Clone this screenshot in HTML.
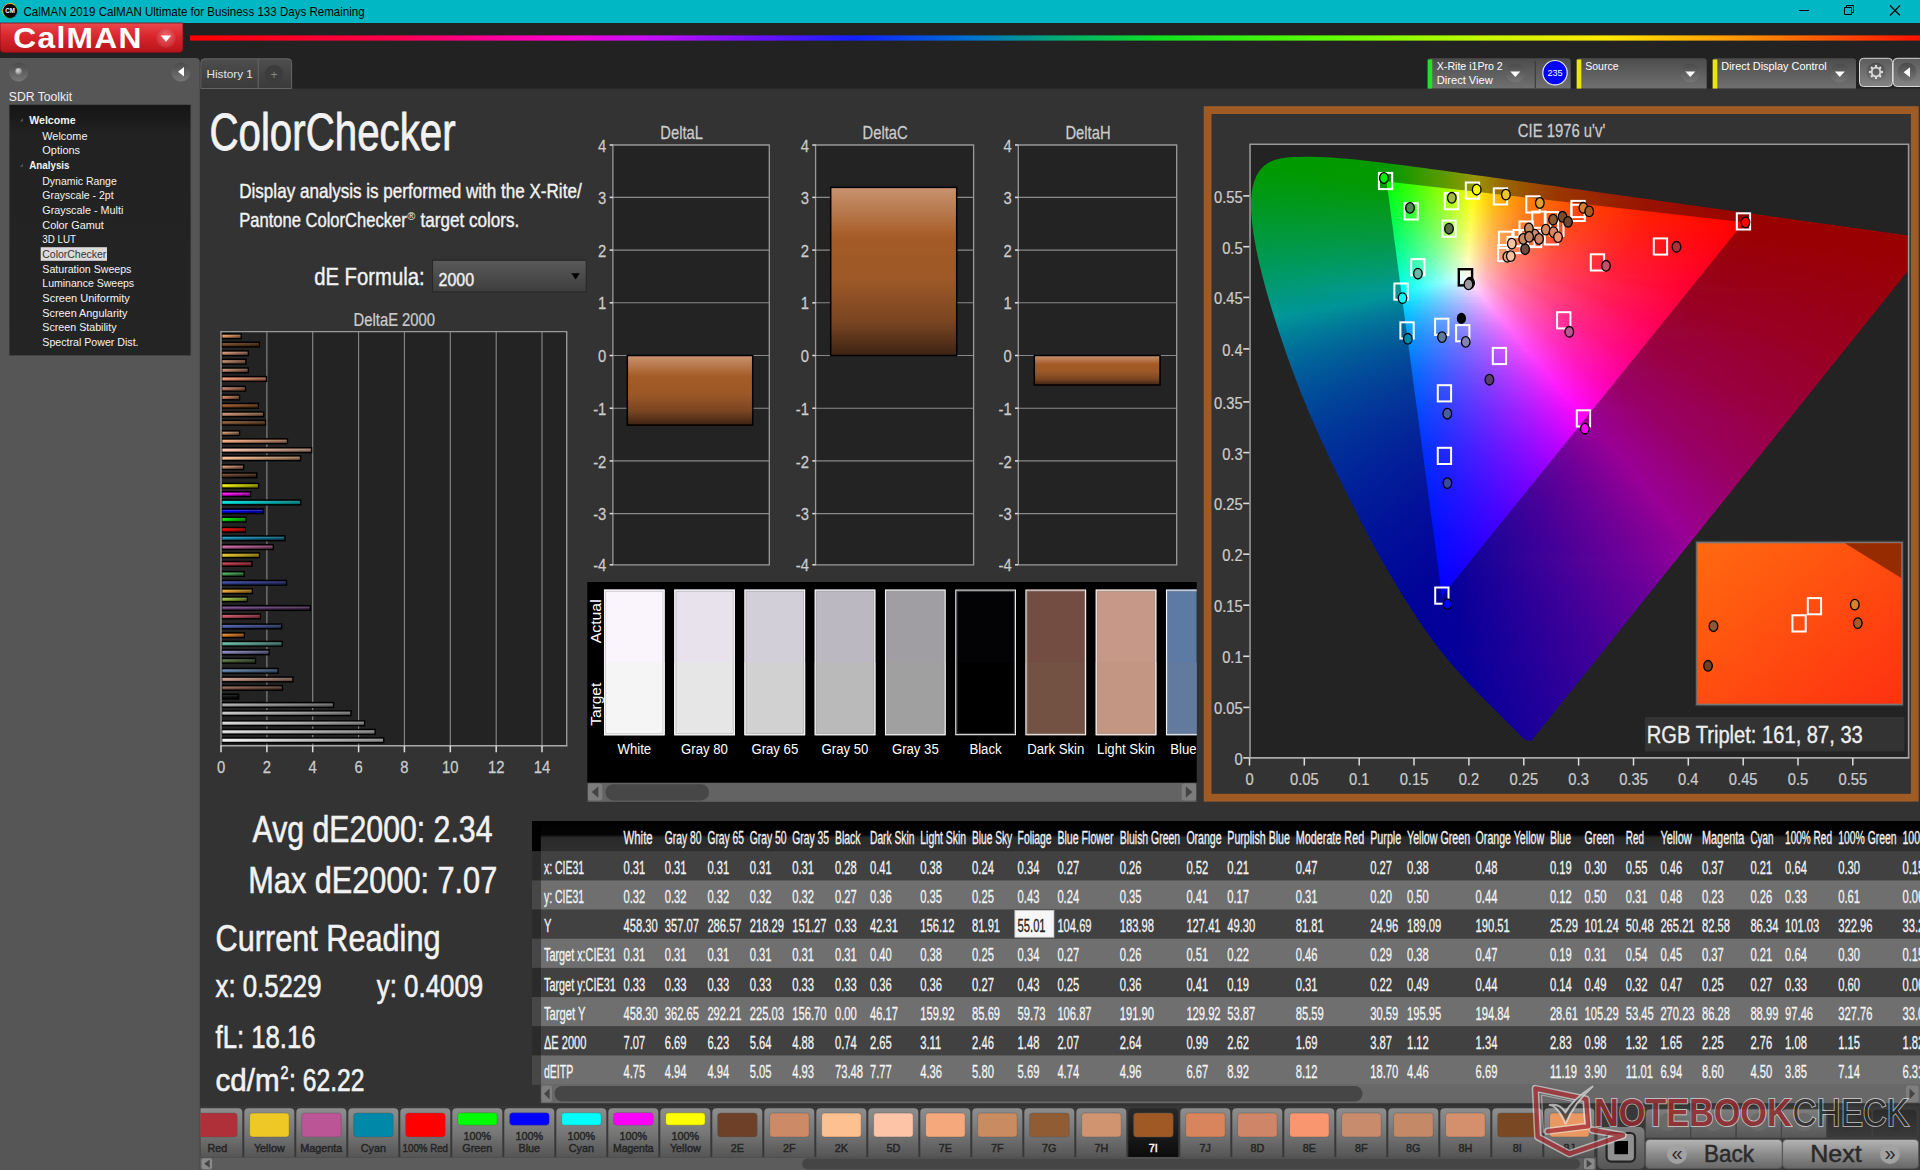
<!DOCTYPE html>
<html lang="en"><head><meta charset="utf-8"><title>CalMAN 2019 - ColorChecker</title>
<style>
html,body{margin:0;padding:0;background:#333;overflow:hidden}
body{width:1920px;height:1170px;position:relative;font-family:"Liberation Sans",sans-serif}
svg{position:absolute;left:0;top:0;display:block}
text{font-family:"Liberation Sans",sans-serif;white-space:pre}
</style></head><body>
<svg width="1920" height="1170" viewBox="0 0 1920 1170">
<defs>
<linearGradient id="icoring" x1="0" y1="0" x2="1" y2="1"><stop offset="0" stop-color="#ff3030"/><stop offset=".35" stop-color="#ffe000"/><stop offset=".65" stop-color="#20d040"/><stop offset="1" stop-color="#3050ff"/></linearGradient>
<linearGradient id="redbtn" x1="0" y1="0" x2="0" y2="1"><stop offset="0" stop-color="#e8494e"/><stop offset=".45" stop-color="#d9262c"/><stop offset="1" stop-color="#b5141a"/></linearGradient>
<radialGradient id="reddot" cx=".5" cy=".35" r=".7"><stop offset="0" stop-color="#f0656a"/><stop offset="1" stop-color="#c8242a"/></radialGradient>
<linearGradient id="rainbow" x1="0" x2="1" y1="0" y2="0"><stop offset="0" stop-color="#ff0000"/><stop offset=".12" stop-color="#ff0050"/><stop offset=".21" stop-color="#ff00c8"/><stop offset=".27" stop-color="#c010ff"/><stop offset=".33" stop-color="#6a10ff"/><stop offset=".385" stop-color="#1020ff"/><stop offset=".45" stop-color="#0070d0"/><stop offset=".50" stop-color="#00a878"/><stop offset=".56" stop-color="#10e020"/><stop offset=".66" stop-color="#60ff00"/><stop offset=".75" stop-color="#c8f800"/><stop offset=".82" stop-color="#ffe800"/><stop offset=".9" stop-color="#ff9000"/><stop offset="1" stop-color="#ff1000"/></linearGradient>
<linearGradient id="knob" x1="0" y1="0" x2="0" y2="1"><stop offset="0" stop-color="#4a4a4a"/><stop offset="1" stop-color="#767676"/></linearGradient>
<radialGradient id="ball" cx=".4" cy=".35" r=".7"><stop offset="0" stop-color="#ddd"/><stop offset="1" stop-color="#777"/></radialGradient>
<linearGradient id="treebg" x1="0" y1="0" x2="0" y2="1"><stop offset="0" stop-color="#151515"/><stop offset=".12" stop-color="#222"/><stop offset="1" stop-color="#242424"/></linearGradient>
<linearGradient id="tabg" x1="0" y1="0" x2="0" y2="1"><stop offset="0" stop-color="#4e4e4e"/><stop offset="1" stop-color="#3a3a3a"/></linearGradient>
<linearGradient id="devg" x1="0" y1="0" x2="0" y2="1"><stop offset="0" stop-color="#4c4c4c"/><stop offset="1" stop-color="#707070"/></linearGradient>
<linearGradient id="btng" x1="0" y1="0" x2="0" y2="1"><stop offset="0" stop-color="#5c5c5c"/><stop offset="1" stop-color="#848484"/></linearGradient>
<linearGradient id="barv" x1="0" y1="0" x2="0" y2="1"><stop offset="0" stop-color="#c99470"/><stop offset=".3" stop-color="#a55b26"/><stop offset=".55" stop-color="#9c5827"/><stop offset=".8" stop-color="#7a4522"/><stop offset="1" stop-color="#3c2213"/></linearGradient>
<linearGradient id="ddg" x1="0" y1="0" x2="0" y2="1"><stop offset="0" stop-color="#5a5a5a"/><stop offset="1" stop-color="#3d3d3d"/></linearGradient>
<linearGradient id="shade" x1="0" y1="0" x2="1" y2="0"><stop offset="0" stop-color="#000" stop-opacity="0"/><stop offset="1" stop-color="#000" stop-opacity=".45"/></linearGradient>
<linearGradient id="gloss" x1="0" y1="0" x2="0" y2="1"><stop offset="0" stop-color="#000" stop-opacity=".15"/><stop offset=".3" stop-color="#fff" stop-opacity=".2"/><stop offset=".6" stop-color="#000" stop-opacity="0"/><stop offset="1" stop-color="#000" stop-opacity=".4"/></linearGradient>
<clipPath id="swclip"><rect x="587.3" y="582" width="609.4" height="200"/></clipPath>
<clipPath id="tblclip"><rect x="532" y="821" width="1388" height="264"/></clipPath>
<linearGradient id="thg" x1="0" y1="0" x2="0" y2="1"><stop offset="0" stop-color="#000"/><stop offset=".45" stop-color="#050505"/><stop offset=".55" stop-color="#2a2a2a"/><stop offset="1" stop-color="#2e2e2e"/></linearGradient>
<linearGradient id="cb" gradientUnits="userSpaceOnUse" x1="1249" x2="1909" y1="0" y2="0"/><linearGradient id="d0" href="#cb"><stop offset=".0515" stop-color="#090"/><stop offset=".1364" stop-color="#090"/></linearGradient><linearGradient id="d1" href="#cb"><stop offset=".0364" stop-color="#090"/><stop offset=".1682" stop-color="#090"/></linearGradient><linearGradient id="d2" href="#cb"><stop offset=".0303" stop-color="#090"/><stop offset=".1955" stop-color="#090"/></linearGradient><linearGradient id="d3" href="#cb"><stop offset=".0242" stop-color="#090"/><stop offset=".2091" stop-color="#049900"/><stop offset=".2197" stop-color="#0d9900"/></linearGradient><linearGradient id="d4" href="#cb"><stop offset=".0197" stop-color="#090"/><stop offset=".2091" stop-color="#039900"/><stop offset=".2439" stop-color="#249900"/></linearGradient><linearGradient id="d5" href="#cb"><stop offset=".0182" stop-color="#090"/><stop offset=".2091" stop-color="#039900"/><stop offset=".2667" stop-color="#3b9900"/></linearGradient><linearGradient id="d6" href="#cb"><stop offset=".0152" stop-color="#009901"/><stop offset=".2106" stop-color="#049900"/><stop offset=".2894" stop-color="#549900"/></linearGradient><linearGradient id="d7" href="#cb"><stop offset=".0121" stop-color="#009903"/><stop offset=".2106" stop-color="#049900"/><stop offset=".3015" stop-color="#639900"/><stop offset=".3106" stop-color="#6e9900"/></linearGradient><linearGradient id="d8" href="#cb"><stop offset=".0106" stop-color="#009905"/><stop offset=".2106" stop-color="#039900"/><stop offset=".3015" stop-color="#639900"/><stop offset=".3333" stop-color="#8d9900"/></linearGradient><linearGradient id="d9" href="#cb"><stop offset=".0091" stop-color="#009906"/><stop offset=".2106" stop-color="#039900"/><stop offset=".3015" stop-color="#639900"/><stop offset=".3439" stop-color="#999600"/><stop offset=".3545" stop-color="#980"/></linearGradient><linearGradient id="d10" href="#cb"><stop offset=".0076" stop-color="#009908"/><stop offset=".2121" stop-color="#049900"/><stop offset=".3015" stop-color="#639900"/><stop offset=".3439" stop-color="#999500"/><stop offset=".3773" stop-color="#996f00"/></linearGradient><linearGradient id="d11" href="#cb"><stop offset=".0061" stop-color="#00990a"/><stop offset=".2121" stop-color="#049900"/><stop offset=".3015" stop-color="#639900"/><stop offset=".3439" stop-color="#999500"/><stop offset=".3924" stop-color="#996200"/><stop offset=".3985" stop-color="#995e00"/></linearGradient><linearGradient id="d12" href="#cb"><stop offset=".0061" stop-color="#00990b"/><stop offset=".2121" stop-color="#039900"/><stop offset=".3015" stop-color="#639900"/><stop offset=".3424" stop-color="#999700"/><stop offset=".3909" stop-color="#996300"/><stop offset=".4197" stop-color="#995000"/></linearGradient><linearGradient id="d13" href="#cb"><stop offset=".0045" stop-color="#00990d"/><stop offset=".2121" stop-color="#039901"/><stop offset=".3015" stop-color="#639900"/><stop offset=".3424" stop-color="#999600"/><stop offset=".3894" stop-color="#996400"/><stop offset=".4424" stop-color="#994300"/></linearGradient><linearGradient id="d14" href="#cb"><stop offset=".0030" stop-color="#00990f"/><stop offset=".2136" stop-color="#049903"/><stop offset=".3015" stop-color="#639900"/><stop offset=".3424" stop-color="#999600"/><stop offset=".3894" stop-color="#996300"/><stop offset=".4636" stop-color="#993a00"/></linearGradient><linearGradient id="d15" href="#cb"><stop offset=".0030" stop-color="#009910"/><stop offset=".2136" stop-color="#049905"/><stop offset=".3015" stop-color="#639900"/><stop offset=".3424" stop-color="#999600"/><stop offset=".3894" stop-color="#996300"/><stop offset=".4682" stop-color="#993700"/><stop offset=".4848" stop-color="#993100"/></linearGradient><linearGradient id="d16" href="#cb"><stop offset=".0030" stop-color="#009912"/><stop offset=".2136" stop-color="#039907"/><stop offset=".3015" stop-color="#639901"/><stop offset=".3424" stop-color="#999500"/><stop offset=".3894" stop-color="#996300"/><stop offset=".4682" stop-color="#993700"/><stop offset=".5076" stop-color="#992a00"/></linearGradient><linearGradient id="d17" href="#cb"><stop offset=".0015" stop-color="#009914"/><stop offset=".2136" stop-color="#03990a"/><stop offset=".3015" stop-color="#639903"/><stop offset=".3424" stop-color="#999500"/><stop offset=".3894" stop-color="#996200"/><stop offset=".4682" stop-color="#993700"/><stop offset=".5288" stop-color="#992400"/></linearGradient><linearGradient id="d18" href="#cb"><stop offset=".0015" stop-color="#009915"/><stop offset=".2152" stop-color="#04990c"/><stop offset=".3015" stop-color="#639906"/><stop offset=".3424" stop-color="#999502"/><stop offset=".3894" stop-color="#996200"/><stop offset=".4682" stop-color="#993600"/><stop offset=".5500" stop-color="#991f00"/></linearGradient><linearGradient id="d19" href="#cb"><stop offset=".0015" stop-color="#009917"/><stop offset=".2152" stop-color="#04990e"/><stop offset=".3015" stop-color="#639908"/><stop offset=".3409" stop-color="#999705"/><stop offset=".3879" stop-color="#996300"/><stop offset=".4652" stop-color="#993700"/><stop offset=".5727" stop-color="#991a00"/></linearGradient><linearGradient id="d20" href="#cb"><stop offset=".0015" stop-color="#009918"/><stop offset=".2152" stop-color="#039910"/><stop offset=".3015" stop-color="#63990b"/><stop offset=".3409" stop-color="#999608"/><stop offset=".3864" stop-color="#996402"/><stop offset=".4621" stop-color="#993800"/><stop offset=".5939" stop-color="#991600"/></linearGradient><linearGradient id="d21" href="#cb"><stop offset=".0015" stop-color="#00991a"/><stop offset=".2152" stop-color="#039912"/><stop offset=".3000" stop-color="#62990e"/><stop offset=".3409" stop-color="#99960a"/><stop offset=".3864" stop-color="#996304"/><stop offset=".4621" stop-color="#993800"/><stop offset=".6015" stop-color="#991400"/><stop offset=".6152" stop-color="#991200"/></linearGradient><linearGradient id="d22" href="#cb"><stop offset=".0015" stop-color="#00991c"/><stop offset=".2167" stop-color="#049915"/><stop offset=".3015" stop-color="#649910"/><stop offset=".3409" stop-color="#99950d"/><stop offset=".3864" stop-color="#996306"/><stop offset=".4621" stop-color="#993700"/><stop offset=".6015" stop-color="#991400"/><stop offset=".6379" stop-color="#990e00"/></linearGradient><linearGradient id="d23" href="#cb"><stop offset=".0015" stop-color="#00991d"/><stop offset=".2167" stop-color="#049917"/><stop offset=".3015" stop-color="#649913"/><stop offset=".3409" stop-color="#999510"/><stop offset=".3864" stop-color="#996208"/><stop offset=".4621" stop-color="#993702"/><stop offset=".6030" stop-color="#991300"/><stop offset=".6591" stop-color="#990b00"/></linearGradient><linearGradient id="d24" href="#cb"><stop offset=".0015" stop-color="#00991f"/><stop offset=".2167" stop-color="#039919"/><stop offset=".3000" stop-color="#629916"/><stop offset=".3409" stop-color="#999513"/><stop offset=".3864" stop-color="#99620a"/><stop offset=".4621" stop-color="#993703"/><stop offset=".6030" stop-color="#991300"/><stop offset=".6803" stop-color="#990900"/></linearGradient><linearGradient id="d25" href="#cb"><stop offset=".0015" stop-color="#009921"/><stop offset=".2167" stop-color="#03991c"/><stop offset=".3000" stop-color="#629918"/><stop offset=".3394" stop-color="#999716"/><stop offset=".3848" stop-color="#99630d"/><stop offset=".4591" stop-color="#993805"/><stop offset=".5970" stop-color="#991400"/><stop offset=".7030" stop-color="#990600"/></linearGradient><linearGradient id="d26" href="#cb"><stop offset=".0015" stop-color="#009923"/><stop offset=".2182" stop-color="#04991e"/><stop offset=".3015" stop-color="#64991b"/><stop offset=".3394" stop-color="#999619"/><stop offset=".3848" stop-color="#99630f"/><stop offset=".4591" stop-color="#993706"/><stop offset=".5970" stop-color="#991400"/><stop offset=".7242" stop-color="#990400"/></linearGradient><linearGradient id="d27" href="#cb"><stop offset=".0015" stop-color="#009924"/><stop offset=".2182" stop-color="#049920"/><stop offset=".3015" stop-color="#64991e"/><stop offset=".3394" stop-color="#99961c"/><stop offset=".3833" stop-color="#996311"/><stop offset=".4576" stop-color="#993808"/><stop offset=".5939" stop-color="#991400"/><stop offset=".7455" stop-color="#990200"/></linearGradient><linearGradient id="d28" href="#cb"><stop offset=".0015" stop-color="#009926"/><stop offset=".2182" stop-color="#039923"/><stop offset=".3000" stop-color="#629921"/><stop offset=".3394" stop-color="#99961f"/><stop offset=".3833" stop-color="#996313"/><stop offset=".4576" stop-color="#993709"/><stop offset=".5939" stop-color="#991301"/><stop offset=".7682" stop-color="#900"/></linearGradient><linearGradient id="d29" href="#cb"><stop offset=".0015" stop-color="#009928"/><stop offset=".2182" stop-color="#039925"/><stop offset=".3000" stop-color="#629924"/><stop offset=".3394" stop-color="#999522"/><stop offset=".3833" stop-color="#996315"/><stop offset=".4576" stop-color="#99370b"/><stop offset=".5939" stop-color="#991302"/><stop offset=".7894" stop-color="#900"/></linearGradient><linearGradient id="d30" href="#cb"><stop offset=".0015" stop-color="#00992a"/><stop offset=".2197" stop-color="#049928"/><stop offset=".3015" stop-color="#649926"/><stop offset=".3394" stop-color="#999525"/><stop offset=".3833" stop-color="#996218"/><stop offset=".4576" stop-color="#99370c"/><stop offset=".5939" stop-color="#991303"/><stop offset=".7970" stop-color="#900"/><stop offset=".8106" stop-color="#900"/></linearGradient><linearGradient id="d31" href="#cb"><stop offset=".0015" stop-color="#00992b"/><stop offset=".2197" stop-color="#04992a"/><stop offset=".3000" stop-color="#629929"/><stop offset=".3379" stop-color="#999728"/><stop offset=".3818" stop-color="#99631a"/><stop offset=".4545" stop-color="#99370e"/><stop offset=".5879" stop-color="#991404"/><stop offset=".7909" stop-color="#900"/><stop offset=".8333" stop-color="#900"/></linearGradient><linearGradient id="d32" href="#cb"><stop offset=".0015" stop-color="#00992d"/><stop offset=".2197" stop-color="#03992d"/><stop offset=".3000" stop-color="#62992c"/><stop offset=".3379" stop-color="#99962b"/><stop offset=".3818" stop-color="#99631c"/><stop offset=".4545" stop-color="#993710"/><stop offset=".5879" stop-color="#991305"/><stop offset=".7894" stop-color="#900"/><stop offset=".8545" stop-color="#900"/></linearGradient><linearGradient id="d33" href="#cb"><stop offset=".0015" stop-color="#00992f"/><stop offset=".2197" stop-color="#03992f"/><stop offset=".3000" stop-color="#62992f"/><stop offset=".3379" stop-color="#99962f"/><stop offset=".3818" stop-color="#99621f"/><stop offset=".4545" stop-color="#993711"/><stop offset=".5879" stop-color="#991306"/><stop offset=".7879" stop-color="#900"/><stop offset=".8758" stop-color="#900"/></linearGradient><linearGradient id="d34" href="#cb"><stop offset=".0030" stop-color="#009931"/><stop offset=".2212" stop-color="#049932"/><stop offset=".3015" stop-color="#649932"/><stop offset=".3379" stop-color="#999632"/><stop offset=".3803" stop-color="#996321"/><stop offset=".4515" stop-color="#993813"/><stop offset=".5833" stop-color="#991407"/><stop offset=".7833" stop-color="#900"/><stop offset=".8985" stop-color="#900"/></linearGradient><linearGradient id="d35" href="#cb"><stop offset=".0030" stop-color="#093"/><stop offset=".2212" stop-color="#049934"/><stop offset=".3000" stop-color="#629935"/><stop offset=".3379" stop-color="#999535"/><stop offset=".3803" stop-color="#996324"/><stop offset=".4515" stop-color="#993715"/><stop offset=".5833" stop-color="#991308"/><stop offset=".7818" stop-color="#990001"/><stop offset=".9197" stop-color="#900"/></linearGradient><linearGradient id="d36" href="#cb"><stop offset=".0030" stop-color="#009934"/><stop offset=".2212" stop-color="#039937"/><stop offset=".3000" stop-color="#629939"/><stop offset=".3379" stop-color="#999538"/><stop offset=".3803" stop-color="#996226"/><stop offset=".4515" stop-color="#993716"/><stop offset=".5833" stop-color="#991309"/><stop offset=".7803" stop-color="#990001"/><stop offset=".9409" stop-color="#900"/></linearGradient><linearGradient id="d37" href="#cb"><stop offset=".0030" stop-color="#009936"/><stop offset=".2212" stop-color="#03993a"/><stop offset=".3000" stop-color="#62993c"/><stop offset=".3364" stop-color="#99973c"/><stop offset=".3788" stop-color="#996329"/><stop offset=".4485" stop-color="#993818"/><stop offset=".5773" stop-color="#99140b"/><stop offset=".7742" stop-color="#990002"/><stop offset=".9636" stop-color="#900"/></linearGradient><linearGradient id="d38" href="#cb"><stop offset=".0045" stop-color="#009938"/><stop offset=".2227" stop-color="#04993c"/><stop offset=".3000" stop-color="#62993f"/><stop offset=".3364" stop-color="#99973f"/><stop offset=".3788" stop-color="#99632b"/><stop offset=".4485" stop-color="#99371a"/><stop offset=".5773" stop-color="#99140c"/><stop offset=".7727" stop-color="#990003"/><stop offset=".9848" stop-color="#900"/></linearGradient><linearGradient id="d39" href="#cb"><stop offset=".0045" stop-color="#00993a"/><stop offset=".2227" stop-color="#04993f"/><stop offset=".3000" stop-color="#639942"/><stop offset=".3364" stop-color="#999643"/><stop offset=".3788" stop-color="#99622d"/><stop offset=".4485" stop-color="#99371b"/><stop offset=".5773" stop-color="#99130d"/><stop offset=".7712" stop-color="#990004"/><stop offset=".9985" stop-color="#900"/></linearGradient><linearGradient id="d40" href="#cb"><stop offset=".0045" stop-color="#00993c"/><stop offset=".2227" stop-color="#039942"/><stop offset=".3000" stop-color="#639945"/><stop offset=".3364" stop-color="#999646"/><stop offset=".3773" stop-color="#996330"/><stop offset=".4455" stop-color="#99381e"/><stop offset=".5712" stop-color="#99140e"/><stop offset=".7667" stop-color="#990004"/><stop offset=".9985" stop-color="#900"/></linearGradient><linearGradient id="d41" href="#cb"><stop offset=".0061" stop-color="#00993e"/><stop offset=".2227" stop-color="#039944"/><stop offset=".3000" stop-color="#639948"/><stop offset=".3364" stop-color="#999549"/><stop offset=".3773" stop-color="#996333"/><stop offset=".4455" stop-color="#99381f"/><stop offset=".5712" stop-color="#99140f"/><stop offset=".7636" stop-color="#990005"/><stop offset=".9985" stop-color="#900"/></linearGradient><linearGradient id="d42" href="#cb"><stop offset=".0061" stop-color="#009940"/><stop offset=".2242" stop-color="#049947"/><stop offset=".3000" stop-color="#63994c"/><stop offset=".3364" stop-color="#99954c"/><stop offset=".3773" stop-color="#996235"/><stop offset=".4455" stop-color="#993721"/><stop offset=".5712" stop-color="#991410"/><stop offset=".7621" stop-color="#990006"/><stop offset=".9985" stop-color="#900"/></linearGradient><linearGradient id="d43" href="#cb"><stop offset=".0061" stop-color="#009942"/><stop offset=".2242" stop-color="#04994a"/><stop offset=".3000" stop-color="#63994f"/><stop offset=".3348" stop-color="#999751"/><stop offset=".3758" stop-color="#996338"/><stop offset=".4439" stop-color="#993823"/><stop offset=".5682" stop-color="#991412"/><stop offset=".7591" stop-color="#990007"/><stop offset=".9985" stop-color="#900"/></linearGradient><linearGradient id="d44" href="#cb"><stop offset=".0076" stop-color="#094"/><stop offset=".2242" stop-color="#03994d"/><stop offset=".3000" stop-color="#639953"/><stop offset=".3348" stop-color="#999754"/><stop offset=".3758" stop-color="#99633b"/><stop offset=".4439" stop-color="#993725"/><stop offset=".5697" stop-color="#991313"/><stop offset=".7576" stop-color="#990007"/><stop offset=".9985" stop-color="#990001"/></linearGradient><linearGradient id="d45" href="#cb"><stop offset=".0076" stop-color="#009946"/><stop offset=".2242" stop-color="#039950"/><stop offset=".3000" stop-color="#639956"/><stop offset=".3348" stop-color="#999658"/><stop offset=".3758" stop-color="#99633d"/><stop offset=".4439" stop-color="#993726"/><stop offset=".5697" stop-color="#991314"/><stop offset=".7561" stop-color="#990008"/><stop offset=".9985" stop-color="#990001"/></linearGradient><linearGradient id="d46" href="#cb"><stop offset=".0091" stop-color="#009948"/><stop offset=".2258" stop-color="#049953"/><stop offset=".3000" stop-color="#639959"/><stop offset=".3348" stop-color="#99965b"/><stop offset=".3758" stop-color="#99623f"/><stop offset=".4424" stop-color="#993728"/><stop offset=".5667" stop-color="#991315"/><stop offset=".7530" stop-color="#990009"/><stop offset=".9985" stop-color="#990002"/></linearGradient><linearGradient id="d47" href="#cb"><stop offset=".0091" stop-color="#00994a"/><stop offset=".2258" stop-color="#039956"/><stop offset=".3000" stop-color="#63995d"/><stop offset=".3348" stop-color="#99955f"/><stop offset=".3758" stop-color="#996242"/><stop offset=".4424" stop-color="#99372a"/><stop offset=".5667" stop-color="#991316"/><stop offset=".7515" stop-color="#99000a"/><stop offset=".9985" stop-color="#990002"/></linearGradient><linearGradient id="d48" href="#cb"><stop offset=".0091" stop-color="#00994c"/><stop offset=".2258" stop-color="#039959"/><stop offset=".3000" stop-color="#639960"/><stop offset=".3348" stop-color="#999562"/><stop offset=".3742" stop-color="#996345"/><stop offset=".4409" stop-color="#99372c"/><stop offset=".5636" stop-color="#991317"/><stop offset=".7470" stop-color="#99000b"/><stop offset=".9985" stop-color="#990003"/></linearGradient><linearGradient id="d49" href="#cb"><stop offset=".0106" stop-color="#00994e"/><stop offset=".2258" stop-color="#03995c"/><stop offset=".2985" stop-color="#619964"/><stop offset=".3333" stop-color="#999767"/><stop offset=".3727" stop-color="#996449"/><stop offset=".4379" stop-color="#99382f"/><stop offset=".5576" stop-color="#991419"/><stop offset=".7424" stop-color="#99000b"/><stop offset=".9985" stop-color="#990003"/></linearGradient><linearGradient id="d50" href="#cb"><stop offset=".0106" stop-color="#009950"/><stop offset=".2273" stop-color="#04995f"/><stop offset=".3000" stop-color="#639968"/><stop offset=".3333" stop-color="#99976b"/><stop offset=".3727" stop-color="#99634b"/><stop offset=".4379" stop-color="#993830"/><stop offset=".5576" stop-color="#99141a"/><stop offset=".7409" stop-color="#99000c"/><stop offset=".9985" stop-color="#990004"/></linearGradient><linearGradient id="d51" href="#cb"><stop offset=".0121" stop-color="#009952"/><stop offset=".2273" stop-color="#039962"/><stop offset=".3000" stop-color="#63996b"/><stop offset=".3333" stop-color="#99966f"/><stop offset=".3727" stop-color="#99634e"/><stop offset=".4379" stop-color="#993732"/><stop offset=".5576" stop-color="#99141b"/><stop offset=".7394" stop-color="#99000d"/><stop offset=".9985" stop-color="#990004"/></linearGradient><linearGradient id="d52" href="#cb"><stop offset=".0121" stop-color="#009954"/><stop offset=".2273" stop-color="#039965"/><stop offset=".3000" stop-color="#63996f"/><stop offset=".3333" stop-color="#999672"/><stop offset=".3727" stop-color="#996250"/><stop offset=".4379" stop-color="#993734"/><stop offset=".5576" stop-color="#99131c"/><stop offset=".7364" stop-color="#99000e"/><stop offset=".9985" stop-color="#990005"/></linearGradient><linearGradient id="d53" href="#cb"><stop offset=".0136" stop-color="#009956"/><stop offset=".2273" stop-color="#039968"/><stop offset=".2985" stop-color="#619973"/><stop offset=".3333" stop-color="#999576"/><stop offset=".3727" stop-color="#996253"/><stop offset=".4379" stop-color="#993636"/><stop offset=".5576" stop-color="#99131e"/><stop offset=".7348" stop-color="#99000f"/><stop offset=".9985" stop-color="#990005"/></linearGradient><linearGradient id="d54" href="#cb"><stop offset=".0136" stop-color="#009958"/><stop offset=".2288" stop-color="#04996c"/><stop offset=".3000" stop-color="#649977"/><stop offset=".3333" stop-color="#99957a"/><stop offset=".3712" stop-color="#996357"/><stop offset=".4348" stop-color="#993738"/><stop offset=".5530" stop-color="#99131f"/><stop offset=".7303" stop-color="#990010"/><stop offset=".9985" stop-color="#990006"/></linearGradient><linearGradient id="d55" href="#cb"><stop offset=".0136" stop-color="#00995a"/><stop offset=".2288" stop-color="#03996f"/><stop offset=".3000" stop-color="#64997a"/><stop offset=".3318" stop-color="#999780"/><stop offset=".3697" stop-color="#99645b"/><stop offset=".4318" stop-color="#99383b"/><stop offset=".5470" stop-color="#991421"/><stop offset=".7258" stop-color="#901"/><stop offset=".9985" stop-color="#990006"/></linearGradient><linearGradient id="d56" href="#cb"><stop offset=".0152" stop-color="#00995d"/><stop offset=".2288" stop-color="#039972"/><stop offset=".2985" stop-color="#61997e"/><stop offset=".3318" stop-color="#999784"/><stop offset=".3697" stop-color="#99635d"/><stop offset=".4318" stop-color="#99383d"/><stop offset=".5470" stop-color="#991422"/><stop offset=".7242" stop-color="#901"/><stop offset=".9985" stop-color="#990006"/></linearGradient><linearGradient id="d57" href="#cb"><stop offset=".0152" stop-color="#00995f"/><stop offset=".2288" stop-color="#039975"/><stop offset=".2985" stop-color="#619982"/><stop offset=".3318" stop-color="#999687"/><stop offset=".3697" stop-color="#996360"/><stop offset=".4318" stop-color="#99383f"/><stop offset=".5470" stop-color="#991424"/><stop offset=".7227" stop-color="#990012"/><stop offset=".9985" stop-color="#990007"/></linearGradient><linearGradient id="d58" href="#cb"><stop offset=".0167" stop-color="#009961"/><stop offset=".2303" stop-color="#049979"/><stop offset=".3000" stop-color="#649986"/><stop offset=".3318" stop-color="#99968b"/><stop offset=".3697" stop-color="#996263"/><stop offset=".4318" stop-color="#993741"/><stop offset=".5470" stop-color="#991325"/><stop offset=".7212" stop-color="#990013"/><stop offset=".9985" stop-color="#990007"/></linearGradient><linearGradient id="d59" href="#cb"><stop offset=".0167" stop-color="#009963"/><stop offset=".2303" stop-color="#03997c"/><stop offset=".2985" stop-color="#61998a"/><stop offset=".3318" stop-color="#99958f"/><stop offset=".3697" stop-color="#996266"/><stop offset=".4318" stop-color="#993743"/><stop offset=".5470" stop-color="#991326"/><stop offset=".7182" stop-color="#990014"/><stop offset=".9970" stop-color="#990008"/></linearGradient><linearGradient id="d60" href="#cb"><stop offset=".0182" stop-color="#096"/><stop offset=".2303" stop-color="#039980"/><stop offset=".2985" stop-color="#61998e"/><stop offset=".3318" stop-color="#999593"/><stop offset=".3697" stop-color="#996168"/><stop offset=".4318" stop-color="#993645"/><stop offset=".5470" stop-color="#991327"/><stop offset=".7167" stop-color="#990015"/><stop offset=".9939" stop-color="#990008"/></linearGradient><linearGradient id="d61" href="#cb"><stop offset=".0182" stop-color="#009968"/><stop offset=".2303" stop-color="#029983"/><stop offset=".2985" stop-color="#629992"/><stop offset=".3318" stop-color="#999597"/><stop offset=".3682" stop-color="#99636c"/><stop offset=".4288" stop-color="#993748"/><stop offset=".5409" stop-color="#991429"/><stop offset=".7121" stop-color="#990016"/><stop offset=".9924" stop-color="#990009"/></linearGradient><linearGradient id="d62" href="#cb"><stop offset=".0197" stop-color="#00996a"/><stop offset=".2318" stop-color="#049987"/><stop offset=".3000" stop-color="#649997"/><stop offset=".3348" stop-color="#998f96"/><stop offset=".3742" stop-color="#995c6a"/><stop offset=".4394" stop-color="#993245"/><stop offset=".5621" stop-color="#990f27"/><stop offset=".7182" stop-color="#990016"/><stop offset=".9894" stop-color="#99000a"/></linearGradient><linearGradient id="d63" href="#cb"><stop offset=".0197" stop-color="#00996d"/><stop offset=".2318" stop-color="#03998a"/><stop offset=".3106" stop-color="#739499"/><stop offset=".3379" stop-color="#998996"/><stop offset=".3788" stop-color="#995769"/><stop offset=".4485" stop-color="#992e44"/><stop offset=".5803" stop-color="#990c25"/><stop offset=".7227" stop-color="#990017"/><stop offset=".9864" stop-color="#99000a"/></linearGradient><linearGradient id="d64" href="#cb"><stop offset=".0212" stop-color="#00996f"/><stop offset=".2318" stop-color="#03998e"/><stop offset=".2985" stop-color="#5e9399"/><stop offset=".3409" stop-color="#998495"/><stop offset=".3833" stop-color="#995368"/><stop offset=".4561" stop-color="#992a43"/><stop offset=".5970" stop-color="#990924"/><stop offset=".7318" stop-color="#990017"/><stop offset=".9848" stop-color="#99000b"/></linearGradient><linearGradient id="d65" href="#cb"><stop offset=".0227" stop-color="#009971"/><stop offset=".2318" stop-color="#029991"/><stop offset=".2924" stop-color="#539199"/><stop offset=".3424" stop-color="#998197"/><stop offset=".3864" stop-color="#995069"/><stop offset=".4621" stop-color="#992842"/><stop offset=".6091" stop-color="#990723"/><stop offset=".7485" stop-color="#990016"/><stop offset=".9818" stop-color="#99000b"/></linearGradient><linearGradient id="d66" href="#cb"><stop offset=".0227" stop-color="#009974"/><stop offset=".2333" stop-color="#049995"/><stop offset=".3455" stop-color="#997c96"/><stop offset=".3909" stop-color="#994c68"/><stop offset=".4697" stop-color="#992541"/><stop offset=".6258" stop-color="#990522"/><stop offset=".8985" stop-color="#99000f"/><stop offset=".9803" stop-color="#99000c"/></linearGradient><linearGradient id="d67" href="#cb"><stop offset=".0242" stop-color="#009976"/><stop offset=".2333" stop-color="#039999"/><stop offset=".3485" stop-color="#997795"/><stop offset=".3955" stop-color="#994867"/><stop offset=".4788" stop-color="#992140"/><stop offset=".6455" stop-color="#990221"/><stop offset=".9773" stop-color="#99000c"/></linearGradient><linearGradient id="d68" href="#cb"><stop offset=".0242" stop-color="#009979"/><stop offset=".2333" stop-color="#039599"/><stop offset=".3500" stop-color="#997497"/><stop offset=".3970" stop-color="#994768"/><stop offset=".4803" stop-color="#992041"/><stop offset=".6470" stop-color="#990222"/><stop offset=".9742" stop-color="#99000d"/></linearGradient><linearGradient id="d69" href="#cb"><stop offset=".0258" stop-color="#00997b"/><stop offset=".2212" stop-color="#009599"/><stop offset=".2364" stop-color="#069199"/><stop offset=".3530" stop-color="#997096"/><stop offset=".4015" stop-color="#994367"/><stop offset=".4864" stop-color="#991e41"/><stop offset=".6576" stop-color="#990021"/><stop offset=".9727" stop-color="#99000d"/></linearGradient><linearGradient id="d70" href="#cb"><stop offset=".0258" stop-color="#00997e"/><stop offset=".2061" stop-color="#009599"/><stop offset=".2348" stop-color="#038e99"/><stop offset=".3561" stop-color="#996b95"/><stop offset=".4061" stop-color="#994067"/><stop offset=".4939" stop-color="#991c40"/><stop offset=".6667" stop-color="#990021"/><stop offset=".9697" stop-color="#99000e"/></linearGradient><linearGradient id="d71" href="#cb"><stop offset=".0273" stop-color="#009980"/><stop offset=".1924" stop-color="#009599"/><stop offset=".2348" stop-color="#038b99"/><stop offset=".3576" stop-color="#996997"/><stop offset=".4076" stop-color="#993f68"/><stop offset=".4955" stop-color="#991b41"/><stop offset=".6667" stop-color="#902"/><stop offset=".9682" stop-color="#99000f"/></linearGradient><linearGradient id="d72" href="#cb"><stop offset=".0288" stop-color="#009983"/><stop offset=".1788" stop-color="#009499"/><stop offset=".2364" stop-color="#048799"/><stop offset=".3606" stop-color="#996596"/><stop offset=".4121" stop-color="#993b67"/><stop offset=".5030" stop-color="#991940"/><stop offset=".6697" stop-color="#902"/><stop offset=".9652" stop-color="#99000f"/></linearGradient><linearGradient id="d73" href="#cb"><stop offset=".0288" stop-color="#009986"/><stop offset=".1636" stop-color="#009499"/><stop offset=".2364" stop-color="#048499"/><stop offset=".3636" stop-color="#996195"/><stop offset=".4167" stop-color="#993866"/><stop offset=".5091" stop-color="#991740"/><stop offset=".6727" stop-color="#990023"/><stop offset=".9621" stop-color="#990010"/></linearGradient><linearGradient id="d74" href="#cb"><stop offset=".0303" stop-color="#098"/><stop offset=".1500" stop-color="#009499"/><stop offset=".2364" stop-color="#038199"/><stop offset=".3652" stop-color="#995f97"/><stop offset=".4182" stop-color="#993768"/><stop offset=".5106" stop-color="#991641"/><stop offset=".6712" stop-color="#990024"/><stop offset=".9606" stop-color="#990010"/></linearGradient><linearGradient id="d75" href="#cb"><stop offset=".0303" stop-color="#00998b"/><stop offset=".1379" stop-color="#009499"/><stop offset=".2364" stop-color="#037e99"/><stop offset=".3682" stop-color="#995b96"/><stop offset=".4212" stop-color="#993568"/><stop offset=".5152" stop-color="#991541"/><stop offset=".6727" stop-color="#990025"/><stop offset=".9576" stop-color="#901"/></linearGradient><linearGradient id="d76" href="#cb"><stop offset=".0318" stop-color="#00998e"/><stop offset=".1258" stop-color="#009399"/><stop offset=".2379" stop-color="#047b99"/><stop offset=".3712" stop-color="#995896"/><stop offset=".4258" stop-color="#993267"/><stop offset=".5227" stop-color="#991340"/><stop offset=".6742" stop-color="#990025"/><stop offset=".9561" stop-color="#990012"/></linearGradient><linearGradient id="d77" href="#cb"><stop offset=".0333" stop-color="#009990"/><stop offset=".1167" stop-color="#009299"/><stop offset=".2379" stop-color="#037999"/><stop offset=".3742" stop-color="#995495"/><stop offset=".4303" stop-color="#993066"/><stop offset=".5288" stop-color="#991140"/><stop offset=".6758" stop-color="#990026"/><stop offset=".9530" stop-color="#990012"/></linearGradient><linearGradient id="d78" href="#cb"><stop offset=".0333" stop-color="#009993"/><stop offset=".1227" stop-color="#008e99"/><stop offset=".2379" stop-color="#037699"/><stop offset=".3758" stop-color="#995396"/><stop offset=".4318" stop-color="#992e68"/><stop offset=".5303" stop-color="#991041"/><stop offset=".6742" stop-color="#990027"/><stop offset=".9500" stop-color="#990013"/></linearGradient><linearGradient id="d79" href="#cb"><stop offset=".0348" stop-color="#009996"/><stop offset=".2394" stop-color="#047399"/><stop offset=".3788" stop-color="#994f96"/><stop offset=".4364" stop-color="#992c67"/><stop offset=".5379" stop-color="#990e40"/><stop offset=".6742" stop-color="#990028"/><stop offset=".9485" stop-color="#990013"/></linearGradient><linearGradient id="d80" href="#cb"><stop offset=".0348" stop-color="#099"/><stop offset=".2394" stop-color="#037199"/><stop offset=".3818" stop-color="#994c95"/><stop offset=".4409" stop-color="#992a66"/><stop offset=".5439" stop-color="#990d40"/><stop offset=".6742" stop-color="#990029"/><stop offset=".9455" stop-color="#990014"/></linearGradient><linearGradient id="d81" href="#cb"><stop offset=".0364" stop-color="#009699"/><stop offset=".2394" stop-color="#036e99"/><stop offset=".3833" stop-color="#994b96"/><stop offset=".4424" stop-color="#992967"/><stop offset=".5455" stop-color="#990c40"/><stop offset=".6727" stop-color="#99002a"/><stop offset=".9439" stop-color="#990015"/></linearGradient><linearGradient id="d82" href="#cb"><stop offset=".0379" stop-color="#009499"/><stop offset=".2409" stop-color="#046c99"/><stop offset=".3864" stop-color="#994896"/><stop offset=".4470" stop-color="#992667"/><stop offset=".5530" stop-color="#990b40"/><stop offset=".6742" stop-color="#99002a"/><stop offset=".9409" stop-color="#990015"/></linearGradient><linearGradient id="d83" href="#cb"><stop offset=".0379" stop-color="#009199"/><stop offset=".2409" stop-color="#046999"/><stop offset=".3894" stop-color="#994595"/><stop offset=".4500" stop-color="#992567"/><stop offset=".5576" stop-color="#990a40"/><stop offset=".6773" stop-color="#99002b"/><stop offset=".9379" stop-color="#990016"/></linearGradient><linearGradient id="d84" href="#cb"><stop offset=".0394" stop-color="#008e99"/><stop offset=".2409" stop-color="#036799"/><stop offset=".3909" stop-color="#994396"/><stop offset=".4515" stop-color="#992468"/><stop offset=".5591" stop-color="#990941"/><stop offset=".6758" stop-color="#99002c"/><stop offset=".9364" stop-color="#990017"/></linearGradient><linearGradient id="d85" href="#cb"><stop offset=".0409" stop-color="#008c99"/><stop offset=".2409" stop-color="#036599"/><stop offset=".3939" stop-color="#994096"/><stop offset=".4561" stop-color="#992267"/><stop offset=".5652" stop-color="#990840"/><stop offset=".6848" stop-color="#99002c"/><stop offset=".9333" stop-color="#990017"/></linearGradient><linearGradient id="d86" href="#cb"><stop offset=".0409" stop-color="#008999"/><stop offset=".2424" stop-color="#046399"/><stop offset=".3970" stop-color="#993e95"/><stop offset=".4606" stop-color="#992067"/><stop offset=".5727" stop-color="#990640"/><stop offset=".7061" stop-color="#99002a"/><stop offset=".9318" stop-color="#990018"/></linearGradient><linearGradient id="d87" href="#cb"><stop offset=".0424" stop-color="#008799"/><stop offset=".2424" stop-color="#036199"/><stop offset=".3985" stop-color="#993c96"/><stop offset=".4621" stop-color="#991f68"/><stop offset=".5742" stop-color="#990641"/><stop offset=".7242" stop-color="#990029"/><stop offset=".9288" stop-color="#990019"/></linearGradient><linearGradient id="d88" href="#cb"><stop offset=".0439" stop-color="#008499"/><stop offset=".2424" stop-color="#035f99"/><stop offset=".4015" stop-color="#993a96"/><stop offset=".4667" stop-color="#991d67"/><stop offset=".5818" stop-color="#990440"/><stop offset=".8121" stop-color="#990021"/><stop offset=".9258" stop-color="#990019"/></linearGradient><linearGradient id="d89" href="#cb"><stop offset=".0439" stop-color="#008299"/><stop offset=".2439" stop-color="#045d99"/><stop offset=".4045" stop-color="#993795"/><stop offset=".4712" stop-color="#991b67"/><stop offset=".5879" stop-color="#990340"/><stop offset=".8227" stop-color="#990021"/><stop offset=".9242" stop-color="#99001a"/></linearGradient><linearGradient id="d90" href="#cb"><stop offset=".0455" stop-color="#008099"/><stop offset=".2439" stop-color="#035b99"/><stop offset=".4076" stop-color="#993595"/><stop offset=".4758" stop-color="#991966"/><stop offset=".5955" stop-color="#99023f"/><stop offset=".8364" stop-color="#990020"/><stop offset=".9212" stop-color="#99001b"/></linearGradient><linearGradient id="d91" href="#cb"><stop offset=".0470" stop-color="#007e99"/><stop offset=".2439" stop-color="#035999"/><stop offset=".4091" stop-color="#993496"/><stop offset=".4773" stop-color="#991867"/><stop offset=".5970" stop-color="#990140"/><stop offset=".8379" stop-color="#990021"/><stop offset=".9197" stop-color="#99001b"/></linearGradient><linearGradient id="d92" href="#cb"><stop offset=".0470" stop-color="#007c99"/><stop offset=".2455" stop-color="#045799"/><stop offset=".4121" stop-color="#993296"/><stop offset=".4803" stop-color="#991767"/><stop offset=".6015" stop-color="#990040"/><stop offset=".8439" stop-color="#990021"/><stop offset=".9167" stop-color="#99001c"/></linearGradient><linearGradient id="d93" href="#cb"><stop offset=".0485" stop-color="#007999"/><stop offset=".2455" stop-color="#045599"/><stop offset=".4152" stop-color="#992f95"/><stop offset=".4848" stop-color="#991567"/><stop offset=".6076" stop-color="#990040"/><stop offset=".8545" stop-color="#990021"/><stop offset=".9136" stop-color="#99001d"/></linearGradient><linearGradient id="d94" href="#cb"><stop offset=".0500" stop-color="#079"/><stop offset=".2455" stop-color="#035499"/><stop offset=".4167" stop-color="#992e96"/><stop offset=".4864" stop-color="#991468"/><stop offset=".6091" stop-color="#990040"/><stop offset=".8561" stop-color="#990021"/><stop offset=".9121" stop-color="#99001d"/></linearGradient><linearGradient id="d95" href="#cb"><stop offset=".0500" stop-color="#007599"/><stop offset=".2470" stop-color="#045299"/><stop offset=".4197" stop-color="#992c96"/><stop offset=".4909" stop-color="#991367"/><stop offset=".6167" stop-color="#990040"/><stop offset=".8697" stop-color="#990021"/><stop offset=".9091" stop-color="#99001e"/></linearGradient><linearGradient id="d96" href="#cb"><stop offset=".0515" stop-color="#007399"/><stop offset=".2470" stop-color="#045099"/><stop offset=".4227" stop-color="#992a95"/><stop offset=".4955" stop-color="#916"/><stop offset=".6227" stop-color="#990040"/><stop offset=".8803" stop-color="#990021"/><stop offset=".9076" stop-color="#99001f"/></linearGradient><linearGradient id="d97" href="#cb"><stop offset=".0530" stop-color="#007199"/><stop offset=".2470" stop-color="#034f99"/><stop offset=".4242" stop-color="#992996"/><stop offset=".4970" stop-color="#991167"/><stop offset=".6212" stop-color="#990041"/><stop offset=".8742" stop-color="#902"/><stop offset=".9045" stop-color="#99001f"/></linearGradient><linearGradient id="d98" href="#cb"><stop offset=".0530" stop-color="#006f99"/><stop offset=".2470" stop-color="#034d99"/><stop offset=".4273" stop-color="#992796"/><stop offset=".5015" stop-color="#990f67"/><stop offset=".6212" stop-color="#990042"/><stop offset=".8712" stop-color="#902"/><stop offset=".9015" stop-color="#990020"/></linearGradient><linearGradient id="d99" href="#cb"><stop offset=".0545" stop-color="#006d99"/><stop offset=".2485" stop-color="#044c99"/><stop offset=".4303" stop-color="#992595"/><stop offset=".5061" stop-color="#990e66"/><stop offset=".6212" stop-color="#990043"/><stop offset=".8682" stop-color="#990023"/><stop offset=".9000" stop-color="#990021"/></linearGradient><linearGradient id="d100" href="#cb"><stop offset=".0561" stop-color="#006c99"/><stop offset=".2485" stop-color="#034a99"/><stop offset=".4318" stop-color="#992496"/><stop offset=".5076" stop-color="#990d67"/><stop offset=".6182" stop-color="#990045"/><stop offset=".8591" stop-color="#990025"/><stop offset=".8970" stop-color="#902"/></linearGradient><linearGradient id="d101" href="#cb"><stop offset=".0561" stop-color="#006a99"/><stop offset=".2485" stop-color="#034999"/><stop offset=".4348" stop-color="#992296"/><stop offset=".5121" stop-color="#990c67"/><stop offset=".6197" stop-color="#990045"/><stop offset=".8606" stop-color="#990025"/><stop offset=".8955" stop-color="#902"/></linearGradient><linearGradient id="d102" href="#cb"><stop offset=".0576" stop-color="#006899"/><stop offset=".2500" stop-color="#044799"/><stop offset=".4379" stop-color="#992195"/><stop offset=".5152" stop-color="#990b67"/><stop offset=".6182" stop-color="#990047"/><stop offset=".8545" stop-color="#990026"/><stop offset=".8924" stop-color="#990023"/></linearGradient><linearGradient id="d103" href="#cb"><stop offset=".0591" stop-color="#069"/><stop offset=".2500" stop-color="#044699"/><stop offset=".4409" stop-color="#991f95"/><stop offset=".5197" stop-color="#990966"/><stop offset=".6212" stop-color="#990047"/><stop offset=".8591" stop-color="#990026"/><stop offset=".8894" stop-color="#990024"/></linearGradient><linearGradient id="d104" href="#cb"><stop offset=".0606" stop-color="#006599"/><stop offset=".2500" stop-color="#034599"/><stop offset=".4424" stop-color="#991e96"/><stop offset=".5212" stop-color="#990967"/><stop offset=".6212" stop-color="#990048"/><stop offset=".8561" stop-color="#990027"/><stop offset=".8879" stop-color="#990025"/></linearGradient><linearGradient id="d105" href="#cb"><stop offset=".0606" stop-color="#006399"/><stop offset=".2515" stop-color="#044399"/><stop offset=".4455" stop-color="#991c95"/><stop offset=".5258" stop-color="#990767"/><stop offset=".6273" stop-color="#990048"/><stop offset=".8667" stop-color="#990027"/><stop offset=".8848" stop-color="#990025"/></linearGradient><linearGradient id="d106" href="#cb"><stop offset=".0621" stop-color="#006199"/><stop offset=".2515" stop-color="#044299"/><stop offset=".4485" stop-color="#991b95"/><stop offset=".5303" stop-color="#990666"/><stop offset=".6439" stop-color="#990045"/><stop offset=".8818" stop-color="#990026"/></linearGradient><linearGradient id="d107" href="#cb"><stop offset=".0636" stop-color="#006099"/><stop offset=".2515" stop-color="#034199"/><stop offset=".4500" stop-color="#991a96"/><stop offset=".5318" stop-color="#990667"/><stop offset=".6591" stop-color="#990043"/><stop offset=".8803" stop-color="#990027"/></linearGradient><linearGradient id="d108" href="#cb"><stop offset=".0652" stop-color="#005e99"/><stop offset=".2530" stop-color="#043f99"/><stop offset=".4530" stop-color="#991895"/><stop offset=".5364" stop-color="#990467"/><stop offset=".6833" stop-color="#990040"/><stop offset=".8773" stop-color="#990028"/></linearGradient><linearGradient id="d109" href="#cb"><stop offset=".0652" stop-color="#005d99"/><stop offset=".2530" stop-color="#043e99"/><stop offset=".4561" stop-color="#991795"/><stop offset=".5394" stop-color="#990467"/><stop offset=".6864" stop-color="#990040"/><stop offset=".8758" stop-color="#990029"/></linearGradient><linearGradient id="d110" href="#cb"><stop offset=".0667" stop-color="#005b99"/><stop offset=".2530" stop-color="#033d99"/><stop offset=".4576" stop-color="#991696"/><stop offset=".5424" stop-color="#990367"/><stop offset=".6909" stop-color="#990040"/><stop offset=".8727" stop-color="#990029"/></linearGradient><linearGradient id="d111" href="#cb"><stop offset=".0682" stop-color="#005a99"/><stop offset=".2545" stop-color="#043b99"/><stop offset=".4606" stop-color="#991496"/><stop offset=".5455" stop-color="#990267"/><stop offset=".6955" stop-color="#990040"/><stop offset=".8697" stop-color="#99002a"/></linearGradient><linearGradient id="d112" href="#cb"><stop offset=".0697" stop-color="#005899"/><stop offset=".2545" stop-color="#043a99"/><stop offset=".4636" stop-color="#991395"/><stop offset=".5500" stop-color="#990167"/><stop offset=".7030" stop-color="#990040"/><stop offset=".8682" stop-color="#99002b"/></linearGradient><linearGradient id="d113" href="#cb"><stop offset=".0697" stop-color="#005799"/><stop offset=".2545" stop-color="#043999"/><stop offset=".4652" stop-color="#991296"/><stop offset=".5515" stop-color="#990067"/><stop offset=".7030" stop-color="#990040"/><stop offset=".8652" stop-color="#99002c"/></linearGradient><linearGradient id="d114" href="#cb"><stop offset=".0712" stop-color="#059"/><stop offset=".2545" stop-color="#033899"/><stop offset=".4682" stop-color="#991196"/><stop offset=".5561" stop-color="#990067"/><stop offset=".7106" stop-color="#990040"/><stop offset=".8636" stop-color="#99002d"/></linearGradient><linearGradient id="d115" href="#cb"><stop offset=".0727" stop-color="#005499"/><stop offset=".2561" stop-color="#043799"/><stop offset=".4712" stop-color="#990f95"/><stop offset=".5606" stop-color="#906"/><stop offset=".7182" stop-color="#99003f"/><stop offset=".8606" stop-color="#99002e"/></linearGradient><linearGradient id="d116" href="#cb"><stop offset=".0742" stop-color="#005299"/><stop offset=".2561" stop-color="#043699"/><stop offset=".4742" stop-color="#990e95"/><stop offset=".5652" stop-color="#906"/><stop offset=".7242" stop-color="#99003f"/><stop offset=".8576" stop-color="#99002e"/></linearGradient><linearGradient id="d117" href="#cb"><stop offset=".0742" stop-color="#005199"/><stop offset=".2561" stop-color="#033599"/><stop offset=".4758" stop-color="#990d96"/><stop offset=".5667" stop-color="#990067"/><stop offset=".7258" stop-color="#990040"/><stop offset=".8561" stop-color="#99002f"/></linearGradient><linearGradient id="d118" href="#cb"><stop offset=".0758" stop-color="#005099"/><stop offset=".2576" stop-color="#043499"/><stop offset=".4788" stop-color="#990c95"/><stop offset=".5712" stop-color="#906"/><stop offset=".7333" stop-color="#99003f"/><stop offset=".8530" stop-color="#990030"/></linearGradient><linearGradient id="d119" href="#cb"><stop offset=".0773" stop-color="#004f99"/><stop offset=".2576" stop-color="#043399"/><stop offset=".4818" stop-color="#990b95"/><stop offset=".5712" stop-color="#990068"/><stop offset=".7318" stop-color="#990040"/><stop offset=".8515" stop-color="#990031"/></linearGradient><linearGradient id="d120" href="#cb"><stop offset=".0788" stop-color="#004d99"/><stop offset=".2576" stop-color="#033299"/><stop offset=".4833" stop-color="#990a96"/><stop offset=".5712" stop-color="#990069"/><stop offset=".7303" stop-color="#990042"/><stop offset=".8485" stop-color="#990032"/></linearGradient><linearGradient id="d121" href="#cb"><stop offset=".0803" stop-color="#004c99"/><stop offset=".2591" stop-color="#043199"/><stop offset=".4864" stop-color="#990995"/><stop offset=".5712" stop-color="#99006a"/><stop offset=".7288" stop-color="#990043"/><stop offset=".8455" stop-color="#903"/></linearGradient><linearGradient id="d122" href="#cb"><stop offset=".0803" stop-color="#004b99"/><stop offset=".2591" stop-color="#043099"/><stop offset=".4894" stop-color="#990895"/><stop offset=".5758" stop-color="#99006a"/><stop offset=".7364" stop-color="#990042"/><stop offset=".8439" stop-color="#990034"/></linearGradient><linearGradient id="d123" href="#cb"><stop offset=".0818" stop-color="#004a99"/><stop offset=".2591" stop-color="#042f99"/><stop offset=".4909" stop-color="#990796"/><stop offset=".5773" stop-color="#99006a"/><stop offset=".7379" stop-color="#990043"/><stop offset=".8409" stop-color="#990035"/></linearGradient><linearGradient id="d124" href="#cb"><stop offset=".0833" stop-color="#004899"/><stop offset=".2606" stop-color="#042e99"/><stop offset=".4939" stop-color="#990695"/><stop offset=".5909" stop-color="#990067"/><stop offset=".7621" stop-color="#990040"/><stop offset=".8394" stop-color="#990035"/></linearGradient><linearGradient id="d125" href="#cb"><stop offset=".0848" stop-color="#004799"/><stop offset=".2606" stop-color="#042d99"/><stop offset=".4970" stop-color="#990595"/><stop offset=".5955" stop-color="#906"/><stop offset=".7682" stop-color="#99003f"/><stop offset=".8364" stop-color="#990036"/></linearGradient><linearGradient id="d126" href="#cb"><stop offset=".0864" stop-color="#004699"/><stop offset=".2606" stop-color="#042c99"/><stop offset=".4985" stop-color="#990496"/><stop offset=".5970" stop-color="#990067"/><stop offset=".7697" stop-color="#990040"/><stop offset=".8333" stop-color="#990037"/></linearGradient><linearGradient id="d127" href="#cb"><stop offset=".0879" stop-color="#004599"/><stop offset=".2606" stop-color="#032c99"/><stop offset=".5015" stop-color="#990396"/><stop offset=".6015" stop-color="#990067"/><stop offset=".7773" stop-color="#990040"/><stop offset=".8318" stop-color="#990038"/></linearGradient><linearGradient id="d128" href="#cb"><stop offset=".0879" stop-color="#049"/><stop offset=".2621" stop-color="#042b99"/><stop offset=".5045" stop-color="#990295"/><stop offset=".6045" stop-color="#990067"/><stop offset=".7818" stop-color="#990040"/><stop offset=".8288" stop-color="#990039"/></linearGradient><linearGradient id="d129" href="#cb"><stop offset=".0894" stop-color="#004399"/><stop offset=".2621" stop-color="#042a99"/><stop offset=".5076" stop-color="#990195"/><stop offset=".6091" stop-color="#906"/><stop offset=".7879" stop-color="#99003f"/><stop offset=".8273" stop-color="#99003a"/></linearGradient><linearGradient id="d130" href="#cb"><stop offset=".0909" stop-color="#004199"/><stop offset=".2621" stop-color="#032999"/><stop offset=".5091" stop-color="#990096"/><stop offset=".6106" stop-color="#990067"/><stop offset=".7894" stop-color="#990040"/><stop offset=".8242" stop-color="#99003b"/></linearGradient><linearGradient id="d131" href="#cb"><stop offset=".0924" stop-color="#004099"/><stop offset=".2636" stop-color="#042899"/><stop offset=".5121" stop-color="#990095"/><stop offset=".6152" stop-color="#990067"/><stop offset=".7970" stop-color="#990040"/><stop offset=".8212" stop-color="#99003c"/></linearGradient><linearGradient id="d132" href="#cb"><stop offset=".0939" stop-color="#003f99"/><stop offset=".2636" stop-color="#042799"/><stop offset=".5152" stop-color="#990095"/><stop offset=".6197" stop-color="#906"/><stop offset=".8030" stop-color="#99003f"/><stop offset=".8197" stop-color="#99003d"/></linearGradient><linearGradient id="d133" href="#cb"><stop offset=".0955" stop-color="#003e99"/><stop offset=".2636" stop-color="#032799"/><stop offset=".5167" stop-color="#990096"/><stop offset=".6212" stop-color="#990067"/><stop offset=".8045" stop-color="#990040"/><stop offset=".8167" stop-color="#99003e"/></linearGradient><linearGradient id="d134" href="#cb"><stop offset=".0970" stop-color="#003d99"/><stop offset=".2652" stop-color="#042699"/><stop offset=".5197" stop-color="#990095"/><stop offset=".6258" stop-color="#906"/><stop offset=".8121" stop-color="#990040"/><stop offset=".8152" stop-color="#99003f"/></linearGradient><linearGradient id="d135" href="#cb"><stop offset=".0970" stop-color="#003c99"/><stop offset=".2652" stop-color="#042599"/><stop offset=".5227" stop-color="#990095"/><stop offset=".6303" stop-color="#906"/><stop offset=".8121" stop-color="#990040"/></linearGradient><linearGradient id="d136" href="#cb"><stop offset=".0985" stop-color="#003b99"/><stop offset=".2652" stop-color="#042499"/><stop offset=".5242" stop-color="#990096"/><stop offset=".6318" stop-color="#990067"/><stop offset=".8091" stop-color="#990041"/></linearGradient><linearGradient id="d137" href="#cb"><stop offset=".1000" stop-color="#003a99"/><stop offset=".2667" stop-color="#042399"/><stop offset=".5227" stop-color="#990098"/><stop offset=".6273" stop-color="#990069"/><stop offset=".8076" stop-color="#990042"/></linearGradient><linearGradient id="d138" href="#cb"><stop offset=".1015" stop-color="#003999"/><stop offset=".2667" stop-color="#042399"/><stop offset=".5212" stop-color="#970099"/><stop offset=".6394" stop-color="#906"/><stop offset=".8045" stop-color="#990043"/></linearGradient><linearGradient id="d139" href="#cb"><stop offset=".1030" stop-color="#003899"/><stop offset=".2667" stop-color="#042299"/><stop offset=".5182" stop-color="#940099"/><stop offset=".5576" stop-color="#908"/><stop offset=".6848" stop-color="#99005b"/><stop offset=".8030" stop-color="#904"/></linearGradient><linearGradient id="d140" href="#cb"><stop offset=".1045" stop-color="#003799"/><stop offset=".2682" stop-color="#042199"/><stop offset=".5167" stop-color="#910099"/><stop offset=".5424" stop-color="#990091"/><stop offset=".6591" stop-color="#990063"/><stop offset=".8000" stop-color="#990045"/></linearGradient><linearGradient id="d141" href="#cb"><stop offset=".1061" stop-color="#003699"/><stop offset=".2682" stop-color="#042199"/><stop offset=".5152" stop-color="#8f0099"/><stop offset=".5424" stop-color="#990093"/><stop offset=".6576" stop-color="#990064"/><stop offset=".7970" stop-color="#990047"/></linearGradient><linearGradient id="d142" href="#cb"><stop offset=".1076" stop-color="#003599"/><stop offset=".2682" stop-color="#042099"/><stop offset=".5121" stop-color="#8c0099"/><stop offset=".5424" stop-color="#990094"/><stop offset=".6561" stop-color="#906"/><stop offset=".7955" stop-color="#990048"/></linearGradient><linearGradient id="d143" href="#cb"><stop offset=".1091" stop-color="#003499"/><stop offset=".2682" stop-color="#031f99"/><stop offset=".5106" stop-color="#890099"/><stop offset=".5455" stop-color="#990094"/><stop offset=".6606" stop-color="#990065"/><stop offset=".7924" stop-color="#990049"/></linearGradient><linearGradient id="d144" href="#cb"><stop offset=".1106" stop-color="#039"/><stop offset=".2697" stop-color="#041e99"/><stop offset=".5076" stop-color="#860099"/><stop offset=".5470" stop-color="#990094"/><stop offset=".6621" stop-color="#906"/><stop offset=".7909" stop-color="#99004a"/></linearGradient><linearGradient id="d145" href="#cb"><stop offset=".1106" stop-color="#039"/><stop offset=".2697" stop-color="#041e99"/><stop offset=".5061" stop-color="#840099"/><stop offset=".5500" stop-color="#990094"/><stop offset=".6667" stop-color="#906"/><stop offset=".7879" stop-color="#99004b"/></linearGradient><linearGradient id="d146" href="#cb"><stop offset=".1121" stop-color="#003299"/><stop offset=".2697" stop-color="#041d99"/><stop offset=".5045" stop-color="#820099"/><stop offset=".5515" stop-color="#990095"/><stop offset=".6682" stop-color="#906"/><stop offset=".7848" stop-color="#99004c"/></linearGradient><linearGradient id="d147" href="#cb"><stop offset=".1136" stop-color="#003199"/><stop offset=".2712" stop-color="#041d99"/><stop offset=".5015" stop-color="#7f0099"/><stop offset=".5545" stop-color="#990094"/><stop offset=".6727" stop-color="#906"/><stop offset=".7833" stop-color="#99004d"/></linearGradient><linearGradient id="d148" href="#cb"><stop offset=".1152" stop-color="#003099"/><stop offset=".2712" stop-color="#041c99"/><stop offset=".5000" stop-color="#7d0099"/><stop offset=".5561" stop-color="#990095"/><stop offset=".6742" stop-color="#906"/><stop offset=".7803" stop-color="#99004f"/></linearGradient><linearGradient id="d149" href="#cb"><stop offset=".1167" stop-color="#002f99"/><stop offset=".2712" stop-color="#041b99"/><stop offset=".4970" stop-color="#7a0099"/><stop offset=".5591" stop-color="#990095"/><stop offset=".6788" stop-color="#906"/><stop offset=".7788" stop-color="#990050"/></linearGradient><linearGradient id="d150" href="#cb"><stop offset=".1182" stop-color="#002e99"/><stop offset=".2727" stop-color="#041b99"/><stop offset=".4955" stop-color="#780099"/><stop offset=".5621" stop-color="#990095"/><stop offset=".6833" stop-color="#906"/><stop offset=".7758" stop-color="#990051"/></linearGradient><linearGradient id="d151" href="#cb"><stop offset=".1197" stop-color="#002e99"/><stop offset=".2727" stop-color="#041a99"/><stop offset=".4939" stop-color="#760099"/><stop offset=".5636" stop-color="#990095"/><stop offset=".6848" stop-color="#906"/><stop offset=".7727" stop-color="#990052"/></linearGradient><linearGradient id="d152" href="#cb"><stop offset=".1212" stop-color="#002d99"/><stop offset=".2727" stop-color="#041a99"/><stop offset=".4909" stop-color="#730099"/><stop offset=".5667" stop-color="#990095"/><stop offset=".6894" stop-color="#906"/><stop offset=".7712" stop-color="#990053"/></linearGradient><linearGradient id="d153" href="#cb"><stop offset=".1227" stop-color="#002c99"/><stop offset=".2742" stop-color="#041999"/><stop offset=".4894" stop-color="#710099"/><stop offset=".5697" stop-color="#990095"/><stop offset=".6924" stop-color="#906"/><stop offset=".7682" stop-color="#905"/></linearGradient><linearGradient id="d154" href="#cb"><stop offset=".1242" stop-color="#002b99"/><stop offset=".2742" stop-color="#041899"/><stop offset=".4879" stop-color="#6f0099"/><stop offset=".5712" stop-color="#990095"/><stop offset=".6955" stop-color="#906"/><stop offset=".7667" stop-color="#990056"/></linearGradient><linearGradient id="d155" href="#cb"><stop offset=".1258" stop-color="#002a99"/><stop offset=".2742" stop-color="#041899"/><stop offset=".4848" stop-color="#6d0099"/><stop offset=".5742" stop-color="#990095"/><stop offset=".6985" stop-color="#906"/><stop offset=".7636" stop-color="#990057"/></linearGradient><linearGradient id="d156" href="#cb"><stop offset=".1273" stop-color="#002a99"/><stop offset=".2758" stop-color="#041799"/><stop offset=".4833" stop-color="#6b0099"/><stop offset=".5773" stop-color="#990095"/><stop offset=".7030" stop-color="#906"/><stop offset=".7606" stop-color="#990059"/></linearGradient><linearGradient id="d157" href="#cb"><stop offset=".1288" stop-color="#002999"/><stop offset=".2758" stop-color="#041799"/><stop offset=".4818" stop-color="#690099"/><stop offset=".5788" stop-color="#990095"/><stop offset=".7045" stop-color="#906"/><stop offset=".7591" stop-color="#99005a"/></linearGradient><linearGradient id="d158" href="#cb"><stop offset=".1303" stop-color="#002899"/><stop offset=".2758" stop-color="#041699"/><stop offset=".4788" stop-color="#670099"/><stop offset=".5818" stop-color="#990095"/><stop offset=".7091" stop-color="#906"/><stop offset=".7561" stop-color="#99005b"/></linearGradient><linearGradient id="d159" href="#cb"><stop offset=".1318" stop-color="#002799"/><stop offset=".2773" stop-color="#041699"/><stop offset=".4773" stop-color="#650099"/><stop offset=".5848" stop-color="#990095"/><stop offset=".7136" stop-color="#906"/><stop offset=".7545" stop-color="#99005c"/></linearGradient><linearGradient id="d160" href="#cb"><stop offset=".1333" stop-color="#002699"/><stop offset=".2773" stop-color="#041599"/><stop offset=".4758" stop-color="#630099"/><stop offset=".5864" stop-color="#990095"/><stop offset=".7152" stop-color="#906"/><stop offset=".7515" stop-color="#99005e"/></linearGradient><linearGradient id="d161" href="#cb"><stop offset=".1348" stop-color="#002699"/><stop offset=".2773" stop-color="#041599"/><stop offset=".4742" stop-color="#620099"/><stop offset=".5894" stop-color="#990095"/><stop offset=".7197" stop-color="#906"/><stop offset=".7485" stop-color="#99005f"/></linearGradient><linearGradient id="d162" href="#cb"><stop offset=".1364" stop-color="#002599"/><stop offset=".2773" stop-color="#041499"/><stop offset=".4712" stop-color="#5f0099"/><stop offset=".5924" stop-color="#990095"/><stop offset=".7227" stop-color="#906"/><stop offset=".7470" stop-color="#990060"/></linearGradient><linearGradient id="d163" href="#cb"><stop offset=".1379" stop-color="#002499"/><stop offset=".2788" stop-color="#041499"/><stop offset=".4697" stop-color="#5e0099"/><stop offset=".5939" stop-color="#990095"/><stop offset=".7258" stop-color="#906"/><stop offset=".7439" stop-color="#990062"/></linearGradient><linearGradient id="d164" href="#cb"><stop offset=".1394" stop-color="#002499"/><stop offset=".2788" stop-color="#041399"/><stop offset=".4682" stop-color="#5c0099"/><stop offset=".5970" stop-color="#990095"/><stop offset=".7288" stop-color="#906"/><stop offset=".7424" stop-color="#990063"/></linearGradient><linearGradient id="d165" href="#cb"><stop offset=".1409" stop-color="#002399"/><stop offset=".2788" stop-color="#041399"/><stop offset=".4652" stop-color="#5a0099"/><stop offset=".6000" stop-color="#990095"/><stop offset=".7333" stop-color="#906"/><stop offset=".7394" stop-color="#990065"/></linearGradient><linearGradient id="d166" href="#cb"><stop offset=".1424" stop-color="#029"/><stop offset=".2803" stop-color="#041299"/><stop offset=".4636" stop-color="#580099"/><stop offset=".6015" stop-color="#990095"/><stop offset=".7348" stop-color="#990067"/><stop offset=".7364" stop-color="#906"/></linearGradient><linearGradient id="d167" href="#cb"><stop offset=".1439" stop-color="#029"/><stop offset=".2803" stop-color="#041299"/><stop offset=".4621" stop-color="#570099"/><stop offset=".6045" stop-color="#990095"/><stop offset=".7348" stop-color="#990067"/></linearGradient><linearGradient id="d168" href="#cb"><stop offset=".1455" stop-color="#002199"/><stop offset=".2803" stop-color="#041199"/><stop offset=".4606" stop-color="#509"/><stop offset=".6076" stop-color="#990095"/><stop offset=".7318" stop-color="#990069"/></linearGradient><linearGradient id="d169" href="#cb"><stop offset=".1470" stop-color="#002099"/><stop offset=".2818" stop-color="#041199"/><stop offset=".4591" stop-color="#540099"/><stop offset=".6091" stop-color="#990095"/><stop offset=".7303" stop-color="#99006a"/></linearGradient><linearGradient id="d170" href="#cb"><stop offset=".1485" stop-color="#001f99"/><stop offset=".2818" stop-color="#041099"/><stop offset=".4561" stop-color="#520099"/><stop offset=".6121" stop-color="#990095"/><stop offset=".7273" stop-color="#99006c"/></linearGradient><linearGradient id="d171" href="#cb"><stop offset=".1500" stop-color="#001f99"/><stop offset=".2818" stop-color="#041099"/><stop offset=".4545" stop-color="#500099"/><stop offset=".6152" stop-color="#990095"/><stop offset=".7242" stop-color="#99006e"/></linearGradient><linearGradient id="d172" href="#cb"><stop offset=".1515" stop-color="#001e99"/><stop offset=".2833" stop-color="#040f99"/><stop offset=".4530" stop-color="#4f0099"/><stop offset=".6167" stop-color="#990095"/><stop offset=".7227" stop-color="#99006f"/></linearGradient><linearGradient id="d173" href="#cb"><stop offset=".1530" stop-color="#001e99"/><stop offset=".2833" stop-color="#040f99"/><stop offset=".4515" stop-color="#4d0099"/><stop offset=".6197" stop-color="#990095"/><stop offset=".7197" stop-color="#990071"/></linearGradient><linearGradient id="d174" href="#cb"><stop offset=".1545" stop-color="#001d99"/><stop offset=".2833" stop-color="#040e99"/><stop offset=".4500" stop-color="#4c0099"/><stop offset=".6227" stop-color="#990095"/><stop offset=".7182" stop-color="#990072"/></linearGradient><linearGradient id="d175" href="#cb"><stop offset=".1561" stop-color="#001c99"/><stop offset=".2848" stop-color="#040e99"/><stop offset=".4485" stop-color="#4b0099"/><stop offset=".6242" stop-color="#990095"/><stop offset=".7152" stop-color="#990074"/></linearGradient><linearGradient id="d176" href="#cb"><stop offset=".1576" stop-color="#001c99"/><stop offset=".2848" stop-color="#040d99"/><stop offset=".4470" stop-color="#490099"/><stop offset=".6273" stop-color="#990095"/><stop offset=".7121" stop-color="#990076"/></linearGradient><linearGradient id="d177" href="#cb"><stop offset=".1591" stop-color="#001b99"/><stop offset=".2848" stop-color="#040d99"/><stop offset=".4455" stop-color="#480099"/><stop offset=".6303" stop-color="#990095"/><stop offset=".7106" stop-color="#907"/></linearGradient><linearGradient id="d178" href="#cb"><stop offset=".1606" stop-color="#001a99"/><stop offset=".2864" stop-color="#040d99"/><stop offset=".4439" stop-color="#470099"/><stop offset=".6333" stop-color="#990095"/><stop offset=".7076" stop-color="#990079"/></linearGradient><linearGradient id="d179" href="#cb"><stop offset=".1621" stop-color="#001a99"/><stop offset=".2864" stop-color="#040c99"/><stop offset=".4424" stop-color="#450099"/><stop offset=".6348" stop-color="#990095"/><stop offset=".7061" stop-color="#99007a"/></linearGradient><linearGradient id="d180" href="#cb"><stop offset=".1636" stop-color="#001999"/><stop offset=".2864" stop-color="#040c99"/><stop offset=".4409" stop-color="#409"/><stop offset=".6379" stop-color="#990095"/><stop offset=".7030" stop-color="#99007c"/></linearGradient><linearGradient id="d181" href="#cb"><stop offset=".1652" stop-color="#001999"/><stop offset=".2879" stop-color="#040b99"/><stop offset=".4409" stop-color="#409"/><stop offset=".6409" stop-color="#990095"/><stop offset=".7000" stop-color="#99007e"/></linearGradient><linearGradient id="d182" href="#cb"><stop offset=".1667" stop-color="#001899"/><stop offset=".2879" stop-color="#040b99"/><stop offset=".4394" stop-color="#420099"/><stop offset=".6424" stop-color="#990095"/><stop offset=".6985" stop-color="#990080"/></linearGradient><linearGradient id="d183" href="#cb"><stop offset=".1682" stop-color="#001899"/><stop offset=".2879" stop-color="#040b99"/><stop offset=".4379" stop-color="#410099"/><stop offset=".6455" stop-color="#990095"/><stop offset=".6955" stop-color="#990082"/></linearGradient><linearGradient id="d184" href="#cb"><stop offset=".1697" stop-color="#001799"/><stop offset=".2879" stop-color="#040a99"/><stop offset=".4379" stop-color="#410099"/><stop offset=".6485" stop-color="#990095"/><stop offset=".6924" stop-color="#990084"/></linearGradient><linearGradient id="d185" href="#cb"><stop offset=".1712" stop-color="#001699"/><stop offset=".2894" stop-color="#040a99"/><stop offset=".4364" stop-color="#3f0099"/><stop offset=".6500" stop-color="#990095"/><stop offset=".6909" stop-color="#990085"/></linearGradient><linearGradient id="d186" href="#cb"><stop offset=".1727" stop-color="#001699"/><stop offset=".2894" stop-color="#040999"/><stop offset=".4364" stop-color="#3f0099"/><stop offset=".6530" stop-color="#990095"/><stop offset=".6879" stop-color="#990087"/></linearGradient><linearGradient id="d187" href="#cb"><stop offset=".1742" stop-color="#001599"/><stop offset=".2894" stop-color="#040999"/><stop offset=".4364" stop-color="#3e0099"/><stop offset=".6561" stop-color="#990095"/><stop offset=".6864" stop-color="#990089"/></linearGradient><linearGradient id="d188" href="#cb"><stop offset=".1758" stop-color="#001599"/><stop offset=".2909" stop-color="#040999"/><stop offset=".4364" stop-color="#3e0099"/><stop offset=".6576" stop-color="#990095"/><stop offset=".6833" stop-color="#99008b"/></linearGradient><linearGradient id="d189" href="#cb"><stop offset=".1773" stop-color="#001499"/><stop offset=".2909" stop-color="#040899"/><stop offset=".4379" stop-color="#3e0099"/><stop offset=".6606" stop-color="#990095"/><stop offset=".6803" stop-color="#99008d"/></linearGradient><linearGradient id="d190" href="#cb"><stop offset=".1788" stop-color="#001499"/><stop offset=".2909" stop-color="#040899"/><stop offset=".4379" stop-color="#3d0099"/><stop offset=".6636" stop-color="#990095"/><stop offset=".6788" stop-color="#99008f"/></linearGradient><linearGradient id="d191" href="#cb"><stop offset=".1803" stop-color="#001399"/><stop offset=".2924" stop-color="#040899"/><stop offset=".4409" stop-color="#3e0099"/><stop offset=".6667" stop-color="#990095"/><stop offset=".6758" stop-color="#990091"/></linearGradient><linearGradient id="d192" href="#cb"><stop offset=".1818" stop-color="#001399"/><stop offset=".2924" stop-color="#040799"/><stop offset=".4439" stop-color="#3f0099"/><stop offset=".6682" stop-color="#990095"/><stop offset=".6742" stop-color="#990093"/></linearGradient><linearGradient id="d193" href="#cb"><stop offset=".1833" stop-color="#001299"/><stop offset=".2924" stop-color="#040799"/><stop offset=".4455" stop-color="#3f0099"/><stop offset=".6712" stop-color="#990095"/></linearGradient><linearGradient id="d194" href="#cb"><stop offset=".1848" stop-color="#001299"/><stop offset=".2939" stop-color="#040699"/><stop offset=".4545" stop-color="#420099"/><stop offset=".6682" stop-color="#990097"/></linearGradient><linearGradient id="d195" href="#cb"><stop offset=".1864" stop-color="#019"/><stop offset=".2939" stop-color="#040699"/><stop offset=".4591" stop-color="#430099"/><stop offset=".6667" stop-color="#909"/></linearGradient><linearGradient id="d196" href="#cb"><stop offset=".1894" stop-color="#019"/><stop offset=".2939" stop-color="#040699"/><stop offset=".4682" stop-color="#460099"/><stop offset=".6636" stop-color="#960099"/></linearGradient><linearGradient id="d197" href="#cb"><stop offset=".1909" stop-color="#001099"/><stop offset=".2955" stop-color="#040599"/><stop offset=".4924" stop-color="#4f0099"/><stop offset=".6621" stop-color="#950099"/></linearGradient><linearGradient id="d198" href="#cb"><stop offset=".1924" stop-color="#001099"/><stop offset=".2955" stop-color="#040599"/><stop offset=".5152" stop-color="#580099"/><stop offset=".6591" stop-color="#920099"/></linearGradient><linearGradient id="d199" href="#cb"><stop offset=".1939" stop-color="#000f99"/><stop offset=".2955" stop-color="#040599"/><stop offset=".5606" stop-color="#690099"/><stop offset=".6561" stop-color="#900099"/></linearGradient><linearGradient id="d200" href="#cb"><stop offset=".1955" stop-color="#000f99"/><stop offset=".2970" stop-color="#040499"/><stop offset=".6545" stop-color="#8f0099"/></linearGradient><linearGradient id="d201" href="#cb"><stop offset=".1970" stop-color="#000e99"/><stop offset=".2970" stop-color="#040499"/><stop offset=".6515" stop-color="#8c0099"/></linearGradient><linearGradient id="d202" href="#cb"><stop offset=".1985" stop-color="#000e99"/><stop offset=".2970" stop-color="#040499"/><stop offset=".6500" stop-color="#8b0099"/></linearGradient><linearGradient id="d203" href="#cb"><stop offset=".2000" stop-color="#000d99"/><stop offset=".2985" stop-color="#050399"/><stop offset=".6470" stop-color="#890099"/></linearGradient><linearGradient id="d204" href="#cb"><stop offset=".2015" stop-color="#000d99"/><stop offset=".2985" stop-color="#040399"/><stop offset=".6439" stop-color="#860099"/></linearGradient><linearGradient id="d205" href="#cb"><stop offset=".2045" stop-color="#000c99"/><stop offset=".2985" stop-color="#040399"/><stop offset=".6424" stop-color="#850099"/></linearGradient><linearGradient id="d206" href="#cb"><stop offset=".2061" stop-color="#000c99"/><stop offset=".3000" stop-color="#050399"/><stop offset=".6394" stop-color="#830099"/></linearGradient><linearGradient id="d207" href="#cb"><stop offset=".2076" stop-color="#000b99"/><stop offset=".3000" stop-color="#040299"/><stop offset=".6379" stop-color="#810099"/></linearGradient><linearGradient id="d208" href="#cb"><stop offset=".2091" stop-color="#000b99"/><stop offset=".3015" stop-color="#050299"/><stop offset=".6348" stop-color="#7f0099"/></linearGradient><linearGradient id="d209" href="#cb"><stop offset=".2106" stop-color="#000a99"/><stop offset=".3015" stop-color="#050299"/><stop offset=".6318" stop-color="#7d0099"/></linearGradient><linearGradient id="d210" href="#cb"><stop offset=".2121" stop-color="#000a99"/><stop offset=".3015" stop-color="#040199"/><stop offset=".6303" stop-color="#7c0099"/></linearGradient><linearGradient id="d211" href="#cb"><stop offset=".2152" stop-color="#000999"/><stop offset=".3030" stop-color="#050199"/><stop offset=".6273" stop-color="#7a0099"/></linearGradient><linearGradient id="d212" href="#cb"><stop offset=".2167" stop-color="#000999"/><stop offset=".3030" stop-color="#050199"/><stop offset=".6258" stop-color="#780099"/></linearGradient><linearGradient id="d213" href="#cb"><stop offset=".2182" stop-color="#000999"/><stop offset=".3030" stop-color="#040199"/><stop offset=".6227" stop-color="#760099"/></linearGradient><linearGradient id="d214" href="#cb"><stop offset=".2197" stop-color="#000899"/><stop offset=".3045" stop-color="#050099"/><stop offset=".6197" stop-color="#740099"/></linearGradient><linearGradient id="d215" href="#cb"><stop offset=".2212" stop-color="#000899"/><stop offset=".3045" stop-color="#050099"/><stop offset=".6182" stop-color="#730099"/></linearGradient><linearGradient id="d216" href="#cb"><stop offset=".2242" stop-color="#000799"/><stop offset=".3045" stop-color="#040099"/><stop offset=".6152" stop-color="#710099"/></linearGradient><linearGradient id="d217" href="#cb"><stop offset=".2258" stop-color="#000799"/><stop offset=".3061" stop-color="#050099"/><stop offset=".6136" stop-color="#700099"/></linearGradient><linearGradient id="d218" href="#cb"><stop offset=".2273" stop-color="#000699"/><stop offset=".3061" stop-color="#050099"/><stop offset=".6106" stop-color="#6e0099"/></linearGradient><linearGradient id="d219" href="#cb"><stop offset=".2288" stop-color="#000699"/><stop offset=".3076" stop-color="#050099"/><stop offset=".6076" stop-color="#6c0099"/></linearGradient><linearGradient id="d220" href="#cb"><stop offset=".2318" stop-color="#000599"/><stop offset=".3076" stop-color="#050099"/><stop offset=".6061" stop-color="#6b0099"/></linearGradient><linearGradient id="d221" href="#cb"><stop offset=".2333" stop-color="#000599"/><stop offset=".3076" stop-color="#050099"/><stop offset=".6030" stop-color="#690099"/></linearGradient><linearGradient id="d222" href="#cb"><stop offset=".2348" stop-color="#000599"/><stop offset=".3091" stop-color="#050099"/><stop offset=".6015" stop-color="#680099"/></linearGradient><linearGradient id="d223" href="#cb"><stop offset=".2364" stop-color="#000499"/><stop offset=".3091" stop-color="#050099"/><stop offset=".5985" stop-color="#609"/></linearGradient><linearGradient id="d224" href="#cb"><stop offset=".2394" stop-color="#000499"/><stop offset=".3106" stop-color="#050099"/><stop offset=".5955" stop-color="#650099"/></linearGradient><linearGradient id="d225" href="#cb"><stop offset=".2409" stop-color="#000399"/><stop offset=".3106" stop-color="#050099"/><stop offset=".5939" stop-color="#630099"/></linearGradient><linearGradient id="d226" href="#cb"><stop offset=".2424" stop-color="#000399"/><stop offset=".3121" stop-color="#050099"/><stop offset=".5909" stop-color="#620099"/></linearGradient><linearGradient id="d227" href="#cb"><stop offset=".2439" stop-color="#000399"/><stop offset=".3121" stop-color="#050099"/><stop offset=".5894" stop-color="#610099"/></linearGradient><linearGradient id="d228" href="#cb"><stop offset=".2470" stop-color="#000299"/><stop offset=".3121" stop-color="#050099"/><stop offset=".5864" stop-color="#5f0099"/></linearGradient><linearGradient id="d229" href="#cb"><stop offset=".2485" stop-color="#000299"/><stop offset=".3136" stop-color="#050099"/><stop offset=".5833" stop-color="#5d0099"/></linearGradient><linearGradient id="d230" href="#cb"><stop offset=".2500" stop-color="#000199"/><stop offset=".3136" stop-color="#050099"/><stop offset=".5818" stop-color="#5c0099"/></linearGradient><linearGradient id="d231" href="#cb"><stop offset=".2530" stop-color="#000199"/><stop offset=".3152" stop-color="#060099"/><stop offset=".5788" stop-color="#5b0099"/></linearGradient><linearGradient id="d232" href="#cb"><stop offset=".2545" stop-color="#000199"/><stop offset=".3152" stop-color="#050099"/><stop offset=".5773" stop-color="#5a0099"/></linearGradient><linearGradient id="d233" href="#cb"><stop offset=".2561" stop-color="#009"/><stop offset=".3167" stop-color="#060099"/><stop offset=".5742" stop-color="#580099"/></linearGradient><linearGradient id="d234" href="#cb"><stop offset=".2591" stop-color="#009"/><stop offset=".3182" stop-color="#060099"/><stop offset=".5712" stop-color="#560099"/></linearGradient><linearGradient id="d235" href="#cb"><stop offset=".2606" stop-color="#009"/><stop offset=".3182" stop-color="#060099"/><stop offset=".5697" stop-color="#509"/></linearGradient><linearGradient id="d236" href="#cb"><stop offset=".2621" stop-color="#009"/><stop offset=".3197" stop-color="#060099"/><stop offset=".5667" stop-color="#540099"/></linearGradient><linearGradient id="d237" href="#cb"><stop offset=".2652" stop-color="#009"/><stop offset=".3212" stop-color="#070099"/><stop offset=".5652" stop-color="#530099"/></linearGradient><linearGradient id="d238" href="#cb"><stop offset=".2667" stop-color="#009"/><stop offset=".3227" stop-color="#070099"/><stop offset=".5621" stop-color="#510099"/></linearGradient><linearGradient id="d239" href="#cb"><stop offset=".2697" stop-color="#009"/><stop offset=".3242" stop-color="#070099"/><stop offset=".5591" stop-color="#500099"/></linearGradient><linearGradient id="d240" href="#cb"><stop offset=".2712" stop-color="#009"/><stop offset=".3258" stop-color="#070099"/><stop offset=".5576" stop-color="#4f0099"/></linearGradient><linearGradient id="d241" href="#cb"><stop offset=".2742" stop-color="#009"/><stop offset=".3288" stop-color="#080099"/><stop offset=".5545" stop-color="#4d0099"/></linearGradient><linearGradient id="d242" href="#cb"><stop offset=".2758" stop-color="#009"/><stop offset=".3303" stop-color="#080099"/><stop offset=".5530" stop-color="#4c0099"/></linearGradient><linearGradient id="d243" href="#cb"><stop offset=".2773" stop-color="#009"/><stop offset=".3333" stop-color="#090099"/><stop offset=".5500" stop-color="#4b0099"/></linearGradient><linearGradient id="d244" href="#cb"><stop offset=".2803" stop-color="#009"/><stop offset=".3409" stop-color="#0b0099"/><stop offset=".5470" stop-color="#4a0099"/></linearGradient><linearGradient id="d245" href="#cb"><stop offset=".2818" stop-color="#009"/><stop offset=".3439" stop-color="#0c0099"/><stop offset=".5455" stop-color="#490099"/></linearGradient><linearGradient id="d246" href="#cb"><stop offset=".2848" stop-color="#009"/><stop offset=".3606" stop-color="#109"/><stop offset=".5424" stop-color="#470099"/></linearGradient><linearGradient id="d247" href="#cb"><stop offset=".2879" stop-color="#009"/><stop offset=".4273" stop-color="#240099"/><stop offset=".5409" stop-color="#460099"/></linearGradient><linearGradient id="d248" href="#cb"><stop offset=".2894" stop-color="#009"/><stop offset=".5273" stop-color="#420099"/><stop offset=".5379" stop-color="#450099"/></linearGradient><linearGradient id="d249" href="#cb"><stop offset=".2924" stop-color="#009"/><stop offset=".5348" stop-color="#409"/></linearGradient><linearGradient id="d250" href="#cb"><stop offset=".2939" stop-color="#009"/><stop offset=".5333" stop-color="#430099"/></linearGradient><linearGradient id="d251" href="#cb"><stop offset=".2970" stop-color="#009"/><stop offset=".5303" stop-color="#410099"/></linearGradient><linearGradient id="d252" href="#cb"><stop offset=".3000" stop-color="#009"/><stop offset=".5288" stop-color="#410099"/></linearGradient><linearGradient id="d253" href="#cb"><stop offset=".3015" stop-color="#009"/><stop offset=".5258" stop-color="#3f0099"/></linearGradient><linearGradient id="d254" href="#cb"><stop offset=".3045" stop-color="#009"/><stop offset=".5227" stop-color="#3e0099"/></linearGradient><linearGradient id="d255" href="#cb"><stop offset=".3076" stop-color="#009"/><stop offset=".5212" stop-color="#3d0099"/></linearGradient><linearGradient id="d256" href="#cb"><stop offset=".3091" stop-color="#010099"/><stop offset=".5182" stop-color="#3c0099"/></linearGradient><linearGradient id="d257" href="#cb"><stop offset=".3121" stop-color="#010099"/><stop offset=".5167" stop-color="#3b0099"/></linearGradient><linearGradient id="d258" href="#cb"><stop offset=".3152" stop-color="#020099"/><stop offset=".5136" stop-color="#3a0099"/></linearGradient><linearGradient id="d259" href="#cb"><stop offset=".3182" stop-color="#030099"/><stop offset=".5106" stop-color="#390099"/></linearGradient><linearGradient id="d260" href="#cb"><stop offset=".3197" stop-color="#030099"/><stop offset=".5091" stop-color="#380099"/></linearGradient><linearGradient id="d261" href="#cb"><stop offset=".3227" stop-color="#040099"/><stop offset=".5061" stop-color="#370099"/></linearGradient><linearGradient id="d262" href="#cb"><stop offset=".3258" stop-color="#040099"/><stop offset=".5045" stop-color="#360099"/></linearGradient><linearGradient id="d263" href="#cb"><stop offset=".3288" stop-color="#050099"/><stop offset=".5015" stop-color="#350099"/></linearGradient><linearGradient id="d264" href="#cb"><stop offset=".3318" stop-color="#060099"/><stop offset=".4985" stop-color="#309"/></linearGradient><linearGradient id="d265" href="#cb"><stop offset=".3348" stop-color="#060099"/><stop offset=".4970" stop-color="#309"/></linearGradient><linearGradient id="d266" href="#cb"><stop offset=".3379" stop-color="#070099"/><stop offset=".4939" stop-color="#320099"/></linearGradient><linearGradient id="d267" href="#cb"><stop offset=".3409" stop-color="#080099"/><stop offset=".4909" stop-color="#300099"/></linearGradient><linearGradient id="d268" href="#cb"><stop offset=".3439" stop-color="#080099"/><stop offset=".4894" stop-color="#300099"/></linearGradient><linearGradient id="d269" href="#cb"><stop offset=".3455" stop-color="#090099"/><stop offset=".4864" stop-color="#2f0099"/></linearGradient><linearGradient id="d270" href="#cb"><stop offset=".3485" stop-color="#090099"/><stop offset=".4848" stop-color="#2e0099"/></linearGradient><linearGradient id="d271" href="#cb"><stop offset=".3515" stop-color="#0a0099"/><stop offset=".4818" stop-color="#2d0099"/></linearGradient><linearGradient id="d272" href="#cb"><stop offset=".3545" stop-color="#0b0099"/><stop offset=".4788" stop-color="#2c0099"/></linearGradient><linearGradient id="d273" href="#cb"><stop offset=".3576" stop-color="#0b0099"/><stop offset=".4773" stop-color="#2b0099"/></linearGradient><linearGradient id="d274" href="#cb"><stop offset=".3606" stop-color="#0c0099"/><stop offset=".4742" stop-color="#2a0099"/></linearGradient><linearGradient id="d275" href="#cb"><stop offset=".3636" stop-color="#0d0099"/><stop offset=".4727" stop-color="#290099"/></linearGradient><linearGradient id="d276" href="#cb"><stop offset=".3667" stop-color="#0d0099"/><stop offset=".4697" stop-color="#280099"/></linearGradient><linearGradient id="d277" href="#cb"><stop offset=".3697" stop-color="#0e0099"/><stop offset=".4667" stop-color="#270099"/></linearGradient><linearGradient id="d278" href="#cb"><stop offset=".3727" stop-color="#0e0099"/><stop offset=".4652" stop-color="#260099"/></linearGradient><linearGradient id="d279" href="#cb"><stop offset=".3758" stop-color="#0f0099"/><stop offset=".4621" stop-color="#250099"/></linearGradient><linearGradient id="d280" href="#cb"><stop offset=".3788" stop-color="#100099"/><stop offset=".4606" stop-color="#250099"/></linearGradient><linearGradient id="d281" href="#cb"><stop offset=".3818" stop-color="#100099"/><stop offset=".4576" stop-color="#240099"/></linearGradient><linearGradient id="d282" href="#cb"><stop offset=".3848" stop-color="#109"/><stop offset=".4545" stop-color="#230099"/></linearGradient><linearGradient id="d283" href="#cb"><stop offset=".3879" stop-color="#109"/><stop offset=".4530" stop-color="#209"/></linearGradient><linearGradient id="d284" href="#cb"><stop offset=".3909" stop-color="#120099"/><stop offset=".4500" stop-color="#210099"/></linearGradient><linearGradient id="d285" href="#cb"><stop offset=".3939" stop-color="#130099"/><stop offset=".4485" stop-color="#200099"/></linearGradient><linearGradient id="d286" href="#cb"><stop offset=".3970" stop-color="#130099"/><stop offset=".4455" stop-color="#1f0099"/></linearGradient><linearGradient id="d287" href="#cb"><stop offset=".4000" stop-color="#140099"/><stop offset=".4424" stop-color="#1e0099"/></linearGradient><linearGradient id="d288" href="#cb"><stop offset=".4030" stop-color="#140099"/><stop offset=".4409" stop-color="#1e0099"/></linearGradient><linearGradient id="d289" href="#cb"><stop offset=".4061" stop-color="#150099"/><stop offset=".4379" stop-color="#1d0099"/></linearGradient><linearGradient id="d290" href="#cb"><stop offset=".4091" stop-color="#160099"/><stop offset=".4364" stop-color="#1c0099"/></linearGradient><linearGradient id="d291" href="#cb"><stop offset=".4121" stop-color="#160099"/><stop offset=".4333" stop-color="#1b0099"/></linearGradient><linearGradient id="d292" href="#cb"><stop offset=".4167" stop-color="#170099"/><stop offset=".4303" stop-color="#1a0099"/></linearGradient><linearGradient id="t0" href="#cb"><stop offset=".2061" stop-color="#00ff01"/><stop offset=".2288" stop-color="#1fff00"/></linearGradient><linearGradient id="t1" href="#cb"><stop offset=".2061" stop-color="#00ff04"/><stop offset=".2288" stop-color="#1fff02"/><stop offset=".2561" stop-color="#4dff00"/></linearGradient><linearGradient id="t2" href="#cb"><stop offset=".2076" stop-color="#00ff08"/><stop offset=".2636" stop-color="#5aff00"/><stop offset=".2818" stop-color="#7dff00"/></linearGradient><linearGradient id="t3" href="#cb"><stop offset=".2076" stop-color="#00ff0b"/><stop offset=".2591" stop-color="#52ff05"/><stop offset=".3091" stop-color="#b6ff00"/></linearGradient><linearGradient id="t4" href="#cb"><stop offset=".2076" stop-color="#00ff0f"/><stop offset=".2455" stop-color="#39ff0b"/><stop offset=".3091" stop-color="#b6ff02"/><stop offset=".3364" stop-color="#f6ff00"/></linearGradient><linearGradient id="t5" href="#cb"><stop offset=".2076" stop-color="#00ff13"/><stop offset=".2258" stop-color="#18ff11"/><stop offset=".2924" stop-color="#92ff09"/><stop offset=".3409" stop-color="#fffc01"/><stop offset=".3621" stop-color="#ffce00"/></linearGradient><linearGradient id="t6" href="#cb"><stop offset=".2091" stop-color="#00ff16"/><stop offset=".2636" stop-color="#59ff10"/><stop offset=".3242" stop-color="#d9ff08"/><stop offset=".3409" stop-color="#fffb06"/><stop offset=".3742" stop-color="#ffb900"/><stop offset=".3894" stop-color="#ffa300"/></linearGradient><linearGradient id="t7" href="#cb"><stop offset=".2091" stop-color="#00ff1a"/><stop offset=".2561" stop-color="#4bff15"/><stop offset=".3167" stop-color="#c8ff0e"/><stop offset=".3409" stop-color="#fffb0a"/><stop offset=".3742" stop-color="#ffb804"/><stop offset=".4152" stop-color="#ff8500"/></linearGradient><linearGradient id="t8" href="#cb"><stop offset=".2091" stop-color="#00ff1d"/><stop offset=".2364" stop-color="#28ff1b"/><stop offset=".3000" stop-color="#a2ff14"/><stop offset=".3394" stop-color="#fffe0f"/><stop offset=".3727" stop-color="#ffba08"/><stop offset=".4212" stop-color="#ff7e01"/><stop offset=".4424" stop-color="#ff6c00"/></linearGradient><linearGradient id="t9" href="#cb"><stop offset=".2091" stop-color="#00ff21"/><stop offset=".2258" stop-color="#16ff20"/><stop offset=".2909" stop-color="#8fff1a"/><stop offset=".3394" stop-color="#fffd14"/><stop offset=".3727" stop-color="#ffb90b"/><stop offset=".4212" stop-color="#ff7d03"/><stop offset=".4697" stop-color="#ff5800"/></linearGradient><linearGradient id="t10" href="#cb"><stop offset=".2106" stop-color="#00ff25"/><stop offset=".2621" stop-color="#55ff21"/><stop offset=".3212" stop-color="#d4ff1b"/><stop offset=".3394" stop-color="#fffd19"/><stop offset=".3727" stop-color="#ffb90f"/><stop offset=".4212" stop-color="#ff7d06"/><stop offset=".4955" stop-color="#ff4900"/></linearGradient><linearGradient id="t11" href="#cb"><stop offset=".2106" stop-color="#00ff29"/><stop offset=".2530" stop-color="#44ff26"/><stop offset=".3136" stop-color="#c2ff20"/><stop offset=".3394" stop-color="#fffc1d"/><stop offset=".3727" stop-color="#ffb813"/><stop offset=".4212" stop-color="#ff7c09"/><stop offset=".4955" stop-color="#ff4801"/><stop offset=".5227" stop-color="#ff3b00"/></linearGradient><linearGradient id="t12" href="#cb"><stop offset=".2106" stop-color="#00ff2c"/><stop offset=".2303" stop-color="#1cff2b"/><stop offset=".2939" stop-color="#95ff27"/><stop offset=".3394" stop-color="#fffb22"/><stop offset=".3727" stop-color="#ffb716"/><stop offset=".4212" stop-color="#ff7b0c"/><stop offset=".4955" stop-color="#ff4803"/><stop offset=".5500" stop-color="#ff3000"/></linearGradient><linearGradient id="t13" href="#cb"><stop offset=".2121" stop-color="#00ff30"/><stop offset=".2652" stop-color="#5aff2d"/><stop offset=".3227" stop-color="#d8ff29"/><stop offset=".3394" stop-color="#fffb27"/><stop offset=".3727" stop-color="#ffb71a"/><stop offset=".4212" stop-color="#ff7b0f"/><stop offset=".4955" stop-color="#ff4705"/><stop offset=".5758" stop-color="#ff2700"/></linearGradient><linearGradient id="t14" href="#cb"><stop offset=".2121" stop-color="#00ff34"/><stop offset=".2591" stop-color="#4eff32"/><stop offset=".3182" stop-color="#ceff2e"/><stop offset=".3379" stop-color="#fffe2d"/><stop offset=".3697" stop-color="#ffbb1f"/><stop offset=".4167" stop-color="#ff7f13"/><stop offset=".4879" stop-color="#ff4b08"/><stop offset=".6030" stop-color="#ff1f00"/></linearGradient><linearGradient id="t15" href="#cb"><stop offset=".2121" stop-color="#00ff38"/><stop offset=".2439" stop-color="#32ff37"/><stop offset=".3045" stop-color="#adff34"/><stop offset=".3379" stop-color="#fffe32"/><stop offset=".3697" stop-color="#ffba23"/><stop offset=".4167" stop-color="#ff7e16"/><stop offset=".4879" stop-color="#ff4a0a"/><stop offset=".6061" stop-color="#ff1d00"/><stop offset=".6288" stop-color="#ff1800"/></linearGradient><linearGradient id="t16" href="#cb"><stop offset=".2121" stop-color="#00ff3c"/><stop offset=".2273" stop-color="#14ff3c"/><stop offset=".2909" stop-color="#8fff39"/><stop offset=".3379" stop-color="#fffd37"/><stop offset=".3697" stop-color="#ffba27"/><stop offset=".4167" stop-color="#ff7d19"/><stop offset=".4879" stop-color="#ff490c"/><stop offset=".6061" stop-color="#ff1d02"/><stop offset=".6561" stop-color="#f10"/></linearGradient><linearGradient id="t17" href="#cb"><stop offset=".2136" stop-color="#00ff40"/><stop offset=".2652" stop-color="#59ff3f"/><stop offset=".3212" stop-color="#d6ff3d"/><stop offset=".3379" stop-color="#fffc3c"/><stop offset=".3697" stop-color="#ffb92b"/><stop offset=".4152" stop-color="#ff7e1c"/><stop offset=".4864" stop-color="#ff4a0f"/><stop offset=".6030" stop-color="#ff1d04"/><stop offset=".6833" stop-color="#ff0c00"/></linearGradient><linearGradient id="t18" href="#cb"><stop offset=".2136" stop-color="#0f4"/><stop offset=".2576" stop-color="#4aff43"/><stop offset=".3152" stop-color="#c7ff42"/><stop offset=".3379" stop-color="#fffc41"/><stop offset=".3697" stop-color="#ffb82f"/><stop offset=".4152" stop-color="#ff7e1f"/><stop offset=".4864" stop-color="#ff4911"/><stop offset=".6030" stop-color="#ff1d05"/><stop offset=".7091" stop-color="#ff0700"/></linearGradient><linearGradient id="t19" href="#cb"><stop offset=".2136" stop-color="#00ff48"/><stop offset=".2364" stop-color="#22ff48"/><stop offset=".2970" stop-color="#9cff48"/><stop offset=".3379" stop-color="#fffb46"/><stop offset=".3697" stop-color="#ffb833"/><stop offset=".4152" stop-color="#ff7d22"/><stop offset=".4864" stop-color="#ff4913"/><stop offset=".6030" stop-color="#ff1c07"/><stop offset=".7364" stop-color="#ff0200"/></linearGradient><linearGradient id="t20" href="#cb"><stop offset=".2136" stop-color="#00ff4d"/><stop offset=".2273" stop-color="#12ff4d"/><stop offset=".2894" stop-color="#8bff4c"/><stop offset=".3364" stop-color="#fffe4c"/><stop offset=".3667" stop-color="#ffbc38"/><stop offset=".4106" stop-color="#ff8127"/><stop offset=".4788" stop-color="#ff4c17"/><stop offset=".5909" stop-color="#ff1f09"/><stop offset=".7515" stop-color="#f00"/></linearGradient><linearGradient id="t21" href="#cb"><stop offset=".2152" stop-color="#00ff51"/><stop offset=".2636" stop-color="#55ff51"/><stop offset=".3197" stop-color="#d4ff52"/><stop offset=".3364" stop-color="#fffe51"/><stop offset=".3667" stop-color="#ffbb3c"/><stop offset=".4106" stop-color="#ff802a"/><stop offset=".4788" stop-color="#ff4c19"/><stop offset=".5909" stop-color="#ff1f0b"/><stop offset=".7515" stop-color="#ff0001"/></linearGradient><linearGradient id="t22" href="#cb"><stop offset=".2152" stop-color="#0f5"/><stop offset=".2530" stop-color="#40ff56"/><stop offset=".3106" stop-color="#bdff57"/><stop offset=".3364" stop-color="#fffd57"/><stop offset=".3667" stop-color="#ffbb41"/><stop offset=".4106" stop-color="#ff802d"/><stop offset=".4788" stop-color="#ff4b1b"/><stop offset=".5909" stop-color="#ff1e0c"/><stop offset=".7485" stop-color="#ff0002"/></linearGradient><linearGradient id="t23" href="#cb"><stop offset=".2152" stop-color="#00ff59"/><stop offset=".2333" stop-color="#1bff5a"/><stop offset=".2939" stop-color="#96ff5b"/><stop offset=".3364" stop-color="#fffc5c"/><stop offset=".3667" stop-color="#ffba45"/><stop offset=".4106" stop-color="#ff7f30"/><stop offset=".4788" stop-color="#ff4a1e"/><stop offset=".5909" stop-color="#ff1e0e"/><stop offset=".7470" stop-color="#ff0003"/></linearGradient><linearGradient id="t24" href="#cb"><stop offset=".2152" stop-color="#00ff5e"/><stop offset=".2273" stop-color="#0fff5e"/><stop offset=".2894" stop-color="#8bff60"/><stop offset=".3364" stop-color="#fffc61"/><stop offset=".3667" stop-color="#ffb949"/><stop offset=".4106" stop-color="#ff7e33"/><stop offset=".4788" stop-color="#ff4a20"/><stop offset=".5909" stop-color="#ff1e10"/><stop offset=".7439" stop-color="#ff0005"/></linearGradient><linearGradient id="t25" href="#cb"><stop offset=".2167" stop-color="#00ff62"/><stop offset=".2606" stop-color="#4eff64"/><stop offset=".3167" stop-color="#cdff67"/><stop offset=".3364" stop-color="#fffb67"/><stop offset=".3667" stop-color="#ffb94d"/><stop offset=".4106" stop-color="#ff7e36"/><stop offset=".4788" stop-color="#ff4922"/><stop offset=".5909" stop-color="#ff1d11"/><stop offset=".7409" stop-color="#ff0006"/></linearGradient><linearGradient id="t26" href="#cb"><stop offset=".2167" stop-color="#0f6"/><stop offset=".2439" stop-color="#2dff68"/><stop offset=".3015" stop-color="#a8ff6b"/><stop offset=".3348" stop-color="#ffff6e"/><stop offset=".3652" stop-color="#ffbb52"/><stop offset=".4091" stop-color="#ff7e3a"/><stop offset=".4758" stop-color="#ff4a25"/><stop offset=".5864" stop-color="#ff1e13"/><stop offset=".7394" stop-color="#ff0007"/></linearGradient><linearGradient id="t27" href="#cb"><stop offset=".2167" stop-color="#00ff6b"/><stop offset=".2303" stop-color="#13ff6c"/><stop offset=".2909" stop-color="#8fff70"/><stop offset=".3348" stop-color="#fffe73"/><stop offset=".3652" stop-color="#ffba57"/><stop offset=".4091" stop-color="#ff7e3d"/><stop offset=".4758" stop-color="#ff4a28"/><stop offset=".5864" stop-color="#ff1d15"/><stop offset=".7364" stop-color="#ff0008"/></linearGradient><linearGradient id="t28" href="#cb"><stop offset=".2182" stop-color="#00ff70"/><stop offset=".2652" stop-color="#56ff73"/><stop offset=".3182" stop-color="#d3ff78"/><stop offset=".3348" stop-color="#fffd79"/><stop offset=".3652" stop-color="#ffb95b"/><stop offset=".4091" stop-color="#ff7d41"/><stop offset=".4758" stop-color="#ff492a"/><stop offset=".5864" stop-color="#ff1d17"/><stop offset=".7333" stop-color="#ff000a"/></linearGradient><linearGradient id="t29" href="#cb"><stop offset=".2182" stop-color="#00ff74"/><stop offset=".2591" stop-color="#49ff77"/><stop offset=".3136" stop-color="#c7ff7d"/><stop offset=".3348" stop-color="#fffd7f"/><stop offset=".3652" stop-color="#ffb85f"/><stop offset=".4091" stop-color="#ff7c44"/><stop offset=".4758" stop-color="#ff492c"/><stop offset=".5864" stop-color="#ff1d18"/><stop offset=".7318" stop-color="#ff000b"/></linearGradient><linearGradient id="t30" href="#cb"><stop offset=".2182" stop-color="#00ff79"/><stop offset=".2379" stop-color="#1fff7a"/><stop offset=".2955" stop-color="#99ff81"/><stop offset=".3348" stop-color="#fffc84"/><stop offset=".3636" stop-color="#ffba65"/><stop offset=".4061" stop-color="#ff7f49"/><stop offset=".4712" stop-color="#ff4b30"/><stop offset=".5788" stop-color="#ff1e1b"/><stop offset=".7288" stop-color="#ff000c"/></linearGradient><linearGradient id="t31" href="#cb"><stop offset=".2182" stop-color="#00ff7d"/><stop offset=".2303" stop-color="#10ff7f"/><stop offset=".2894" stop-color="#8bff85"/><stop offset=".3348" stop-color="#fffb8a"/><stop offset=".3636" stop-color="#ffba6a"/><stop offset=".4061" stop-color="#ff7e4c"/><stop offset=".4712" stop-color="#ff4a33"/><stop offset=".5788" stop-color="#ff1e1d"/><stop offset=".7273" stop-color="#ff000e"/></linearGradient><linearGradient id="t32" href="#cb"><stop offset=".2197" stop-color="#00ff82"/><stop offset=".2636" stop-color="#51ff87"/><stop offset=".3167" stop-color="#d0ff8f"/><stop offset=".3348" stop-color="#fffb90"/><stop offset=".3636" stop-color="#ffb96e"/><stop offset=".4061" stop-color="#ff7e50"/><stop offset=".4712" stop-color="#ff4a35"/><stop offset=".5788" stop-color="#ff1d1e"/><stop offset=".7242" stop-color="#ff000f"/></linearGradient><linearGradient id="t33" href="#cb"><stop offset=".2197" stop-color="#00ff87"/><stop offset=".2530" stop-color="#3bff8b"/><stop offset=".3076" stop-color="#b8ff93"/><stop offset=".3333" stop-color="#fffe98"/><stop offset=".3621" stop-color="#ffbb74"/><stop offset=".4045" stop-color="#ff7e54"/><stop offset=".4682" stop-color="#ff4b38"/><stop offset=".5742" stop-color="#ff1e21"/><stop offset=".7212" stop-color="#f01"/></linearGradient><linearGradient id="t34" href="#cb"><stop offset=".2197" stop-color="#00ff8c"/><stop offset=".2348" stop-color="#17ff8e"/><stop offset=".2924" stop-color="#92ff97"/><stop offset=".3333" stop-color="#fffe9e"/><stop offset=".3621" stop-color="#ffba79"/><stop offset=".4030" stop-color="#ff7f58"/><stop offset=".4667" stop-color="#ff4b3b"/><stop offset=".5712" stop-color="#ff1f23"/><stop offset=".7197" stop-color="#ff0012"/></linearGradient><linearGradient id="t35" href="#cb"><stop offset=".2197" stop-color="#00ff91"/><stop offset=".2303" stop-color="#0eff92"/><stop offset=".2879" stop-color="#87ff9b"/><stop offset=".3333" stop-color="#fffda4"/><stop offset=".3621" stop-color="#ffba7d"/><stop offset=".4030" stop-color="#ff7f5c"/><stop offset=".4667" stop-color="#ff4a3e"/><stop offset=".5712" stop-color="#ff1e25"/><stop offset=".7167" stop-color="#ff0013"/></linearGradient><linearGradient id="t36" href="#cb"><stop offset=".2212" stop-color="#00ff96"/><stop offset=".2621" stop-color="#4dff9c"/><stop offset=".3136" stop-color="#c9ffa7"/><stop offset=".3333" stop-color="#fffca9"/><stop offset=".3621" stop-color="#ffb982"/><stop offset=".4030" stop-color="#ff7e5f"/><stop offset=".4667" stop-color="#ff4a41"/><stop offset=".5712" stop-color="#ff1e26"/><stop offset=".7152" stop-color="#ff0015"/></linearGradient><linearGradient id="t37" href="#cb"><stop offset=".2212" stop-color="#00ff9b"/><stop offset=".2455" stop-color="#2aff9f"/><stop offset=".3000" stop-color="#a5ffaa"/><stop offset=".3333" stop-color="#fffcb0"/><stop offset=".3621" stop-color="#ffb886"/><stop offset=".4030" stop-color="#ff7d63"/><stop offset=".4667" stop-color="#ff4943"/><stop offset=".5712" stop-color="#ff1d28"/><stop offset=".7121" stop-color="#ff0016"/></linearGradient><linearGradient id="t38" href="#cb"><stop offset=".2212" stop-color="#00ffa0"/><stop offset=".2333" stop-color="#11ffa2"/><stop offset=".2894" stop-color="#8bffad"/><stop offset=".3318" stop-color="#ffffb8"/><stop offset=".3606" stop-color="#ffba8d"/><stop offset=".4015" stop-color="#ff7e67"/><stop offset=".4636" stop-color="#ff4a47"/><stop offset=".5667" stop-color="#ff1e2b"/><stop offset=".7091" stop-color="#ff0018"/></linearGradient><linearGradient id="t39" href="#cb"><stop offset=".2212" stop-color="#00ffa5"/><stop offset=".2318" stop-color="#0effa7"/><stop offset=".2879" stop-color="#87ffb3"/><stop offset=".3318" stop-color="#ffffbf"/><stop offset=".3591" stop-color="#ffbc94"/><stop offset=".3985" stop-color="#ff816d"/><stop offset=".4591" stop-color="#ff4d4b"/><stop offset=".5591" stop-color="#ff202e"/><stop offset=".7076" stop-color="#ff0019"/></linearGradient><linearGradient id="t40" href="#cb"><stop offset=".2227" stop-color="#0fa"/><stop offset=".2591" stop-color="#45ffb2"/><stop offset=".3106" stop-color="#c2ffbf"/><stop offset=".3318" stop-color="#fffec5"/><stop offset=".3591" stop-color="#ffbb98"/><stop offset=".3985" stop-color="#ff8071"/><stop offset=".4591" stop-color="#ff4c4e"/><stop offset=".5591" stop-color="#ff1f30"/><stop offset=".7045" stop-color="#ff001b"/></linearGradient><linearGradient id="t41" href="#cb"><stop offset=".2227" stop-color="#00ffaf"/><stop offset=".2409" stop-color="#1effb3"/><stop offset=".2955" stop-color="#9affc1"/><stop offset=".3318" stop-color="#fffdcb"/><stop offset=".3591" stop-color="#ffbb9d"/><stop offset=".3985" stop-color="#ff8074"/><stop offset=".4591" stop-color="#ff4b51"/><stop offset=".5591" stop-color="#ff1f32"/><stop offset=".7015" stop-color="#ff001c"/></linearGradient><linearGradient id="t42" href="#cb"><stop offset=".2227" stop-color="#00ffb5"/><stop offset=".2333" stop-color="#0fffb7"/><stop offset=".2894" stop-color="#8bffc6"/><stop offset=".3318" stop-color="#fffdd2"/><stop offset=".3591" stop-color="#ffbaa2"/><stop offset=".3985" stop-color="#ff7f78"/><stop offset=".4591" stop-color="#ff4b53"/><stop offset=".5591" stop-color="#ff1e34"/><stop offset=".7000" stop-color="#ff001e"/></linearGradient><linearGradient id="t43" href="#cb"><stop offset=".2242" stop-color="#00ffba"/><stop offset=".2652" stop-color="#51ffc5"/><stop offset=".3152" stop-color="#d0ffd4"/><stop offset=".3318" stop-color="#fffcd8"/><stop offset=".3591" stop-color="#ffb9a7"/><stop offset=".3985" stop-color="#ff7e7c"/><stop offset=".4591" stop-color="#ff4a56"/><stop offset=".5591" stop-color="#ff1e35"/><stop offset=".6970" stop-color="#ff001f"/></linearGradient><linearGradient id="t44" href="#cb"><stop offset=".2242" stop-color="#00ffc0"/><stop offset=".2530" stop-color="#36ffc7"/><stop offset=".3045" stop-color="#b2ffd7"/><stop offset=".3318" stop-color="#fffbde"/><stop offset=".3591" stop-color="#ffb8ac"/><stop offset=".3985" stop-color="#ff7d80"/><stop offset=".4591" stop-color="#ff4959"/><stop offset=".5591" stop-color="#ff1d37"/><stop offset=".6955" stop-color="#ff0021"/></linearGradient><linearGradient id="t45" href="#cb"><stop offset=".2242" stop-color="#00ffc5"/><stop offset=".2379" stop-color="#16ffc9"/><stop offset=".2909" stop-color="#8effd9"/><stop offset=".3303" stop-color="#ffffe9"/><stop offset=".3576" stop-color="#ffbab3"/><stop offset=".3970" stop-color="#ff7e85"/><stop offset=".4576" stop-color="#ff4a5c"/><stop offset=".5576" stop-color="#ff1d3a"/><stop offset=".6924" stop-color="#f02"/></linearGradient><linearGradient id="t46" href="#cb"><stop offset=".2242" stop-color="#00ffcb"/><stop offset=".2333" stop-color="#0cffcd"/><stop offset=".2879" stop-color="#86ffdf"/><stop offset=".3303" stop-color="#fffeef"/><stop offset=".3561" stop-color="#ffbdbb"/><stop offset=".3939" stop-color="#ff818b"/><stop offset=".4515" stop-color="#ff4d62"/><stop offset=".5470" stop-color="#ff203e"/><stop offset=".6894" stop-color="#ff0024"/></linearGradient><linearGradient id="t47" href="#cb"><stop offset=".2258" stop-color="#00ffd1"/><stop offset=".2636" stop-color="#4cffdc"/><stop offset=".3121" stop-color="#c9ffef"/><stop offset=".3303" stop-color="#fffef6"/><stop offset=".3561" stop-color="#ffbcc0"/><stop offset=".3939" stop-color="#ff808f"/><stop offset=".4515" stop-color="#ff4c65"/><stop offset=".5470" stop-color="#ff2040"/><stop offset=".6879" stop-color="#ff0026"/></linearGradient><linearGradient id="t48" href="#cb"><stop offset=".2258" stop-color="#00ffd6"/><stop offset=".2455" stop-color="#23ffdc"/><stop offset=".2970" stop-color="#9efff0"/><stop offset=".3303" stop-color="#fffdfd"/><stop offset=".3561" stop-color="#ffbbc5"/><stop offset=".3939" stop-color="#ff8093"/><stop offset=".4515" stop-color="#ff4c68"/><stop offset=".5470" stop-color="#ff1f42"/><stop offset=".6848" stop-color="#ff0027"/></linearGradient><linearGradient id="t49" href="#cb"><stop offset=".2258" stop-color="#00ffdc"/><stop offset=".2364" stop-color="#10ffdf"/><stop offset=".2894" stop-color="#8afff3"/><stop offset=".3258" stop-color="#eefaff"/><stop offset=".3333" stop-color="#fff3fb"/><stop offset=".3606" stop-color="#ffb1c3"/><stop offset=".4015" stop-color="#ff7690"/><stop offset=".4636" stop-color="#ff4364"/><stop offset=".5682" stop-color="#ff183e"/><stop offset=".6833" stop-color="#ff0029"/></linearGradient><linearGradient id="t50" href="#cb"><stop offset=".2258" stop-color="#00ffe2"/><stop offset=".2333" stop-color="#09ffe4"/><stop offset=".2864" stop-color="#82fff9"/><stop offset=".3212" stop-color="#ddf5ff"/><stop offset=".3364" stop-color="#ffe9fa"/><stop offset=".3652" stop-color="#ffa8c1"/><stop offset=".4076" stop-color="#ff6f8e"/><stop offset=".4742" stop-color="#ff3d61"/><stop offset=".5864" stop-color="#ff133c"/><stop offset=".6803" stop-color="#ff002b"/></linearGradient><linearGradient id="t51" href="#cb"><stop offset=".2273" stop-color="#00ffe8"/><stop offset=".2606" stop-color="#43fff4"/><stop offset=".2985" stop-color="#9ff9ff"/><stop offset=".3379" stop-color="#ffe4fd"/><stop offset=".3667" stop-color="#ffa5c3"/><stop offset=".4106" stop-color="#ff6b8e"/><stop offset=".4788" stop-color="#ff3a61"/><stop offset=".5955" stop-color="#ff103b"/><stop offset=".6773" stop-color="#ff002c"/></linearGradient><linearGradient id="t52" href="#cb"><stop offset=".2273" stop-color="#0fe"/><stop offset=".2424" stop-color="#1afff3"/><stop offset=".2833" stop-color="#77f9ff"/><stop offset=".3409" stop-color="#ffdbfb"/><stop offset=".3712" stop-color="#ff9cc1"/><stop offset=".4167" stop-color="#ff648d"/><stop offset=".4894" stop-color="#ff345f"/><stop offset=".6136" stop-color="#ff0b39"/><stop offset=".6758" stop-color="#ff002e"/></linearGradient><linearGradient id="t53" href="#cb"><stop offset=".2273" stop-color="#00fff4"/><stop offset=".2364" stop-color="#0dfff7"/><stop offset=".2742" stop-color="#60f7ff"/><stop offset=".3424" stop-color="#ffd6fe"/><stop offset=".3742" stop-color="#ff97c1"/><stop offset=".4212" stop-color="#ff608c"/><stop offset=".4970" stop-color="#ff305e"/><stop offset=".6273" stop-color="#ff0838"/><stop offset=".6727" stop-color="#ff0030"/></linearGradient><linearGradient id="t54" href="#cb"><stop offset=".2273" stop-color="#00fffa"/><stop offset=".2348" stop-color="#09fffd"/><stop offset=".3333" stop-color="#e4d5ff"/><stop offset=".3455" stop-color="#ffcefd"/><stop offset=".3788" stop-color="#ff8fbf"/><stop offset=".4288" stop-color="#ff5889"/><stop offset=".5091" stop-color="#ff2a5b"/><stop offset=".6500" stop-color="#ff0335"/><stop offset=".6697" stop-color="#ff0032"/></linearGradient><linearGradient id="t55" href="#cb"><stop offset=".2288" stop-color="#00fdff"/><stop offset=".2682" stop-color="#4dedff"/><stop offset=".3485" stop-color="#ffc6fc"/><stop offset=".3818" stop-color="#ff8abf"/><stop offset=".4333" stop-color="#ff5489"/><stop offset=".5167" stop-color="#ff265a"/><stop offset=".6636" stop-color="#ff0034"/><stop offset=".6682" stop-color="#f03"/></linearGradient><linearGradient id="t56" href="#cb"><stop offset=".2288" stop-color="#00f8ff"/><stop offset=".2439" stop-color="#19f1ff"/><stop offset=".3455" stop-color="#f5c4ff"/><stop offset=".3530" stop-color="#ffbbf7"/><stop offset=".3879" stop-color="#ff81bb"/><stop offset=".4409" stop-color="#ff4e86"/><stop offset=".5273" stop-color="#ff2259"/><stop offset=".6652" stop-color="#ff0035"/></linearGradient><linearGradient id="t57" href="#cb"><stop offset=".2288" stop-color="#00f2ff"/><stop offset=".2379" stop-color="#0ceeff"/><stop offset=".3424" stop-color="#e9c1ff"/><stop offset=".3530" stop-color="#ffbafd"/><stop offset=".3879" stop-color="#ff80bf"/><stop offset=".4409" stop-color="#ff4d89"/><stop offset=".5258" stop-color="#ff225b"/><stop offset=".6636" stop-color="#ff0037"/></linearGradient><linearGradient id="t58" href="#cb"><stop offset=".2303" stop-color="#00ecff"/><stop offset=".3061" stop-color="#95ccff"/><stop offset=".3561" stop-color="#ffb3fc"/><stop offset=".3924" stop-color="#ff79be"/><stop offset=".4470" stop-color="#ff4888"/><stop offset=".5348" stop-color="#ff1e5a"/><stop offset=".6606" stop-color="#ff0039"/></linearGradient><linearGradient id="t59" href="#cb"><stop offset=".2303" stop-color="#00e6ff"/><stop offset=".2788" stop-color="#5ad2ff"/><stop offset=".3576" stop-color="#ffaffe"/><stop offset=".3939" stop-color="#ff77c0"/><stop offset=".4485" stop-color="#ff468a"/><stop offset=".5364" stop-color="#ff1d5b"/><stop offset=".6576" stop-color="#ff003b"/></linearGradient><linearGradient id="t60" href="#cb"><stop offset=".2303" stop-color="#00e1ff"/><stop offset=".2470" stop-color="#1adaff"/><stop offset=".3561" stop-color="#f7acff"/><stop offset=".3636" stop-color="#ffa2f6"/><stop offset=".4015" stop-color="#ff6dba"/><stop offset=".4591" stop-color="#ff3f85"/><stop offset=".5530" stop-color="#ff1758"/><stop offset=".6561" stop-color="#ff003d"/></linearGradient><linearGradient id="t61" href="#cb"><stop offset=".2303" stop-color="#00dcff"/><stop offset=".2409" stop-color="#0ed8ff"/><stop offset=".3515" stop-color="#e8a9ff"/><stop offset=".3636" stop-color="#ffa2fc"/><stop offset=".4015" stop-color="#ff6dbe"/><stop offset=".4591" stop-color="#ff3e88"/><stop offset=".5515" stop-color="#ff175a"/><stop offset=".6530" stop-color="#ff003f"/></linearGradient><linearGradient id="t62" href="#cb"><stop offset=".2318" stop-color="#00d7ff"/><stop offset=".3136" stop-color="#97b5ff"/><stop offset=".3652" stop-color="#ff9efe"/><stop offset=".4030" stop-color="#ff6ac0"/><stop offset=".4606" stop-color="#ff3d8a"/><stop offset=".5530" stop-color="#ff165b"/><stop offset=".6515" stop-color="#ff0041"/></linearGradient><linearGradient id="t63" href="#cb"><stop offset=".2318" stop-color="#00d2ff"/><stop offset=".2924" stop-color="#6bbaff"/><stop offset=".3682" stop-color="#ff98fd"/><stop offset=".4061" stop-color="#ff66c0"/><stop offset=".4636" stop-color="#ff3a8a"/><stop offset=".5576" stop-color="#ff145c"/><stop offset=".6485" stop-color="#ff0043"/></linearGradient><linearGradient id="t64" href="#cb"><stop offset=".2318" stop-color="#00cdff"/><stop offset=".2515" stop-color="#1ec6ff"/><stop offset=".3667" stop-color="#f996ff"/><stop offset=".3742" stop-color="#ff8df6"/><stop offset=".4152" stop-color="#ff5db9"/><stop offset=".4773" stop-color="#ff3284"/><stop offset=".5788" stop-color="#ff0e57"/><stop offset=".6455" stop-color="#ff0045"/></linearGradient><linearGradient id="t65" href="#cb"><stop offset=".2318" stop-color="#00c9ff"/><stop offset=".2439" stop-color="#10c4ff"/><stop offset=".3621" stop-color="#eb94ff"/><stop offset=".3742" stop-color="#ff8cfb"/><stop offset=".4152" stop-color="#ff5cbd"/><stop offset=".4773" stop-color="#ff3187"/><stop offset=".5773" stop-color="#ff0e59"/><stop offset=".6439" stop-color="#ff0047"/></linearGradient><linearGradient id="t66" href="#cb"><stop offset=".2333" stop-color="#00c4ff"/><stop offset=".3212" stop-color="#98a2ff"/><stop offset=".3758" stop-color="#ff89fd"/><stop offset=".4167" stop-color="#ff5abf"/><stop offset=".4788" stop-color="#ff3088"/><stop offset=".5788" stop-color="#ff0d5a"/><stop offset=".6409" stop-color="#ff0049"/></linearGradient><linearGradient id="t67" href="#cb"><stop offset=".2333" stop-color="#00c0ff"/><stop offset=".3045" stop-color="#77a5ff"/><stop offset=".3788" stop-color="#ff84fc"/><stop offset=".4197" stop-color="#ff56bf"/><stop offset=".4818" stop-color="#ff2e89"/><stop offset=".5818" stop-color="#ff0b5b"/><stop offset=".6379" stop-color="#ff004b"/></linearGradient><linearGradient id="t68" href="#cb"><stop offset=".2333" stop-color="#00bcff"/><stop offset=".2561" stop-color="#21b4ff"/><stop offset=".3803" stop-color="#ff81fe"/><stop offset=".4212" stop-color="#ff54c1"/><stop offset=".4833" stop-color="#ff2c8b"/><stop offset=".5833" stop-color="#ff0a5c"/><stop offset=".6364" stop-color="#ff004d"/></linearGradient><linearGradient id="t69" href="#cb"><stop offset=".2333" stop-color="#00b8ff"/><stop offset=".2500" stop-color="#16b2ff"/><stop offset=".3758" stop-color="#f380ff"/><stop offset=".3848" stop-color="#ff7afa"/><stop offset=".4273" stop-color="#ff4ebd"/><stop offset=".4924" stop-color="#ff2888"/><stop offset=".5985" stop-color="#ff0659"/><stop offset=".6333" stop-color="#ff0050"/></linearGradient><linearGradient id="t70" href="#cb"><stop offset=".2348" stop-color="#00b4ff"/><stop offset=".3273" stop-color="#9791ff"/><stop offset=".3864" stop-color="#ff77fc"/><stop offset=".4288" stop-color="#ff4cbf"/><stop offset=".4939" stop-color="#ff2689"/><stop offset=".5985" stop-color="#ff065b"/><stop offset=".6318" stop-color="#ff0052"/></linearGradient><linearGradient id="t71" href="#cb"><stop offset=".2348" stop-color="#00b0ff"/><stop offset=".3136" stop-color="#7d93ff"/><stop offset=".3894" stop-color="#ff72fb"/><stop offset=".4333" stop-color="#ff48be"/><stop offset=".5000" stop-color="#ff2388"/><stop offset=".6076" stop-color="#ff045a"/><stop offset=".6288" stop-color="#ff0054"/></linearGradient><linearGradient id="t72" href="#cb"><stop offset=".2348" stop-color="#00adff"/><stop offset=".2606" stop-color="#24a3ff"/><stop offset=".3909" stop-color="#ff6ffd"/><stop offset=".4348" stop-color="#ff46bf"/><stop offset=".5015" stop-color="#ff2289"/><stop offset=".6091" stop-color="#ff035b"/><stop offset=".6258" stop-color="#ff0056"/></linearGradient><linearGradient id="t73" href="#cb"><stop offset=".2364" stop-color="#00a9ff"/><stop offset=".3424" stop-color="#a881ff"/><stop offset=".3939" stop-color="#ff6bfc"/><stop offset=".4394" stop-color="#ff42be"/><stop offset=".5076" stop-color="#ff1f88"/><stop offset=".6182" stop-color="#ff005a"/><stop offset=".6242" stop-color="#ff0058"/></linearGradient><linearGradient id="t74" href="#cb"><stop offset=".2364" stop-color="#00a5ff"/><stop offset=".3348" stop-color="#9881ff"/><stop offset=".3970" stop-color="#ff67fb"/><stop offset=".4424" stop-color="#ff3fbe"/><stop offset=".5121" stop-color="#ff1d88"/><stop offset=".6212" stop-color="#ff005b"/></linearGradient><linearGradient id="t75" href="#cb"><stop offset=".2364" stop-color="#00a2ff"/><stop offset=".3227" stop-color="#8283ff"/><stop offset=".3985" stop-color="#ff64fd"/><stop offset=".4439" stop-color="#ff3ec0"/><stop offset=".5136" stop-color="#ff1b8a"/><stop offset=".6197" stop-color="#ff005d"/></linearGradient><linearGradient id="t76" href="#cb"><stop offset=".2364" stop-color="#009fff"/><stop offset=".2667" stop-color="#2994ff"/><stop offset=".4015" stop-color="#ff60fc"/><stop offset=".4485" stop-color="#ff3abe"/><stop offset=".5197" stop-color="#ff1988"/><stop offset=".6167" stop-color="#ff0060"/></linearGradient><linearGradient id="t77" href="#cb"><stop offset=".2379" stop-color="#009bff"/><stop offset=".3500" stop-color="#a873ff"/><stop offset=".4045" stop-color="#ff5cfb"/><stop offset=".4515" stop-color="#ff37be"/><stop offset=".5227" stop-color="#ff1789"/><stop offset=".6136" stop-color="#ff0062"/></linearGradient><linearGradient id="t78" href="#cb"><stop offset=".2379" stop-color="#0098ff"/><stop offset=".3424" stop-color="#9973ff"/><stop offset=".4061" stop-color="#ff5afd"/><stop offset=".4545" stop-color="#ff35bf"/><stop offset=".5273" stop-color="#ff1589"/><stop offset=".6121" stop-color="#ff0064"/></linearGradient><linearGradient id="t79" href="#cb"><stop offset=".2379" stop-color="#0095ff"/><stop offset=".3303" stop-color="#8475ff"/><stop offset=".4091" stop-color="#ff56fc"/><stop offset=".4576" stop-color="#ff32bf"/><stop offset=".5318" stop-color="#ff1388"/><stop offset=".6091" stop-color="#ff0067"/></linearGradient><linearGradient id="t80" href="#cb"><stop offset=".2379" stop-color="#0092ff"/><stop offset=".2818" stop-color="#3a83ff"/><stop offset=".4121" stop-color="#ff52fb"/><stop offset=".4621" stop-color="#ff2fbd"/><stop offset=".5379" stop-color="#ff1087"/><stop offset=".6061" stop-color="#ff006a"/></linearGradient><linearGradient id="t81" href="#cb"><stop offset=".2394" stop-color="#008fff"/><stop offset=".3576" stop-color="#a966ff"/><stop offset=".4136" stop-color="#ff50fd"/><stop offset=".4636" stop-color="#ff2dbf"/><stop offset=".5394" stop-color="#ff0f89"/><stop offset=".6045" stop-color="#ff006c"/></linearGradient><linearGradient id="t82" href="#cb"><stop offset=".2394" stop-color="#008cff"/><stop offset=".3500" stop-color="#9a66ff"/><stop offset=".4167" stop-color="#ff4cfc"/><stop offset=".4667" stop-color="#ff2bbf"/><stop offset=".5424" stop-color="#ff0e89"/><stop offset=".6015" stop-color="#ff006f"/></linearGradient><linearGradient id="t83" href="#cb"><stop offset=".2394" stop-color="#008aff"/><stop offset=".3379" stop-color="#8668ff"/><stop offset=".4197" stop-color="#ff49fb"/><stop offset=".4712" stop-color="#ff28be"/><stop offset=".5485" stop-color="#ff0b88"/><stop offset=".6000" stop-color="#ff0071"/></linearGradient><linearGradient id="t84" href="#cb"><stop offset=".2394" stop-color="#0087ff"/><stop offset=".2924" stop-color="#4376ff"/><stop offset=".4212" stop-color="#ff47fd"/><stop offset=".4727" stop-color="#ff27bf"/><stop offset=".5515" stop-color="#ff0a89"/><stop offset=".5970" stop-color="#ff0074"/></linearGradient><linearGradient id="t85" href="#cb"><stop offset=".2409" stop-color="#0084ff"/><stop offset=".3652" stop-color="#a95aff"/><stop offset=".4242" stop-color="#ff44fc"/><stop offset=".4773" stop-color="#ff24be"/><stop offset=".5576" stop-color="#ff0888"/><stop offset=".5939" stop-color="#f07"/></linearGradient><linearGradient id="t86" href="#cb"><stop offset=".2409" stop-color="#0082ff"/><stop offset=".3576" stop-color="#9b5bff"/><stop offset=".4273" stop-color="#ff41fb"/><stop offset=".4803" stop-color="#ff22be"/><stop offset=".5606" stop-color="#ff0788"/><stop offset=".5924" stop-color="#ff007a"/></linearGradient><linearGradient id="t87" href="#cb"><stop offset=".2409" stop-color="#007fff"/><stop offset=".3455" stop-color="#885dff"/><stop offset=".4288" stop-color="#ff3ffd"/><stop offset=".4818" stop-color="#ff20c0"/><stop offset=".5621" stop-color="#ff068a"/><stop offset=".5894" stop-color="#ff007d"/></linearGradient><linearGradient id="t88" href="#cb"><stop offset=".2424" stop-color="#007cff"/><stop offset=".3788" stop-color="#b54fff"/><stop offset=".4318" stop-color="#ff3cfc"/><stop offset=".4864" stop-color="#ff1ebe"/><stop offset=".5682" stop-color="#ff0489"/><stop offset=".5879" stop-color="#ff0080"/></linearGradient><linearGradient id="t89" href="#cb"><stop offset=".2424" stop-color="#007aff"/><stop offset=".3727" stop-color="#a950ff"/><stop offset=".4348" stop-color="#ff39fb"/><stop offset=".4894" stop-color="#ff1cbe"/><stop offset=".5727" stop-color="#ff0288"/><stop offset=".5848" stop-color="#ff0083"/></linearGradient><linearGradient id="t90" href="#cb"><stop offset=".2424" stop-color="#0078ff"/><stop offset=".3652" stop-color="#9c50ff"/><stop offset=".4364" stop-color="#ff37fd"/><stop offset=".4924" stop-color="#ff1abf"/><stop offset=".5773" stop-color="#f08"/><stop offset=".5818" stop-color="#ff0086"/></linearGradient><linearGradient id="t91" href="#cb"><stop offset=".2424" stop-color="#0076ff"/><stop offset=".3530" stop-color="#8a52ff"/><stop offset=".4394" stop-color="#ff34fc"/><stop offset=".4955" stop-color="#ff18bf"/><stop offset=".5803" stop-color="#ff0089"/></linearGradient><linearGradient id="t92" href="#cb"><stop offset=".2439" stop-color="#0073ff"/><stop offset=".3848" stop-color="#b246ff"/><stop offset=".4424" stop-color="#ff31fb"/><stop offset=".5000" stop-color="#ff15bd"/><stop offset=".5773" stop-color="#ff008c"/></linearGradient><linearGradient id="t93" href="#cb"><stop offset=".2439" stop-color="#0071ff"/><stop offset=".3788" stop-color="#a846ff"/><stop offset=".4439" stop-color="#ff2ffd"/><stop offset=".5015" stop-color="#ff14bf"/><stop offset=".5742" stop-color="#ff0090"/></linearGradient><linearGradient id="t94" href="#cb"><stop offset=".2439" stop-color="#006fff"/><stop offset=".3712" stop-color="#9b47ff"/><stop offset=".4470" stop-color="#ff2dfc"/><stop offset=".5045" stop-color="#ff12bf"/><stop offset=".5727" stop-color="#ff0092"/></linearGradient><linearGradient id="t95" href="#cb"><stop offset=".2439" stop-color="#006dff"/><stop offset=".3606" stop-color="#8b49ff"/><stop offset=".4500" stop-color="#ff2afb"/><stop offset=".5091" stop-color="#ff10be"/><stop offset=".5697" stop-color="#ff0096"/></linearGradient><linearGradient id="t96" href="#cb"><stop offset=".2455" stop-color="#006aff"/><stop offset=".3924" stop-color="#b23dff"/><stop offset=".4530" stop-color="#ff28fb"/><stop offset=".5121" stop-color="#ff0ebe"/><stop offset=".5682" stop-color="#f09"/></linearGradient><linearGradient id="t97" href="#cb"><stop offset=".2455" stop-color="#0069ff"/><stop offset=".3864" stop-color="#a83dff"/><stop offset=".4545" stop-color="#ff26fc"/><stop offset=".5152" stop-color="#ff0dbe"/><stop offset=".5652" stop-color="#ff009d"/></linearGradient><linearGradient id="t98" href="#cb"><stop offset=".2455" stop-color="#0067ff"/><stop offset=".3788" stop-color="#9c3eff"/><stop offset=".4576" stop-color="#ff24fc"/><stop offset=".5182" stop-color="#ff0bbe"/><stop offset=".5621" stop-color="#ff00a0"/></linearGradient><linearGradient id="t99" href="#cb"><stop offset=".2455" stop-color="#0065ff"/><stop offset=".3682" stop-color="#8d40ff"/><stop offset=".4606" stop-color="#ff21fb"/><stop offset=".5227" stop-color="#ff09bd"/><stop offset=".5606" stop-color="#ff00a3"/></linearGradient><linearGradient id="t100" href="#cb"><stop offset=".2470" stop-color="#0063ff"/><stop offset=".4000" stop-color="#b235ff"/><stop offset=".4621" stop-color="#ff20fc"/><stop offset=".5242" stop-color="#ff08be"/><stop offset=".5576" stop-color="#ff00a7"/></linearGradient><linearGradient id="t101" href="#cb"><stop offset=".2470" stop-color="#0061ff"/><stop offset=".3939" stop-color="#a835ff"/><stop offset=".4652" stop-color="#ff1efc"/><stop offset=".5273" stop-color="#ff07be"/><stop offset=".5561" stop-color="#f0a"/></linearGradient><linearGradient id="t102" href="#cb"><stop offset=".2470" stop-color="#005fff"/><stop offset=".3864" stop-color="#9d36ff"/><stop offset=".4682" stop-color="#ff1bfb"/><stop offset=".5318" stop-color="#ff05bd"/><stop offset=".5530" stop-color="#ff00ae"/></linearGradient><linearGradient id="t103" href="#cb"><stop offset=".2485" stop-color="#005dff"/><stop offset=".4121" stop-color="#ba2dff"/><stop offset=".4697" stop-color="#ff1afc"/><stop offset=".5333" stop-color="#ff04bf"/><stop offset=".5500" stop-color="#ff00b3"/></linearGradient><linearGradient id="t104" href="#cb"><stop offset=".2485" stop-color="#005bff"/><stop offset=".4076" stop-color="#b22dff"/><stop offset=".4727" stop-color="#ff18fc"/><stop offset=".5379" stop-color="#ff02bd"/><stop offset=".5485" stop-color="#ff00b6"/></linearGradient><linearGradient id="t105" href="#cb"><stop offset=".2485" stop-color="#005aff"/><stop offset=".4015" stop-color="#a92dff"/><stop offset=".4758" stop-color="#ff16fb"/><stop offset=".5409" stop-color="#ff00be"/><stop offset=".5455" stop-color="#ff00ba"/></linearGradient><linearGradient id="t106" href="#cb"><stop offset=".2485" stop-color="#0058ff"/><stop offset=".3939" stop-color="#9e2fff"/><stop offset=".4773" stop-color="#ff14fc"/><stop offset=".5424" stop-color="#ff00bf"/></linearGradient><linearGradient id="t107" href="#cb"><stop offset=".2500" stop-color="#0056ff"/><stop offset=".4197" stop-color="#ba26ff"/><stop offset=".4803" stop-color="#ff12fc"/><stop offset=".5409" stop-color="#ff00c2"/></linearGradient><linearGradient id="t108" href="#cb"><stop offset=".2500" stop-color="#05f"/><stop offset=".4152" stop-color="#b226ff"/><stop offset=".4833" stop-color="#ff10fb"/><stop offset=".5379" stop-color="#ff00c7"/></linearGradient><linearGradient id="t109" href="#cb"><stop offset=".2500" stop-color="#0053ff"/><stop offset=".4091" stop-color="#a926ff"/><stop offset=".4848" stop-color="#ff0ffc"/><stop offset=".5364" stop-color="#ff00ca"/></linearGradient><linearGradient id="t110" href="#cb"><stop offset=".2500" stop-color="#0052ff"/><stop offset=".4015" stop-color="#9e28ff"/><stop offset=".4879" stop-color="#ff0dfc"/><stop offset=".5333" stop-color="#ff00cf"/></linearGradient><linearGradient id="t111" href="#cb"><stop offset=".2515" stop-color="#0050ff"/><stop offset=".4273" stop-color="#b91fff"/><stop offset=".4909" stop-color="#ff0bfb"/><stop offset=".5303" stop-color="#ff00d4"/></linearGradient><linearGradient id="t112" href="#cb"><stop offset=".2515" stop-color="#004eff"/><stop offset=".4227" stop-color="#b21fff"/><stop offset=".4924" stop-color="#ff0afc"/><stop offset=".5288" stop-color="#ff00d8"/></linearGradient><linearGradient id="t113" href="#cb"><stop offset=".2515" stop-color="#004dff"/><stop offset=".4152" stop-color="#a720ff"/><stop offset=".4955" stop-color="#ff08fc"/><stop offset=".5258" stop-color="#f0d"/></linearGradient><linearGradient id="t114" href="#cb"><stop offset=".2515" stop-color="#004cff"/><stop offset=".4076" stop-color="#9d21ff"/><stop offset=".4985" stop-color="#ff07fb"/><stop offset=".5242" stop-color="#ff00e1"/></linearGradient><linearGradient id="t115" href="#cb"><stop offset=".2530" stop-color="#004aff"/><stop offset=".4348" stop-color="#b919ff"/><stop offset=".5000" stop-color="#ff05fc"/><stop offset=".5212" stop-color="#ff00e6"/></linearGradient><linearGradient id="t116" href="#cb"><stop offset=".2530" stop-color="#0049ff"/><stop offset=".4288" stop-color="#b019ff"/><stop offset=".5030" stop-color="#ff04fc"/><stop offset=".5182" stop-color="#ff00ec"/></linearGradient><linearGradient id="t117" href="#cb"><stop offset=".2530" stop-color="#0047ff"/><stop offset=".4227" stop-color="#a81aff"/><stop offset=".5061" stop-color="#ff02fb"/><stop offset=".5167" stop-color="#ff00f0"/></linearGradient><linearGradient id="t118" href="#cb"><stop offset=".2545" stop-color="#0046ff"/><stop offset=".4470" stop-color="#bf12ff"/><stop offset=".5076" stop-color="#ff01fc"/><stop offset=".5136" stop-color="#ff00f6"/></linearGradient><linearGradient id="t119" href="#cb"><stop offset=".2545" stop-color="#04f"/><stop offset=".4424" stop-color="#b913ff"/><stop offset=".5106" stop-color="#ff00fc"/></linearGradient><linearGradient id="t120" href="#cb"><stop offset=".2545" stop-color="#0043ff"/><stop offset=".4364" stop-color="#b014ff"/><stop offset=".5091" stop-color="#fe00ff"/></linearGradient><linearGradient id="t121" href="#cb"><stop offset=".2545" stop-color="#0042ff"/><stop offset=".4303" stop-color="#a814ff"/><stop offset=".5061" stop-color="#f800ff"/></linearGradient><linearGradient id="t122" href="#cb"><stop offset=".2561" stop-color="#0040ff"/><stop offset=".4545" stop-color="#bf0dff"/><stop offset=".5045" stop-color="#f400ff"/></linearGradient><linearGradient id="t123" href="#cb"><stop offset=".2561" stop-color="#003fff"/><stop offset=".4500" stop-color="#b80dff"/><stop offset=".5015" stop-color="#e0f"/></linearGradient><linearGradient id="t124" href="#cb"><stop offset=".2561" stop-color="#003eff"/><stop offset=".4439" stop-color="#b00eff"/><stop offset=".4985" stop-color="#e800ff"/></linearGradient><linearGradient id="t125" href="#cb"><stop offset=".2561" stop-color="#003dff"/><stop offset=".4379" stop-color="#a80fff"/><stop offset=".4970" stop-color="#e400ff"/></linearGradient><linearGradient id="t126" href="#cb"><stop offset=".2576" stop-color="#003bff"/><stop offset=".4621" stop-color="#be08ff"/><stop offset=".4939" stop-color="#df00ff"/></linearGradient><linearGradient id="t127" href="#cb"><stop offset=".2576" stop-color="#003aff"/><stop offset=".4561" stop-color="#b609ff"/><stop offset=".4924" stop-color="#db00ff"/></linearGradient><linearGradient id="t128" href="#cb"><stop offset=".2576" stop-color="#0039ff"/><stop offset=".4515" stop-color="#b009ff"/><stop offset=".4894" stop-color="#d600ff"/></linearGradient><linearGradient id="t129" href="#cb"><stop offset=".2576" stop-color="#0038ff"/><stop offset=".4455" stop-color="#a80aff"/><stop offset=".4864" stop-color="#d000ff"/></linearGradient><linearGradient id="t130" href="#cb"><stop offset=".2591" stop-color="#0037ff"/><stop offset=".4697" stop-color="#be03ff"/><stop offset=".4848" stop-color="#cd00ff"/></linearGradient><linearGradient id="t131" href="#cb"><stop offset=".2591" stop-color="#0036ff"/><stop offset=".4636" stop-color="#b604ff"/><stop offset=".4818" stop-color="#c800ff"/></linearGradient><linearGradient id="t132" href="#cb"><stop offset=".2591" stop-color="#0035ff"/><stop offset=".4591" stop-color="#b004ff"/><stop offset=".4788" stop-color="#c300ff"/></linearGradient><linearGradient id="t133" href="#cb"><stop offset=".2606" stop-color="#03f"/><stop offset=".4773" stop-color="#c000ff"/></linearGradient><linearGradient id="t134" href="#cb"><stop offset=".2606" stop-color="#0032ff"/><stop offset=".4742" stop-color="#b0f"/></linearGradient><linearGradient id="t135" href="#cb"><stop offset=".2606" stop-color="#0031ff"/><stop offset=".4712" stop-color="#b600ff"/><stop offset=".4727" stop-color="#b800ff"/></linearGradient><linearGradient id="t136" href="#cb"><stop offset=".2606" stop-color="#0031ff"/><stop offset=".4652" stop-color="#af00ff"/><stop offset=".4697" stop-color="#b300ff"/></linearGradient><linearGradient id="t137" href="#cb"><stop offset=".2621" stop-color="#002fff"/><stop offset=".4667" stop-color="#ae00ff"/></linearGradient><linearGradient id="t138" href="#cb"><stop offset=".2621" stop-color="#002eff"/><stop offset=".4652" stop-color="#ab00ff"/></linearGradient><linearGradient id="t139" href="#cb"><stop offset=".2621" stop-color="#002dff"/><stop offset=".4621" stop-color="#a700ff"/></linearGradient><linearGradient id="t140" href="#cb"><stop offset=".2621" stop-color="#002dff"/><stop offset=".4606" stop-color="#a400ff"/></linearGradient><linearGradient id="t141" href="#cb"><stop offset=".2636" stop-color="#002bff"/><stop offset=".4576" stop-color="#a000ff"/></linearGradient><linearGradient id="t142" href="#cb"><stop offset=".2636" stop-color="#002aff"/><stop offset=".4545" stop-color="#9c00ff"/></linearGradient><linearGradient id="t143" href="#cb"><stop offset=".2636" stop-color="#002aff"/><stop offset=".4530" stop-color="#90f"/></linearGradient><linearGradient id="t144" href="#cb"><stop offset=".2636" stop-color="#0029ff"/><stop offset=".4500" stop-color="#9500ff"/></linearGradient><linearGradient id="t145" href="#cb"><stop offset=".2652" stop-color="#0028ff"/><stop offset=".4470" stop-color="#9100ff"/></linearGradient><linearGradient id="t146" href="#cb"><stop offset=".2652" stop-color="#0027ff"/><stop offset=".4455" stop-color="#8e00ff"/></linearGradient><linearGradient id="t147" href="#cb"><stop offset=".2652" stop-color="#0026ff"/><stop offset=".4424" stop-color="#8a00ff"/></linearGradient><linearGradient id="t148" href="#cb"><stop offset=".2667" stop-color="#0025ff"/><stop offset=".4409" stop-color="#80f"/></linearGradient><linearGradient id="t149" href="#cb"><stop offset=".2667" stop-color="#0024ff"/><stop offset=".4379" stop-color="#8400ff"/></linearGradient><linearGradient id="t150" href="#cb"><stop offset=".2667" stop-color="#0023ff"/><stop offset=".4348" stop-color="#8000ff"/></linearGradient><linearGradient id="t151" href="#cb"><stop offset=".2667" stop-color="#0023ff"/><stop offset=".4333" stop-color="#7e00ff"/></linearGradient><linearGradient id="t152" href="#cb"><stop offset=".2682" stop-color="#02f"/><stop offset=".4303" stop-color="#7a00ff"/></linearGradient><linearGradient id="t153" href="#cb"><stop offset=".2682" stop-color="#0021ff"/><stop offset=".4288" stop-color="#7800ff"/></linearGradient><linearGradient id="t154" href="#cb"><stop offset=".2682" stop-color="#0020ff"/><stop offset=".4258" stop-color="#7400ff"/></linearGradient><linearGradient id="t155" href="#cb"><stop offset=".2682" stop-color="#001fff"/><stop offset=".4227" stop-color="#7100ff"/></linearGradient><linearGradient id="t156" href="#cb"><stop offset=".2697" stop-color="#001eff"/><stop offset=".4212" stop-color="#6f00ff"/></linearGradient><linearGradient id="t157" href="#cb"><stop offset=".2697" stop-color="#001eff"/><stop offset=".4182" stop-color="#6b00ff"/></linearGradient><linearGradient id="t158" href="#cb"><stop offset=".2697" stop-color="#001dff"/><stop offset=".4152" stop-color="#6800ff"/></linearGradient><linearGradient id="t159" href="#cb"><stop offset=".2697" stop-color="#001cff"/><stop offset=".4136" stop-color="#60f"/></linearGradient><linearGradient id="t160" href="#cb"><stop offset=".2712" stop-color="#001bff"/><stop offset=".4106" stop-color="#6300ff"/></linearGradient><linearGradient id="t161" href="#cb"><stop offset=".2712" stop-color="#001bff"/><stop offset=".4091" stop-color="#6100ff"/></linearGradient><linearGradient id="t162" href="#cb"><stop offset=".2712" stop-color="#001aff"/><stop offset=".4061" stop-color="#5e00ff"/></linearGradient><linearGradient id="t163" href="#cb"><stop offset=".2727" stop-color="#0019ff"/><stop offset=".4030" stop-color="#5a00ff"/></linearGradient><linearGradient id="t164" href="#cb"><stop offset=".2727" stop-color="#0018ff"/><stop offset=".4015" stop-color="#5800ff"/></linearGradient><linearGradient id="t165" href="#cb"><stop offset=".2727" stop-color="#0018ff"/><stop offset=".3985" stop-color="#50f"/></linearGradient><linearGradient id="t166" href="#cb"><stop offset=".2727" stop-color="#0017ff"/><stop offset=".3970" stop-color="#5400ff"/></linearGradient><linearGradient id="t167" href="#cb"><stop offset=".2742" stop-color="#0016ff"/><stop offset=".3939" stop-color="#5100ff"/></linearGradient><linearGradient id="t168" href="#cb"><stop offset=".2742" stop-color="#0016ff"/><stop offset=".3909" stop-color="#4e00ff"/></linearGradient><linearGradient id="t169" href="#cb"><stop offset=".2742" stop-color="#0015ff"/><stop offset=".3894" stop-color="#4c00ff"/></linearGradient><linearGradient id="t170" href="#cb"><stop offset=".2742" stop-color="#0015ff"/><stop offset=".3864" stop-color="#4900ff"/></linearGradient><linearGradient id="t171" href="#cb"><stop offset=".2758" stop-color="#0014ff"/><stop offset=".3833" stop-color="#4600ff"/></linearGradient><linearGradient id="t172" href="#cb"><stop offset=".2758" stop-color="#0013ff"/><stop offset=".3818" stop-color="#4500ff"/></linearGradient><linearGradient id="t173" href="#cb"><stop offset=".2758" stop-color="#0013ff"/><stop offset=".3788" stop-color="#4200ff"/></linearGradient><linearGradient id="t174" href="#cb"><stop offset=".2758" stop-color="#0012ff"/><stop offset=".3773" stop-color="#4000ff"/></linearGradient><linearGradient id="t175" href="#cb"><stop offset=".2773" stop-color="#01f"/><stop offset=".3742" stop-color="#3e00ff"/></linearGradient><linearGradient id="t176" href="#cb"><stop offset=".2773" stop-color="#01f"/><stop offset=".3712" stop-color="#3b00ff"/></linearGradient><linearGradient id="t177" href="#cb"><stop offset=".2773" stop-color="#0010ff"/><stop offset=".3697" stop-color="#3900ff"/></linearGradient><linearGradient id="t178" href="#cb"><stop offset=".2788" stop-color="#000fff"/><stop offset=".3667" stop-color="#3700ff"/></linearGradient><linearGradient id="t179" href="#cb"><stop offset=".2788" stop-color="#000fff"/><stop offset=".3652" stop-color="#3500ff"/></linearGradient><linearGradient id="t180" href="#cb"><stop offset=".2788" stop-color="#000eff"/><stop offset=".3621" stop-color="#30f"/></linearGradient><linearGradient id="t181" href="#cb"><stop offset=".2788" stop-color="#000eff"/><stop offset=".3591" stop-color="#3000ff"/></linearGradient><linearGradient id="t182" href="#cb"><stop offset=".2803" stop-color="#000dff"/><stop offset=".3576" stop-color="#2f00ff"/></linearGradient><linearGradient id="t183" href="#cb"><stop offset=".2803" stop-color="#000cff"/><stop offset=".3545" stop-color="#2c00ff"/></linearGradient><linearGradient id="t184" href="#cb"><stop offset=".2803" stop-color="#000cff"/><stop offset=".3515" stop-color="#2a00ff"/></linearGradient><linearGradient id="t185" href="#cb"><stop offset=".2803" stop-color="#000bff"/><stop offset=".3500" stop-color="#2900ff"/></linearGradient><linearGradient id="t186" href="#cb"><stop offset=".2818" stop-color="#000bff"/><stop offset=".3470" stop-color="#2600ff"/></linearGradient><linearGradient id="t187" href="#cb"><stop offset=".2818" stop-color="#000aff"/><stop offset=".3455" stop-color="#2500ff"/></linearGradient><linearGradient id="t188" href="#cb"><stop offset=".2818" stop-color="#000aff"/><stop offset=".3424" stop-color="#2300ff"/></linearGradient><linearGradient id="t189" href="#cb"><stop offset=".2818" stop-color="#0009ff"/><stop offset=".3394" stop-color="#2000ff"/></linearGradient><linearGradient id="t190" href="#cb"><stop offset=".2833" stop-color="#0009ff"/><stop offset=".3379" stop-color="#1f00ff"/></linearGradient><linearGradient id="t191" href="#cb"><stop offset=".2833" stop-color="#0008ff"/><stop offset=".3348" stop-color="#1d00ff"/></linearGradient><linearGradient id="t192" href="#cb"><stop offset=".2833" stop-color="#0008ff"/><stop offset=".3333" stop-color="#1c00ff"/></linearGradient><linearGradient id="t193" href="#cb"><stop offset=".2848" stop-color="#0007ff"/><stop offset=".3303" stop-color="#1900ff"/></linearGradient><linearGradient id="t194" href="#cb"><stop offset=".2848" stop-color="#0007ff"/><stop offset=".3273" stop-color="#1700ff"/></linearGradient><linearGradient id="t195" href="#cb"><stop offset=".2848" stop-color="#0006ff"/><stop offset=".3258" stop-color="#1600ff"/></linearGradient><linearGradient id="t196" href="#cb"><stop offset=".2848" stop-color="#0006ff"/><stop offset=".3227" stop-color="#1400ff"/></linearGradient><linearGradient id="t197" href="#cb"><stop offset=".2864" stop-color="#0005ff"/><stop offset=".3197" stop-color="#1200ff"/></linearGradient><linearGradient id="t198" href="#cb"><stop offset=".2864" stop-color="#0005ff"/><stop offset=".3182" stop-color="#10f"/></linearGradient><linearGradient id="t199" href="#cb"><stop offset=".2864" stop-color="#0004ff"/><stop offset=".3152" stop-color="#0f00ff"/></linearGradient><linearGradient id="t200" href="#cb"><stop offset=".2864" stop-color="#0004ff"/><stop offset=".3136" stop-color="#0d00ff"/></linearGradient><linearGradient id="t201" href="#cb"><stop offset=".2879" stop-color="#0003ff"/><stop offset=".3106" stop-color="#0c00ff"/></linearGradient><linearGradient id="t202" href="#cb"><stop offset=".2879" stop-color="#0003ff"/><stop offset=".3076" stop-color="#0a00ff"/></linearGradient><linearGradient id="t203" href="#cb"><stop offset=".2879" stop-color="#0002ff"/><stop offset=".3061" stop-color="#0800ff"/></linearGradient><linearGradient id="t204" href="#cb"><stop offset=".2879" stop-color="#0002ff"/><stop offset=".3030" stop-color="#0700ff"/></linearGradient><linearGradient id="t205" href="#cb"><stop offset=".2894" stop-color="#0001ff"/><stop offset=".3015" stop-color="#0500ff"/></linearGradient><linearGradient id="t206" href="#cb"><stop offset=".2894" stop-color="#0001ff"/><stop offset=".2985" stop-color="#0400ff"/></linearGradient><linearGradient id="t207" href="#cb"><stop offset=".2894" stop-color="#00f"/><stop offset=".2955" stop-color="#0200ff"/></linearGradient><clipPath id="locus"><path d="M1531.2 740.9 L1525.4 740.1 L1520.8 736.1 L1516.7 731.8 L1512.4 727.4 L1508.1 723.2 L1503.8 718.9 L1499.5 714.6 L1495.2 710.3 L1490.9 706.0 L1486.7 701.7 L1482.4 697.5 L1478.1 693.1 L1473.9 688.8 L1469.7 684.4 L1465.6 680.0 L1461.5 675.5 L1457.5 671.0 L1453.6 666.5 L1449.7 661.9 L1445.8 657.2 L1442.1 652.5 L1438.4 647.8 L1434.7 643.0 L1431.1 638.2 L1427.6 633.3 L1424.2 628.4 L1420.8 623.5 L1417.5 618.5 L1414.2 613.5 L1410.9 608.5 L1407.7 603.5 L1404.5 598.4 L1401.4 593.3 L1398.3 588.3 L1395.2 583.1 L1392.1 578.0 L1389.1 572.9 L1386.1 567.7 L1383.2 562.6 L1380.2 557.4 L1377.3 552.2 L1374.5 547.0 L1371.6 541.7 L1368.8 536.5 L1366.0 531.2 L1363.3 526.0 L1360.5 520.7 L1357.8 515.4 L1355.1 510.1 L1352.4 504.8 L1349.8 499.5 L1347.1 494.2 L1344.5 488.9 L1341.9 483.5 L1339.3 478.2 L1336.7 472.9 L1334.1 467.5 L1331.5 462.2 L1329.0 456.8 L1326.5 451.4 L1324.0 446.0 L1321.5 440.7 L1319.0 435.3 L1316.6 429.8 L1314.2 424.4 L1311.9 419.0 L1309.5 413.6 L1307.2 408.1 L1305.0 402.6 L1302.7 397.1 L1300.5 391.7 L1298.4 386.1 L1296.3 380.6 L1294.2 375.1 L1292.1 369.6 L1290.1 364.0 L1288.1 358.5 L1286.1 352.9 L1284.2 347.3 L1282.3 341.7 L1280.4 336.1 L1278.5 330.5 L1276.7 324.9 L1274.9 319.3 L1273.1 313.7 L1271.4 308.0 L1269.7 302.4 L1268.1 296.7 L1266.4 291.1 L1264.9 285.4 L1263.4 279.7 L1261.9 274.0 L1260.5 268.3 L1259.1 262.5 L1257.8 256.8 L1256.6 251.1 L1255.5 245.3 L1254.5 239.5 L1253.5 233.7 L1252.7 227.9 L1252.0 222.0 L1251.5 216.2 L1251.1 210.3 L1251.0 204.5 L1251.2 198.6 L1251.7 192.7 L1252.7 186.9 L1254.3 181.2 L1256.5 175.7 L1259.7 170.5 L1263.8 166.1 L1268.8 162.6 L1274.5 160.0 L1280.6 158.5 L1286.8 157.6 L1293.1 157.1 L1299.4 156.9 L1305.6 156.8 L1311.9 156.8 L1318.2 157.0 L1324.5 157.2 L1330.7 157.6 L1337.0 158.0 L1343.3 158.5 L1349.5 159.0 L1355.8 159.6 L1362.0 160.3 L1368.2 161.0 L1374.5 161.7 L1380.7 162.5 L1386.9 163.2 L1393.1 164.0 L1399.3 164.8 L1405.6 165.6 L1411.8 166.4 L1418.0 167.3 L1424.2 168.1 L1430.4 168.9 L1436.6 169.8 L1442.9 170.6 L1449.1 171.5 L1455.3 172.3 L1461.5 173.2 L1467.7 174.0 L1473.9 174.9 L1480.1 175.7 L1486.3 176.6 L1492.5 177.5 L1498.7 178.3 L1505.0 179.2 L1511.2 180.1 L1517.4 180.9 L1523.6 181.8 L1529.8 182.7 L1536.0 183.5 L1542.2 184.4 L1548.4 185.3 L1554.6 186.1 L1560.8 187.0 L1567.0 187.9 L1573.2 188.7 L1579.5 189.6 L1585.7 190.5 L1591.9 191.3 L1598.1 192.2 L1604.3 193.1 L1610.5 193.9 L1616.7 194.8 L1622.9 195.7 L1629.1 196.5 L1635.3 197.4 L1641.5 198.3 L1647.8 199.1 L1654.0 200.0 L1660.2 200.9 L1666.4 201.8 L1672.6 202.6 L1678.8 203.5 L1685.0 204.4 L1691.2 205.2 L1697.4 206.1 L1703.6 207.0 L1709.8 207.8 L1716.1 208.7 L1722.3 209.5 L1728.5 210.4 L1734.7 211.3 L1740.9 212.1 L1747.1 213.0 L1753.3 213.8 L1759.5 214.7 L1765.7 215.6 L1771.9 216.5 L1778.1 217.3 L1784.4 218.2 L1790.6 219.1 L1796.8 219.9 L1803.0 220.8 L1809.2 221.7 L1815.4 222.5 L1821.6 223.4 L1827.8 224.3 L1834.0 225.1 L1840.2 226.0 L1846.4 226.9 L1852.6 227.7 L1858.9 228.6 L1865.1 229.5 L1871.3 230.3 L1877.5 231.2 L1883.7 232.1 L1889.9 232.9 L1896.1 233.8 L1902.3 234.7 L1908.5 235.5 L1914.7 236.4 L1920.9 237.3 L1927.2 238.1 L1933.4 239.0Z"/></clipPath><clipPath id="tri"><path d="M1743.9 222.2 L1386.6 181.6 L1441.9 596.1Z"/></clipPath><clipPath id="plotclip"><rect x="1250" y="145" width="658" height="612"/></clipPath>
<linearGradient id="insg" x1="0" y1="0" x2="1" y2="1"><stop offset="0" stop-color="#ff6a10"/><stop offset="1" stop-color="#ff3010"/></linearGradient>
<linearGradient id="tileg" x1="0" y1="0" x2="0" y2="1"><stop offset="0" stop-color="#8e8e8e"/><stop offset=".5" stop-color="#777"/><stop offset="1" stop-color="#555"/></linearGradient>
<linearGradient id="tilesel" x1="0" y1="0" x2="0" y2="1"><stop offset="0" stop-color="#2a2a2a"/><stop offset="1" stop-color="#0c0c0c"/></linearGradient>
<clipPath id="stripclip"><rect x="200.5" y="1104" width="1396" height="56"/></clipPath>
<linearGradient id="navg" x1="0" y1="0" x2="0" y2="1"><stop offset="0" stop-color="#b4b4b4"/><stop offset=".5" stop-color="#8c8c8c"/><stop offset="1" stop-color="#666"/></linearGradient>
<linearGradient id="smg" x1="0" y1="0" x2="0" y2="1"><stop offset="0" stop-color="#7e7e7e"/><stop offset="1" stop-color="#565656"/></linearGradient>
<linearGradient id="smd" x1="0" y1="0" x2="0" y2="1"><stop offset="0" stop-color="#2c2c2c"/><stop offset="1" stop-color="#3a3a3a"/></linearGradient>
</defs>
<g id="chrome-bg">
<rect x="0.0" y="0.0" width="1920.0" height="1170.0" fill="#333" />
<rect x="0.0" y="0.0" width="1920.0" height="23.0" fill="#00b7c3" />
<rect x="0.0" y="23.0" width="1920.0" height="65.5" fill="#222" />
<path d="M0 58 H195.7 Q199.8 58 199.8 62 V1170 H0Z" fill="#565656"/>
</g>
<g id="titlebar">
<circle cx="10.1" cy="10.9" r="7.5" fill="#000" stroke="url(#icoring)" stroke-width="1"/>
<text transform="translate(10.1 13.4) scale(0.950 1)" font-size="6.5" fill="#fff" text-anchor="middle" font-weight="bold" >CM</text>
<text transform="translate(23.5 15.8) scale(0.933 1)" font-size="12.4" fill="#000" >CalMAN 2019 CalMAN Ultimate for Business 133 Days Remaining</text>
<line x1="1799.0" y1="10.5" x2="1809.0" y2="10.5" stroke="#000" stroke-width="1" />
<path d="M1844.5 7.5 h7 v7 h-7z M1846.5 7.5 v-2 h7 v7 h-2" fill="none" stroke="#000" stroke-width="1"/>
<path d="M1890 5.5 l10 10 M1900 5.5 l-10 10" stroke="#000" stroke-width="1.1" fill="none"/>
</g>
<g id="calman-menu">
<path d="M0 23 H183 V48 Q183 52.5 178.5 52.5 H4.5 Q0 52.5 0 48Z" fill="url(#redbtn)" stroke="#7a1014" stroke-width="0.8"/>
<text transform="translate(13.2 47.6) scale(1.077 1)" font-size="29.5" fill="#fff" font-weight="bold" letter-spacing="1.2">CalMAN</text>
<circle cx="166" cy="38.2" r="9.6" fill="url(#reddot)"/>
<path d="M160.8 35.6 H171.2 L166 41.8Z" fill="#fff"/>
</g>
<rect id="rainbow-line" x="190" y="35.4" width="1730" height="5.2" fill="url(#rainbow)"/>
<g id="sidebar">
<circle cx="18.6" cy="72" r="9.6" fill="url(#knob)"/><circle cx="18.6" cy="71.4" r="3.3" fill="url(#ball)"/>
<circle cx="181" cy="72" r="9.6" fill="url(#knob)"/><path d="M184 67 V76.4 L178 71.7Z" fill="#fff"/>
<text transform="translate(8.8 101.0) scale(0.924 1)" font-size="13.2" fill="#eee" >SDR Toolkit</text>
<rect x="9.2" y="104.8" width="181.6" height="250.6" fill="url(#treebg)" stroke="#444" stroke-width="0.6"/>
<text transform="translate(29.2 123.8) scale(0.948 1)" font-size="11.2" fill="#f4f4f4" font-weight="bold" >Welcome</text>
<text transform="translate(42.3 139.8) scale(0.973 1)" font-size="11.2" fill="#f4f4f4" >Welcome</text>
<text transform="translate(42.3 154.2) scale(0.979 1)" font-size="11.2" fill="#f4f4f4" >Options</text>
<text transform="translate(29.2 169.0) scale(0.877 1)" font-size="11.2" fill="#f4f4f4" font-weight="bold" >Analysis</text>
<text transform="translate(42.3 185.0) scale(0.936 1)" font-size="11.2" fill="#f4f4f4" >Dynamic Range</text>
<text transform="translate(42.3 199.2) scale(0.939 1)" font-size="11.2" fill="#f4f4f4" >Grayscale - 2pt</text>
<text transform="translate(42.3 214.0) scale(0.965 1)" font-size="11.2" fill="#f4f4f4" >Grayscale - Multi</text>
<text transform="translate(42.3 229.1) scale(0.969 1)" font-size="11.2" fill="#f4f4f4" >Color Gamut</text>
<text transform="translate(42.3 242.9) scale(0.873 1)" font-size="11.2" fill="#f4f4f4" >3D LUT</text>
<rect x="40.7" y="247.2" width="66.3" height="13.6" fill="#dcdcdc" />
<text transform="translate(42.3 258.0) scale(0.936 1)" font-size="11.2" fill="#333" >ColorChecker</text>
<text transform="translate(42.3 272.9) scale(0.949 1)" font-size="11.2" fill="#f4f4f4" >Saturation Sweeps</text>
<text transform="translate(42.3 287.2) scale(0.940 1)" font-size="11.2" fill="#f4f4f4" >Luminance Sweeps</text>
<text transform="translate(42.3 302.0) scale(0.984 1)" font-size="11.2" fill="#f4f4f4" >Screen Uniformity</text>
<text transform="translate(42.3 316.9) scale(0.971 1)" font-size="11.2" fill="#f4f4f4" >Screen Angularity</text>
<text transform="translate(42.3 331.0) scale(0.956 1)" font-size="11.2" fill="#f4f4f4" >Screen Stability</text>
<text transform="translate(42.3 345.6) scale(0.950 1)" font-size="11.2" fill="#f4f4f4" >Spectral Power Dist.</text>
<path d="M23 121.5 l-3.2 0 l3.2 -3.2z M23 166.7 l-3.2 0 l3.2 -3.2z" fill="#555"/>
</g>
<g id="tabs">
<path d="M200.8 88.5 V62.5 Q200.8 58.8 204.5 58.8 H288 Q291.6 58.8 291.6 62.5 V88.5Z" fill="url(#tabg)" stroke="#6a6a6a" stroke-width="0.9"/>
<line x1="258.2" y1="59.0" x2="258.2" y2="88.5" stroke="#6a6a6a" stroke-width="0.9" />
<text transform="translate(206.4 78.0) scale(1.016 1)" font-size="11.6" fill="#e4e4e4" >History 1</text>
<circle cx="274" cy="74.3" r="9.3" fill="#3c3c3c"/>
<text transform="translate(274.0 78.6) scale(1.000 1)" font-size="12" fill="#888" text-anchor="middle" >+</text>
</g>
<g id="devices">
<path d="M1427.7 88.5 V61.5 Q1427.7 58.3 1430.9 58.3 H1567.5 Q1570.7 58.3 1570.7 61.5 V88.5Z" fill="url(#devg)"/>
<rect x="1427.7" y="59.5" width="4.6" height="29.0" fill="#22e022" />
<path d="M1576.7 88.5 V61.5 Q1576.7 58.3 1579.9 58.3 H1703.5 Q1706.7 58.3 1706.7 61.5 V88.5Z" fill="url(#devg)"/>
<rect x="1576.7" y="59.5" width="4.6" height="29.0" fill="#e8e800" />
<path d="M1712.7 88.5 V61.5 Q1712.7 58.3 1715.9 58.3 H1852.8 Q1856.0 58.3 1856.0 61.5 V88.5Z" fill="url(#devg)"/>
<rect x="1712.7" y="59.5" width="4.6" height="29.0" fill="#e8e800" />
<text transform="translate(1436.8 69.8) scale(0.964 1)" font-size="11" fill="#fff" >X-Rite i1Pro 2</text>
<text transform="translate(1436.8 83.8) scale(1.010 1)" font-size="11" fill="#fff" >Direct View</text>
<text transform="translate(1585.3 69.8) scale(0.953 1)" font-size="11" fill="#fff" >Source</text>
<text transform="translate(1721.3 69.8) scale(0.992 1)" font-size="11" fill="#fff" >Direct Display Control</text>
<circle cx="1515.3" cy="73" r="9.5" fill="url(#knob)"/>
<path d="M1510.3 71.4 h10 l-5 5.6z" fill="#fff"/>
<circle cx="1690.3" cy="73" r="9.5" fill="url(#knob)"/>
<path d="M1685.3 71.4 h10 l-5 5.6z" fill="#fff"/>
<circle cx="1839.8" cy="73" r="9.5" fill="url(#knob)"/>
<path d="M1834.8 71.4 h10 l-5 5.6z" fill="#fff"/>
<line x1="1535.3" y1="61.0" x2="1535.3" y2="88.0" stroke="#3c3c3c" stroke-width="1.2" />
<circle cx="1555" cy="72.7" r="12.2" fill="#0000ff" stroke="#e8e8e8" stroke-width="1.2"/>
<text transform="translate(1555.0 76.3) scale(0.950 1)" font-size="9.6" fill="#fff" text-anchor="middle" >235</text>
<rect x="1859.5" y="58.3" width="33" height="28.2" rx="4" fill="url(#btng)" stroke="#d8d8d8" stroke-width="1"/>
<rect x="1893.2" y="58.3" width="30" height="28.2" rx="4" fill="url(#btng)" stroke="#d8d8d8" stroke-width="1"/>
<circle cx="1876" cy="72" r="9.6" fill="url(#knob)"/>
<rect x="-1.15" y="-7.1" width="2.3" height="2.6" fill="#d8d8d8" transform="translate(1876 72) rotate(0)"/><rect x="-1.15" y="-7.1" width="2.3" height="2.6" fill="#d8d8d8" transform="translate(1876 72) rotate(45)"/><rect x="-1.15" y="-7.1" width="2.3" height="2.6" fill="#d8d8d8" transform="translate(1876 72) rotate(90)"/><rect x="-1.15" y="-7.1" width="2.3" height="2.6" fill="#d8d8d8" transform="translate(1876 72) rotate(135)"/><rect x="-1.15" y="-7.1" width="2.3" height="2.6" fill="#d8d8d8" transform="translate(1876 72) rotate(180)"/><rect x="-1.15" y="-7.1" width="2.3" height="2.6" fill="#d8d8d8" transform="translate(1876 72) rotate(225)"/><rect x="-1.15" y="-7.1" width="2.3" height="2.6" fill="#d8d8d8" transform="translate(1876 72) rotate(270)"/><rect x="-1.15" y="-7.1" width="2.3" height="2.6" fill="#d8d8d8" transform="translate(1876 72) rotate(315)"/>
<circle cx="1876" cy="72" r="4.3" fill="none" stroke="#d8d8d8" stroke-width="1.8"/>
<circle cx="1907" cy="72" r="9.6" fill="url(#knob)"/><path d="M1910 67.2 V77.2 L1903.6 72.2Z" fill="#fff"/>
</g>
<g id="page-heading">
<text transform="translate(209.4 150.0) scale(0.778 1)" font-size="51.8" fill="#f2f2f2"  stroke="#f2f2f2" stroke-width="0.8">ColorChecker</text>
<text transform="translate(239.2 198.3) scale(0.841 1)" font-size="20.3" fill="#f2f2f2"  stroke="#f2f2f2" stroke-width="0.4">Display analysis is performed with the X-Rite/</text>
<text transform="translate(239.2 226.5) scale(0.816 1)" font-size="20.3" fill="#f2f2f2"  stroke="#f2f2f2" stroke-width="0.4">Pantone ColorChecker</text>
<text transform="translate(407.3 220.0) scale(0.987 1)" font-size="11" fill="#f2f2f2" >®</text>
<text transform="translate(420.6 226.5) scale(0.842 1)" font-size="20.3" fill="#f2f2f2"  stroke="#f2f2f2" stroke-width="0.4">target colors.</text>
<text transform="translate(314.2 285.0) scale(0.838 1)" font-size="24.2" fill="#f2f2f2"  stroke="#f2f2f2" stroke-width="0.4">dE Formula:</text>
<rect x="432.6" y="260.3" width="153.6" height="31.6" fill="url(#ddg)" stroke="#262626" stroke-width="1"/>
<text transform="translate(438.5 285.6) scale(0.875 1)" font-size="18.3" fill="#f2f2f2"  stroke="#f2f2f2" stroke-width="0.4">2000</text>
<path d="M571.4 273.2 h8.4 l-4.2 6.4z" fill="#000"/>
</g>
<g id="deltaE-chart">
<text transform="translate(394.3 326.0) scale(0.841 1)" font-size="17.6" fill="#ccc" text-anchor="middle"  stroke="#ccc" stroke-width="0.25">DeltaE 2000</text>
<rect x="221.0" y="331.6" width="345.7" height="414.2" fill="#232323" />
<line x1="266.9" y1="331.6" x2="266.9" y2="745.8" stroke="#8a8a8a" stroke-width="1.1" />
<line x1="312.7" y1="331.6" x2="312.7" y2="745.8" stroke="#8a8a8a" stroke-width="1.1" />
<line x1="358.6" y1="331.6" x2="358.6" y2="745.8" stroke="#8a8a8a" stroke-width="1.1" />
<line x1="404.4" y1="331.6" x2="404.4" y2="745.8" stroke="#8a8a8a" stroke-width="1.1" />
<line x1="450.3" y1="331.6" x2="450.3" y2="745.8" stroke="#8a8a8a" stroke-width="1.1" />
<line x1="496.2" y1="331.6" x2="496.2" y2="745.8" stroke="#8a8a8a" stroke-width="1.1" />
<line x1="542.0" y1="331.6" x2="542.0" y2="745.8" stroke="#8a8a8a" stroke-width="1.1" />
<rect x="221.6" y="738.0" width="162.1" height="4.7" fill="#ffffff" stroke="#000" stroke-width="1.5"/>
<rect x="222.3" y="738.8" width="160.7" height="3.2" fill="url(#shade)"/>
<rect x="222.3" y="738.8" width="160.7" height="3.2" fill="url(#gloss)"/>
<rect x="221.6" y="729.5" width="153.4" height="4.7" fill="#ececec" stroke="#000" stroke-width="1.5"/>
<rect x="222.3" y="730.3" width="152.0" height="3.2" fill="url(#shade)"/>
<rect x="222.3" y="730.3" width="152.0" height="3.2" fill="url(#gloss)"/>
<rect x="221.6" y="720.9" width="142.9" height="4.7" fill="#dcdcdc" stroke="#000" stroke-width="1.5"/>
<rect x="222.3" y="721.7" width="141.5" height="3.2" fill="url(#shade)"/>
<rect x="222.3" y="721.7" width="141.5" height="3.2" fill="url(#gloss)"/>
<rect x="221.6" y="710.9" width="129.3" height="4.7" fill="#c8c8c8" stroke="#000" stroke-width="1.5"/>
<rect x="222.3" y="711.7" width="127.9" height="3.2" fill="url(#shade)"/>
<rect x="222.3" y="711.7" width="127.9" height="3.2" fill="url(#gloss)"/>
<rect x="221.6" y="702.6" width="111.9" height="4.7" fill="#acacac" stroke="#000" stroke-width="1.5"/>
<rect x="222.3" y="703.4" width="110.5" height="3.2" fill="url(#shade)"/>
<rect x="222.3" y="703.4" width="110.5" height="3.2" fill="url(#gloss)"/>
<rect x="221.6" y="694.2" width="17.0" height="4.7" fill="#101010" stroke="#000" stroke-width="1.5"/>
<rect x="222.3" y="695.0" width="15.6" height="3.2" fill="url(#shade)"/>
<rect x="222.3" y="695.0" width="15.6" height="3.2" fill="url(#gloss)"/>
<rect x="221.6" y="685.5" width="60.8" height="4.7" fill="#8a5c4a" stroke="#000" stroke-width="1.5"/>
<rect x="222.3" y="686.3" width="59.4" height="3.2" fill="url(#shade)"/>
<rect x="222.3" y="686.3" width="59.4" height="3.2" fill="url(#gloss)"/>
<rect x="221.6" y="677.1" width="71.3" height="4.7" fill="#d8a48e" stroke="#000" stroke-width="1.5"/>
<rect x="222.3" y="677.9" width="69.9" height="3.2" fill="url(#shade)"/>
<rect x="222.3" y="677.9" width="69.9" height="3.2" fill="url(#gloss)"/>
<rect x="221.6" y="668.4" width="56.4" height="4.7" fill="#6488b4" stroke="#000" stroke-width="1.5"/>
<rect x="222.3" y="669.2" width="55.0" height="3.2" fill="url(#shade)"/>
<rect x="222.3" y="669.2" width="55.0" height="3.2" fill="url(#gloss)"/>
<rect x="221.6" y="658.4" width="33.9" height="4.7" fill="#5c7844" stroke="#000" stroke-width="1.5"/>
<rect x="222.3" y="659.1" width="32.5" height="3.2" fill="url(#shade)"/>
<rect x="222.3" y="659.1" width="32.5" height="3.2" fill="url(#gloss)"/>
<rect x="221.6" y="650.0" width="47.5" height="4.7" fill="#8c88c4" stroke="#000" stroke-width="1.5"/>
<rect x="222.3" y="650.8" width="46.1" height="3.2" fill="url(#shade)"/>
<rect x="222.3" y="650.8" width="46.1" height="3.2" fill="url(#gloss)"/>
<rect x="221.6" y="641.4" width="60.5" height="4.7" fill="#68c4ac" stroke="#000" stroke-width="1.5"/>
<rect x="222.3" y="642.2" width="59.1" height="3.2" fill="url(#shade)"/>
<rect x="222.3" y="642.2" width="59.1" height="3.2" fill="url(#gloss)"/>
<rect x="221.6" y="632.9" width="22.7" height="4.7" fill="#ec8420" stroke="#000" stroke-width="1.5"/>
<rect x="222.3" y="633.7" width="21.3" height="3.2" fill="url(#shade)"/>
<rect x="222.3" y="633.7" width="21.3" height="3.2" fill="url(#gloss)"/>
<rect x="221.6" y="624.1" width="60.1" height="4.7" fill="#4c60b0" stroke="#000" stroke-width="1.5"/>
<rect x="222.3" y="624.9" width="58.7" height="3.2" fill="url(#shade)"/>
<rect x="222.3" y="624.9" width="58.7" height="3.2" fill="url(#gloss)"/>
<rect x="221.6" y="614.1" width="38.8" height="4.7" fill="#d85468" stroke="#000" stroke-width="1.5"/>
<rect x="222.3" y="614.9" width="37.4" height="3.2" fill="url(#shade)"/>
<rect x="222.3" y="614.9" width="37.4" height="3.2" fill="url(#gloss)"/>
<rect x="221.6" y="605.6" width="88.7" height="4.7" fill="#6c4080" stroke="#000" stroke-width="1.5"/>
<rect x="222.3" y="606.4" width="87.3" height="3.2" fill="url(#shade)"/>
<rect x="222.3" y="606.4" width="87.3" height="3.2" fill="url(#gloss)"/>
<rect x="221.6" y="597.0" width="25.7" height="4.7" fill="#a4c840" stroke="#000" stroke-width="1.5"/>
<rect x="222.3" y="597.8" width="24.3" height="3.2" fill="url(#shade)"/>
<rect x="222.3" y="597.8" width="24.3" height="3.2" fill="url(#gloss)"/>
<rect x="221.6" y="588.9" width="30.7" height="4.7" fill="#f0a828" stroke="#000" stroke-width="1.5"/>
<rect x="222.3" y="589.7" width="29.3" height="3.2" fill="url(#shade)"/>
<rect x="222.3" y="589.7" width="29.3" height="3.2" fill="url(#gloss)"/>
<rect x="221.6" y="580.4" width="64.9" height="4.7" fill="#3848a8" stroke="#000" stroke-width="1.5"/>
<rect x="222.3" y="581.1" width="63.5" height="3.2" fill="url(#shade)"/>
<rect x="222.3" y="581.1" width="63.5" height="3.2" fill="url(#gloss)"/>
<rect x="221.6" y="571.6" width="22.5" height="4.7" fill="#48a850" stroke="#000" stroke-width="1.5"/>
<rect x="222.3" y="572.4" width="21.1" height="3.2" fill="url(#shade)"/>
<rect x="222.3" y="572.4" width="21.1" height="3.2" fill="url(#gloss)"/>
<rect x="221.6" y="561.5" width="30.3" height="4.7" fill="#c83848" stroke="#000" stroke-width="1.5"/>
<rect x="222.3" y="562.3" width="28.9" height="3.2" fill="url(#shade)"/>
<rect x="222.3" y="562.3" width="28.9" height="3.2" fill="url(#gloss)"/>
<rect x="221.6" y="553.0" width="37.8" height="4.7" fill="#f4d020" stroke="#000" stroke-width="1.5"/>
<rect x="222.3" y="553.8" width="36.4" height="3.2" fill="url(#shade)"/>
<rect x="222.3" y="553.8" width="36.4" height="3.2" fill="url(#gloss)"/>
<rect x="221.6" y="544.7" width="51.6" height="4.7" fill="#c860a0" stroke="#000" stroke-width="1.5"/>
<rect x="222.3" y="545.4" width="50.2" height="3.2" fill="url(#shade)"/>
<rect x="222.3" y="545.4" width="50.2" height="3.2" fill="url(#gloss)"/>
<rect x="221.6" y="535.9" width="63.3" height="4.7" fill="#1090b8" stroke="#000" stroke-width="1.5"/>
<rect x="222.3" y="536.7" width="61.9" height="3.2" fill="url(#shade)"/>
<rect x="222.3" y="536.7" width="61.9" height="3.2" fill="url(#gloss)"/>
<rect x="221.6" y="527.4" width="23.8" height="4.7" fill="#ff0000" stroke="#000" stroke-width="1.5"/>
<rect x="222.3" y="528.2" width="22.4" height="3.2" fill="url(#shade)"/>
<rect x="222.3" y="528.2" width="22.4" height="3.2" fill="url(#gloss)"/>
<rect x="221.6" y="517.2" width="24.5" height="4.7" fill="#00ff00" stroke="#000" stroke-width="1.5"/>
<rect x="222.3" y="518.0" width="23.1" height="3.2" fill="url(#shade)"/>
<rect x="222.3" y="518.0" width="23.1" height="3.2" fill="url(#gloss)"/>
<rect x="221.6" y="508.9" width="41.7" height="4.7" fill="#0000ff" stroke="#000" stroke-width="1.5"/>
<rect x="222.3" y="509.6" width="40.3" height="3.2" fill="url(#shade)"/>
<rect x="222.3" y="509.6" width="40.3" height="3.2" fill="url(#gloss)"/>
<rect x="221.6" y="500.1" width="79.1" height="4.7" fill="#00f0f0" stroke="#000" stroke-width="1.5"/>
<rect x="222.3" y="500.9" width="77.7" height="3.2" fill="url(#shade)"/>
<rect x="222.3" y="500.9" width="77.7" height="3.2" fill="url(#gloss)"/>
<rect x="221.6" y="491.8" width="28.9" height="4.7" fill="#ff00ff" stroke="#000" stroke-width="1.5"/>
<rect x="222.3" y="492.6" width="27.5" height="3.2" fill="url(#shade)"/>
<rect x="222.3" y="492.6" width="27.5" height="3.2" fill="url(#gloss)"/>
<rect x="221.6" y="483.4" width="36.9" height="4.7" fill="#ffff00" stroke="#000" stroke-width="1.5"/>
<rect x="222.3" y="484.2" width="35.5" height="3.2" fill="url(#shade)"/>
<rect x="222.3" y="484.2" width="35.5" height="3.2" fill="url(#gloss)"/>
<rect x="221.6" y="473.0" width="35.1" height="4.7" fill="#6e4028" stroke="#000" stroke-width="1.5"/>
<rect x="222.3" y="473.8" width="33.7" height="3.2" fill="url(#shade)"/>
<rect x="222.3" y="473.8" width="33.7" height="3.2" fill="url(#gloss)"/>
<rect x="221.6" y="464.8" width="22.0" height="4.7" fill="#cc8a66" stroke="#000" stroke-width="1.5"/>
<rect x="222.3" y="465.5" width="20.6" height="3.2" fill="url(#shade)"/>
<rect x="222.3" y="465.5" width="20.6" height="3.2" fill="url(#gloss)"/>
<rect x="221.6" y="455.9" width="78.9" height="4.7" fill="#fdc090" stroke="#000" stroke-width="1.5"/>
<rect x="222.3" y="456.7" width="77.5" height="3.2" fill="url(#shade)"/>
<rect x="222.3" y="456.7" width="77.5" height="3.2" fill="url(#gloss)"/>
<rect x="221.6" y="447.8" width="89.9" height="4.7" fill="#fdc4a8" stroke="#000" stroke-width="1.5"/>
<rect x="222.3" y="448.6" width="88.5" height="3.2" fill="url(#shade)"/>
<rect x="222.3" y="448.6" width="88.5" height="3.2" fill="url(#gloss)"/>
<rect x="221.6" y="438.9" width="65.8" height="4.7" fill="#f5a87c" stroke="#000" stroke-width="1.5"/>
<rect x="222.3" y="439.6" width="64.4" height="3.2" fill="url(#shade)"/>
<rect x="222.3" y="439.6" width="64.4" height="3.2" fill="url(#gloss)"/>
<rect x="221.6" y="430.8" width="17.9" height="4.7" fill="#c88c60" stroke="#000" stroke-width="1.5"/>
<rect x="222.3" y="431.5" width="16.5" height="3.2" fill="url(#shade)"/>
<rect x="222.3" y="431.5" width="16.5" height="3.2" fill="url(#gloss)"/>
<rect x="221.6" y="420.3" width="43.8" height="4.7" fill="#8f5c34" stroke="#000" stroke-width="1.5"/>
<rect x="222.3" y="421.1" width="42.4" height="3.2" fill="url(#shade)"/>
<rect x="222.3" y="421.1" width="42.4" height="3.2" fill="url(#gloss)"/>
<rect x="221.6" y="412.0" width="42.0" height="4.7" fill="#d09470" stroke="#000" stroke-width="1.5"/>
<rect x="222.3" y="412.8" width="40.6" height="3.2" fill="url(#shade)"/>
<rect x="222.3" y="412.8" width="40.6" height="3.2" fill="url(#gloss)"/>
<rect x="221.6" y="403.4" width="36.7" height="4.7" fill="#a05824" stroke="#000" stroke-width="1.5"/>
<rect x="222.3" y="404.2" width="35.3" height="3.2" fill="url(#shade)"/>
<rect x="222.3" y="404.2" width="35.3" height="3.2" fill="url(#gloss)"/>
<rect x="221.6" y="395.1" width="17.9" height="4.7" fill="#d8845c" stroke="#000" stroke-width="1.5"/>
<rect x="222.3" y="395.9" width="16.5" height="3.2" fill="url(#shade)"/>
<rect x="222.3" y="395.9" width="16.5" height="3.2" fill="url(#gloss)"/>
<rect x="221.6" y="386.4" width="23.8" height="4.7" fill="#cf8668" stroke="#000" stroke-width="1.5"/>
<rect x="222.3" y="387.1" width="22.4" height="3.2" fill="url(#shade)"/>
<rect x="222.3" y="387.1" width="22.4" height="3.2" fill="url(#gloss)"/>
<rect x="221.6" y="376.6" width="44.9" height="4.7" fill="#f99670" stroke="#000" stroke-width="1.5"/>
<rect x="222.3" y="377.4" width="43.5" height="3.2" fill="url(#shade)"/>
<rect x="222.3" y="377.4" width="43.5" height="3.2" fill="url(#gloss)"/>
<rect x="221.6" y="368.0" width="26.6" height="4.7" fill="#c88c6c" stroke="#000" stroke-width="1.5"/>
<rect x="222.3" y="368.8" width="25.2" height="3.2" fill="url(#shade)"/>
<rect x="222.3" y="368.8" width="25.2" height="3.2" fill="url(#gloss)"/>
<rect x="221.6" y="359.3" width="24.3" height="4.7" fill="#c48a68" stroke="#000" stroke-width="1.5"/>
<rect x="222.3" y="360.1" width="22.9" height="3.2" fill="url(#shade)"/>
<rect x="222.3" y="360.1" width="22.9" height="3.2" fill="url(#gloss)"/>
<rect x="221.6" y="350.9" width="26.6" height="4.7" fill="#d4906c" stroke="#000" stroke-width="1.5"/>
<rect x="222.3" y="351.7" width="25.2" height="3.2" fill="url(#shade)"/>
<rect x="222.3" y="351.7" width="25.2" height="3.2" fill="url(#gloss)"/>
<rect x="221.6" y="342.2" width="37.8" height="4.7" fill="#7a4822" stroke="#000" stroke-width="1.5"/>
<rect x="222.3" y="343.0" width="36.4" height="3.2" fill="url(#shade)"/>
<rect x="222.3" y="343.0" width="36.4" height="3.2" fill="url(#gloss)"/>
<rect x="221.6" y="333.9" width="19.5" height="4.7" fill="#e89860" stroke="#000" stroke-width="1.5"/>
<rect x="222.3" y="334.6" width="18.1" height="3.2" fill="url(#shade)"/>
<rect x="222.3" y="334.6" width="18.1" height="3.2" fill="url(#gloss)"/>
<path d="M221.0 745.8 V331.6 H566.7 V745.8" fill="none" stroke="#999" stroke-width="1.4"/>
<line x1="220.3" y1="745.8" x2="567.4" y2="745.8" stroke="#aaa" stroke-width="1.5" />
<line x1="221.0" y1="745.8" x2="221.0" y2="752.3" stroke="#ddd" stroke-width="1.5" />
<text transform="translate(221.0 772.8) scale(0.870 1)" font-size="17" fill="#ccc" text-anchor="middle"  stroke="#ccc" stroke-width="0.25">0</text>
<line x1="266.9" y1="745.8" x2="266.9" y2="752.3" stroke="#ddd" stroke-width="1.5" />
<text transform="translate(266.9 772.8) scale(0.870 1)" font-size="17" fill="#ccc" text-anchor="middle"  stroke="#ccc" stroke-width="0.25">2</text>
<line x1="312.7" y1="745.8" x2="312.7" y2="752.3" stroke="#ddd" stroke-width="1.5" />
<text transform="translate(312.7 772.8) scale(0.870 1)" font-size="17" fill="#ccc" text-anchor="middle"  stroke="#ccc" stroke-width="0.25">4</text>
<line x1="358.6" y1="745.8" x2="358.6" y2="752.3" stroke="#ddd" stroke-width="1.5" />
<text transform="translate(358.6 772.8) scale(0.870 1)" font-size="17" fill="#ccc" text-anchor="middle"  stroke="#ccc" stroke-width="0.25">6</text>
<line x1="404.4" y1="745.8" x2="404.4" y2="752.3" stroke="#ddd" stroke-width="1.5" />
<text transform="translate(404.4 772.8) scale(0.870 1)" font-size="17" fill="#ccc" text-anchor="middle"  stroke="#ccc" stroke-width="0.25">8</text>
<line x1="450.3" y1="745.8" x2="450.3" y2="752.3" stroke="#ddd" stroke-width="1.5" />
<text transform="translate(450.3 772.8) scale(0.870 1)" font-size="17" fill="#ccc" text-anchor="middle"  stroke="#ccc" stroke-width="0.25">10</text>
<line x1="496.2" y1="745.8" x2="496.2" y2="752.3" stroke="#ddd" stroke-width="1.5" />
<text transform="translate(496.2 772.8) scale(0.870 1)" font-size="17" fill="#ccc" text-anchor="middle"  stroke="#ccc" stroke-width="0.25">12</text>
<line x1="542.0" y1="745.8" x2="542.0" y2="752.3" stroke="#ddd" stroke-width="1.5" />
<text transform="translate(542.0 772.8) scale(0.870 1)" font-size="17" fill="#ccc" text-anchor="middle"  stroke="#ccc" stroke-width="0.25">14</text>
</g>
<g id="deltal-chart">
<rect x="612.9" y="145.0" width="156.4" height="419.8" fill="#232323" />
<line x1="612.9" y1="513.6" x2="769.3" y2="513.6" stroke="#8a8a8a" stroke-width="1.1" />
<line x1="612.9" y1="460.9" x2="769.3" y2="460.9" stroke="#8a8a8a" stroke-width="1.1" />
<line x1="612.9" y1="408.2" x2="769.3" y2="408.2" stroke="#8a8a8a" stroke-width="1.1" />
<line x1="612.9" y1="355.5" x2="769.3" y2="355.5" stroke="#8a8a8a" stroke-width="1.1" />
<line x1="612.9" y1="302.8" x2="769.3" y2="302.8" stroke="#8a8a8a" stroke-width="1.1" />
<line x1="612.9" y1="250.1" x2="769.3" y2="250.1" stroke="#8a8a8a" stroke-width="1.1" />
<line x1="612.9" y1="197.4" x2="769.3" y2="197.4" stroke="#8a8a8a" stroke-width="1.1" />
<path d="M612.9 145.0 H769.3 V564.8 H612.9 Z" fill="none" stroke="#999" stroke-width="1.3"/>
<line x1="609.6" y1="564.8" x2="612.9" y2="564.8" stroke="#ddd" stroke-width="1.5" />
<text transform="translate(606.3 571.4) scale(0.870 1)" font-size="17" fill="#ccc" text-anchor="end"  stroke="#ccc" stroke-width="0.25">-4</text>
<line x1="609.6" y1="513.6" x2="612.9" y2="513.6" stroke="#ddd" stroke-width="1.5" />
<text transform="translate(606.3 520.2) scale(0.870 1)" font-size="17" fill="#ccc" text-anchor="end"  stroke="#ccc" stroke-width="0.25">-3</text>
<line x1="609.6" y1="460.9" x2="612.9" y2="460.9" stroke="#ddd" stroke-width="1.5" />
<text transform="translate(606.3 467.5) scale(0.870 1)" font-size="17" fill="#ccc" text-anchor="end"  stroke="#ccc" stroke-width="0.25">-2</text>
<line x1="609.6" y1="408.2" x2="612.9" y2="408.2" stroke="#ddd" stroke-width="1.5" />
<text transform="translate(606.3 414.8) scale(0.870 1)" font-size="17" fill="#ccc" text-anchor="end"  stroke="#ccc" stroke-width="0.25">-1</text>
<line x1="609.6" y1="355.5" x2="612.9" y2="355.5" stroke="#ddd" stroke-width="1.5" />
<text transform="translate(606.3 362.1) scale(0.870 1)" font-size="17" fill="#ccc" text-anchor="end"  stroke="#ccc" stroke-width="0.25">0</text>
<line x1="609.6" y1="302.8" x2="612.9" y2="302.8" stroke="#ddd" stroke-width="1.5" />
<text transform="translate(606.3 309.4) scale(0.870 1)" font-size="17" fill="#ccc" text-anchor="end"  stroke="#ccc" stroke-width="0.25">1</text>
<line x1="609.6" y1="250.1" x2="612.9" y2="250.1" stroke="#ddd" stroke-width="1.5" />
<text transform="translate(606.3 256.7) scale(0.870 1)" font-size="17" fill="#ccc" text-anchor="end"  stroke="#ccc" stroke-width="0.25">2</text>
<line x1="609.6" y1="197.4" x2="612.9" y2="197.4" stroke="#ddd" stroke-width="1.5" />
<text transform="translate(606.3 204.0) scale(0.870 1)" font-size="17" fill="#ccc" text-anchor="end"  stroke="#ccc" stroke-width="0.25">3</text>
<line x1="609.6" y1="145.0" x2="612.9" y2="145.0" stroke="#ddd" stroke-width="1.5" />
<text transform="translate(606.3 151.6) scale(0.870 1)" font-size="17" fill="#ccc" text-anchor="end"  stroke="#ccc" stroke-width="0.25">4</text>
<rect x="627.3" y="355.5" width="125.4" height="69.6" fill="url(#barv)" stroke="#000" stroke-width="1.5"/>
<text transform="translate(681.6 139.3) scale(0.820 1)" font-size="18" fill="#ccc" text-anchor="middle"  stroke="#ccc" stroke-width="0.25">DeltaL</text>
</g>
<g id="deltac-chart">
<rect x="815.6" y="145.0" width="158.0" height="419.8" fill="#232323" />
<line x1="815.6" y1="513.6" x2="973.6" y2="513.6" stroke="#8a8a8a" stroke-width="1.1" />
<line x1="815.6" y1="460.9" x2="973.6" y2="460.9" stroke="#8a8a8a" stroke-width="1.1" />
<line x1="815.6" y1="408.2" x2="973.6" y2="408.2" stroke="#8a8a8a" stroke-width="1.1" />
<line x1="815.6" y1="355.5" x2="973.6" y2="355.5" stroke="#8a8a8a" stroke-width="1.1" />
<line x1="815.6" y1="302.8" x2="973.6" y2="302.8" stroke="#8a8a8a" stroke-width="1.1" />
<line x1="815.6" y1="250.1" x2="973.6" y2="250.1" stroke="#8a8a8a" stroke-width="1.1" />
<line x1="815.6" y1="197.4" x2="973.6" y2="197.4" stroke="#8a8a8a" stroke-width="1.1" />
<path d="M815.6 145.0 H973.6 V564.8 H815.6 Z" fill="none" stroke="#999" stroke-width="1.3"/>
<line x1="812.3" y1="564.8" x2="815.6" y2="564.8" stroke="#ddd" stroke-width="1.5" />
<text transform="translate(809.0 571.4) scale(0.870 1)" font-size="17" fill="#ccc" text-anchor="end"  stroke="#ccc" stroke-width="0.25">-4</text>
<line x1="812.3" y1="513.6" x2="815.6" y2="513.6" stroke="#ddd" stroke-width="1.5" />
<text transform="translate(809.0 520.2) scale(0.870 1)" font-size="17" fill="#ccc" text-anchor="end"  stroke="#ccc" stroke-width="0.25">-3</text>
<line x1="812.3" y1="460.9" x2="815.6" y2="460.9" stroke="#ddd" stroke-width="1.5" />
<text transform="translate(809.0 467.5) scale(0.870 1)" font-size="17" fill="#ccc" text-anchor="end"  stroke="#ccc" stroke-width="0.25">-2</text>
<line x1="812.3" y1="408.2" x2="815.6" y2="408.2" stroke="#ddd" stroke-width="1.5" />
<text transform="translate(809.0 414.8) scale(0.870 1)" font-size="17" fill="#ccc" text-anchor="end"  stroke="#ccc" stroke-width="0.25">-1</text>
<line x1="812.3" y1="355.5" x2="815.6" y2="355.5" stroke="#ddd" stroke-width="1.5" />
<text transform="translate(809.0 362.1) scale(0.870 1)" font-size="17" fill="#ccc" text-anchor="end"  stroke="#ccc" stroke-width="0.25">0</text>
<line x1="812.3" y1="302.8" x2="815.6" y2="302.8" stroke="#ddd" stroke-width="1.5" />
<text transform="translate(809.0 309.4) scale(0.870 1)" font-size="17" fill="#ccc" text-anchor="end"  stroke="#ccc" stroke-width="0.25">1</text>
<line x1="812.3" y1="250.1" x2="815.6" y2="250.1" stroke="#ddd" stroke-width="1.5" />
<text transform="translate(809.0 256.7) scale(0.870 1)" font-size="17" fill="#ccc" text-anchor="end"  stroke="#ccc" stroke-width="0.25">2</text>
<line x1="812.3" y1="197.4" x2="815.6" y2="197.4" stroke="#ddd" stroke-width="1.5" />
<text transform="translate(809.0 204.0) scale(0.870 1)" font-size="17" fill="#ccc" text-anchor="end"  stroke="#ccc" stroke-width="0.25">3</text>
<line x1="812.3" y1="145.0" x2="815.6" y2="145.0" stroke="#ddd" stroke-width="1.5" />
<text transform="translate(809.0 151.6) scale(0.870 1)" font-size="17" fill="#ccc" text-anchor="end"  stroke="#ccc" stroke-width="0.25">4</text>
<rect x="830.7" y="187.4" width="126.0" height="168.1" fill="url(#barv)" stroke="#000" stroke-width="1.5"/>
<text transform="translate(885.1 139.3) scale(0.820 1)" font-size="18" fill="#ccc" text-anchor="middle"  stroke="#ccc" stroke-width="0.25">DeltaC</text>
</g>
<g id="deltah-chart">
<rect x="1018.3" y="145.0" width="158.4" height="419.8" fill="#232323" />
<line x1="1018.3" y1="513.6" x2="1176.7" y2="513.6" stroke="#8a8a8a" stroke-width="1.1" />
<line x1="1018.3" y1="460.9" x2="1176.7" y2="460.9" stroke="#8a8a8a" stroke-width="1.1" />
<line x1="1018.3" y1="408.2" x2="1176.7" y2="408.2" stroke="#8a8a8a" stroke-width="1.1" />
<line x1="1018.3" y1="355.5" x2="1176.7" y2="355.5" stroke="#8a8a8a" stroke-width="1.1" />
<line x1="1018.3" y1="302.8" x2="1176.7" y2="302.8" stroke="#8a8a8a" stroke-width="1.1" />
<line x1="1018.3" y1="250.1" x2="1176.7" y2="250.1" stroke="#8a8a8a" stroke-width="1.1" />
<line x1="1018.3" y1="197.4" x2="1176.7" y2="197.4" stroke="#8a8a8a" stroke-width="1.1" />
<path d="M1018.3 145.0 H1176.7 V564.8 H1018.3 Z" fill="none" stroke="#999" stroke-width="1.3"/>
<line x1="1015.0" y1="564.8" x2="1018.3" y2="564.8" stroke="#ddd" stroke-width="1.5" />
<text transform="translate(1011.7 571.4) scale(0.870 1)" font-size="17" fill="#ccc" text-anchor="end"  stroke="#ccc" stroke-width="0.25">-4</text>
<line x1="1015.0" y1="513.6" x2="1018.3" y2="513.6" stroke="#ddd" stroke-width="1.5" />
<text transform="translate(1011.7 520.2) scale(0.870 1)" font-size="17" fill="#ccc" text-anchor="end"  stroke="#ccc" stroke-width="0.25">-3</text>
<line x1="1015.0" y1="460.9" x2="1018.3" y2="460.9" stroke="#ddd" stroke-width="1.5" />
<text transform="translate(1011.7 467.5) scale(0.870 1)" font-size="17" fill="#ccc" text-anchor="end"  stroke="#ccc" stroke-width="0.25">-2</text>
<line x1="1015.0" y1="408.2" x2="1018.3" y2="408.2" stroke="#ddd" stroke-width="1.5" />
<text transform="translate(1011.7 414.8) scale(0.870 1)" font-size="17" fill="#ccc" text-anchor="end"  stroke="#ccc" stroke-width="0.25">-1</text>
<line x1="1015.0" y1="355.5" x2="1018.3" y2="355.5" stroke="#ddd" stroke-width="1.5" />
<text transform="translate(1011.7 362.1) scale(0.870 1)" font-size="17" fill="#ccc" text-anchor="end"  stroke="#ccc" stroke-width="0.25">0</text>
<line x1="1015.0" y1="302.8" x2="1018.3" y2="302.8" stroke="#ddd" stroke-width="1.5" />
<text transform="translate(1011.7 309.4) scale(0.870 1)" font-size="17" fill="#ccc" text-anchor="end"  stroke="#ccc" stroke-width="0.25">1</text>
<line x1="1015.0" y1="250.1" x2="1018.3" y2="250.1" stroke="#ddd" stroke-width="1.5" />
<text transform="translate(1011.7 256.7) scale(0.870 1)" font-size="17" fill="#ccc" text-anchor="end"  stroke="#ccc" stroke-width="0.25">2</text>
<line x1="1015.0" y1="197.4" x2="1018.3" y2="197.4" stroke="#ddd" stroke-width="1.5" />
<text transform="translate(1011.7 204.0) scale(0.870 1)" font-size="17" fill="#ccc" text-anchor="end"  stroke="#ccc" stroke-width="0.25">3</text>
<line x1="1015.0" y1="145.0" x2="1018.3" y2="145.0" stroke="#ddd" stroke-width="1.5" />
<text transform="translate(1011.7 151.6) scale(0.870 1)" font-size="17" fill="#ccc" text-anchor="end"  stroke="#ccc" stroke-width="0.25">4</text>
<rect x="1034.3" y="355.5" width="125.7" height="29.5" fill="url(#barv)" stroke="#000" stroke-width="1.5"/>
<text transform="translate(1088.0 139.3) scale(0.820 1)" font-size="18" fill="#ccc" text-anchor="middle"  stroke="#ccc" stroke-width="0.25">DeltaH</text>
</g>
<g id="swatch-panel">
<rect x="587.3" y="582.0" width="609.4" height="220.0" fill="#000" />
<g clip-path="url(#swclip)">
<rect x="604.0" y="589.6" width="60.6" height="145.6" fill="#faf4fd" />
<rect x="604.0" y="662.4" width="60.6" height="72.8" fill="#f5f5f5" />
<rect x="604.5" y="590.1" width="59.6" height="144.6" fill="none" stroke="#f4f4f4" stroke-width="1.1"/>
<rect x="605.7" y="591.3" width="57.2" height="142.2" fill="none" stroke="#999" stroke-opacity=".55" stroke-width=".7"/>
<text transform="translate(634.3 754.2) scale(0.850 1)" font-size="15.5" fill="#fff" text-anchor="middle" >White</text>
<rect x="674.2" y="589.6" width="60.6" height="145.6" fill="#e7e2ec" />
<rect x="674.2" y="662.4" width="60.6" height="72.8" fill="#e6e6e6" />
<rect x="674.8" y="590.1" width="59.6" height="144.6" fill="none" stroke="#f4f4f4" stroke-width="1.1"/>
<rect x="676.0" y="591.3" width="57.2" height="142.2" fill="none" stroke="#999" stroke-opacity=".55" stroke-width=".7"/>
<text transform="translate(704.5 754.2) scale(0.850 1)" font-size="15.5" fill="#fff" text-anchor="middle" >Gray 80</text>
<rect x="744.5" y="589.6" width="60.6" height="145.6" fill="#d3cfd9" />
<rect x="744.5" y="662.4" width="60.6" height="72.8" fill="#d1d1d1" />
<rect x="745.0" y="590.1" width="59.6" height="144.6" fill="none" stroke="#f4f4f4" stroke-width="1.1"/>
<rect x="746.2" y="591.3" width="57.2" height="142.2" fill="none" stroke="#999" stroke-opacity=".55" stroke-width=".7"/>
<text transform="translate(774.8 754.2) scale(0.850 1)" font-size="15.5" fill="#fff" text-anchor="middle" >Gray 65</text>
<rect x="814.8" y="589.6" width="60.6" height="145.6" fill="#bcb8c1" />
<rect x="814.8" y="662.4" width="60.6" height="72.8" fill="#bababa" />
<rect x="815.2" y="590.1" width="59.6" height="144.6" fill="none" stroke="#f4f4f4" stroke-width="1.1"/>
<rect x="816.5" y="591.3" width="57.2" height="142.2" fill="none" stroke="#999" stroke-opacity=".55" stroke-width=".7"/>
<text transform="translate(845.0 754.2) scale(0.850 1)" font-size="15.5" fill="#fff" text-anchor="middle" >Gray 50</text>
<rect x="885.0" y="589.6" width="60.6" height="145.6" fill="#a09da3" />
<rect x="885.0" y="662.4" width="60.6" height="72.8" fill="#a0a0a0" />
<rect x="885.5" y="590.1" width="59.6" height="144.6" fill="none" stroke="#f4f4f4" stroke-width="1.1"/>
<rect x="886.7" y="591.3" width="57.2" height="142.2" fill="none" stroke="#999" stroke-opacity=".55" stroke-width=".7"/>
<text transform="translate(915.3 754.2) scale(0.850 1)" font-size="15.5" fill="#fff" text-anchor="middle" >Gray 35</text>
<rect x="955.2" y="589.6" width="60.6" height="145.6" fill="#030306" />
<rect x="955.2" y="662.4" width="60.6" height="72.8" fill="#000000" />
<rect x="955.8" y="590.1" width="59.6" height="144.6" fill="none" stroke="#f4f4f4" stroke-width="1.1"/>
<rect x="957.0" y="591.3" width="57.2" height="142.2" fill="none" stroke="#999" stroke-opacity=".55" stroke-width=".7"/>
<text transform="translate(985.5 754.2) scale(0.850 1)" font-size="15.5" fill="#fff" text-anchor="middle" >Black</text>
<rect x="1025.5" y="589.6" width="60.6" height="145.6" fill="#734d41" />
<rect x="1025.5" y="662.4" width="60.6" height="72.8" fill="#735244" />
<rect x="1026.0" y="590.1" width="59.6" height="144.6" fill="none" stroke="#f4f4f4" stroke-width="1.1"/>
<rect x="1027.2" y="591.3" width="57.2" height="142.2" fill="none" stroke="#999" stroke-opacity=".55" stroke-width=".7"/>
<text transform="translate(1055.8 754.2) scale(0.850 1)" font-size="15.5" fill="#fff" text-anchor="middle" >Dark Skin</text>
<rect x="1095.8" y="589.6" width="60.6" height="145.6" fill="#c69888" />
<rect x="1095.8" y="662.4" width="60.6" height="72.8" fill="#c29682" />
<rect x="1096.2" y="590.1" width="59.6" height="144.6" fill="none" stroke="#f4f4f4" stroke-width="1.1"/>
<rect x="1097.5" y="591.3" width="57.2" height="142.2" fill="none" stroke="#999" stroke-opacity=".55" stroke-width=".7"/>
<text transform="translate(1126.0 754.2) scale(0.850 1)" font-size="15.5" fill="#fff" text-anchor="middle" >Light Skin</text>
<rect x="1166.0" y="589.6" width="60.6" height="145.6" fill="#5c7aa4" />
<rect x="1166.0" y="662.4" width="60.6" height="72.8" fill="#627a9d" />
<rect x="1166.5" y="590.1" width="59.6" height="144.6" fill="none" stroke="#f4f4f4" stroke-width="1.1"/>
<rect x="1167.7" y="591.3" width="57.2" height="142.2" fill="none" stroke="#999" stroke-opacity=".55" stroke-width=".7"/>
<text transform="translate(1196.3 754.2) scale(0.850 1)" font-size="15.5" fill="#fff" text-anchor="middle" >Blue Sky</text>
</g>
<text transform="translate(601 643.3) rotate(-90) scale(1.021 1)" font-size="15.5" fill="#fff">Actual</text>
<text transform="translate(601 725.7) rotate(-90) scale(0.998 1)" font-size="15.5" fill="#fff">Target</text>
<rect x="587.3" y="782.7" width="609.4" height="19.2" fill="#636363" />
<rect x="588" y="783.6" width="14.4" height="17" rx="2.5" fill="#7c7c7c"/><path d="M598.3 786.5 v11.2 l-6.6 -5.6z" fill="#444"/>
<rect x="1181.6" y="783.6" width="14.4" height="17" rx="2.5" fill="#7c7c7c"/><path d="M1185.8 786.5 v11.2 l6.6 -5.6z" fill="#444"/>
<rect x="605.5" y="784.2" width="103.5" height="16.2" rx="8" fill="#474747"/>
</g>
<g id="stats">
<text transform="translate(252.5 841.5) scale(0.807 1)" font-size="37.5" fill="#f2f2f2" stroke="#f2f2f2" stroke-width=".6">Avg dE2000: 2.34</text>
<text transform="translate(248.3 892.5) scale(0.818 1)" font-size="37.5" fill="#f2f2f2" stroke="#f2f2f2" stroke-width=".6">Max dE2000: 7.07</text>
<text transform="translate(215.5 950.5) scale(0.818 1)" font-size="37.5" fill="#f2f2f2" stroke="#f2f2f2" stroke-width=".6">Current Reading</text>
<text transform="translate(215.5 996.6) scale(0.831 1)" font-size="31" fill="#f2f2f2" stroke="#f2f2f2" stroke-width=".6">x: 0.5229</text>
<text transform="translate(376.8 996.6) scale(0.835 1)" font-size="31" fill="#f2f2f2" stroke="#f2f2f2" stroke-width=".6">y: 0.4009</text>
<text transform="translate(215.5 1047.5) scale(0.829 1)" font-size="31" fill="#f2f2f2" stroke="#f2f2f2" stroke-width=".6">fL: 18.16</text>
<text transform="translate(215.5 1090.5) scale(0.953 1)" font-size="31" fill="#f2f2f2" stroke="#f2f2f2" stroke-width=".6">cd/m</text>
<text transform="translate(280.5 1078.5) scale(0.799 1)" font-size="18" fill="#f2f2f2" stroke="#f2f2f2" stroke-width=".6">2</text>
<text transform="translate(289.0 1090.5) scale(0.796 1)" font-size="31" fill="#f2f2f2" stroke="#f2f2f2" stroke-width=".6">: 62.22</text>
</g>
<g id="values-table">
<g clip-path="url(#tblclip)">
<rect x="532.0" y="821.0" width="1388.0" height="30.4" fill="url(#thg)" />
<rect x="532.0" y="821.0" width="8.8" height="30.4" fill="#000" />
<text transform="translate(623.5 843.6) scale(0.617 1)" font-size="18.5" fill="#f4f4f4"  stroke="#f4f4f4" stroke-width="0.3">White</text>
<text transform="translate(664.7 843.6) scale(0.559 1)" font-size="18.5" fill="#f4f4f4"  stroke="#f4f4f4" stroke-width="0.3">Gray 80</text>
<text transform="translate(707.4 843.6) scale(0.555 1)" font-size="18.5" fill="#f4f4f4"  stroke="#f4f4f4" stroke-width="0.3">Gray 65</text>
<text transform="translate(749.7 843.6) scale(0.559 1)" font-size="18.5" fill="#f4f4f4"  stroke="#f4f4f4" stroke-width="0.3">Gray 50</text>
<text transform="translate(792.3 843.6) scale(0.559 1)" font-size="18.5" fill="#f4f4f4"  stroke="#f4f4f4" stroke-width="0.3">Gray 35</text>
<text transform="translate(835.0 843.6) scale(0.564 1)" font-size="18.5" fill="#f4f4f4"  stroke="#f4f4f4" stroke-width="0.3">Black</text>
<text transform="translate(870.0 843.6) scale(0.555 1)" font-size="18.5" fill="#f4f4f4"  stroke="#f4f4f4" stroke-width="0.3">Dark Skin</text>
<text transform="translate(920.3 843.6) scale(0.565 1)" font-size="18.5" fill="#f4f4f4"  stroke="#f4f4f4" stroke-width="0.3">Light Skin</text>
<text transform="translate(972.1 843.6) scale(0.549 1)" font-size="18.5" fill="#f4f4f4"  stroke="#f4f4f4" stroke-width="0.3">Blue Sky</text>
<text transform="translate(1017.6 843.6) scale(0.559 1)" font-size="18.5" fill="#f4f4f4"  stroke="#f4f4f4" stroke-width="0.3">Foliage</text>
<text transform="translate(1057.4 843.6) scale(0.574 1)" font-size="18.5" fill="#f4f4f4"  stroke="#f4f4f4" stroke-width="0.3">Blue Flower</text>
<text transform="translate(1119.7 843.6) scale(0.566 1)" font-size="18.5" fill="#f4f4f4"  stroke="#f4f4f4" stroke-width="0.3">Bluish Green</text>
<text transform="translate(1186.4 843.6) scale(0.570 1)" font-size="18.5" fill="#f4f4f4"  stroke="#f4f4f4" stroke-width="0.3">Orange</text>
<text transform="translate(1227.3 843.6) scale(0.575 1)" font-size="18.5" fill="#f4f4f4"  stroke="#f4f4f4" stroke-width="0.3">Purplish Blue</text>
<text transform="translate(1295.8 843.6) scale(0.584 1)" font-size="18.5" fill="#f4f4f4"  stroke="#f4f4f4" stroke-width="0.3">Moderate Red</text>
<text transform="translate(1370.2 843.6) scale(0.580 1)" font-size="18.5" fill="#f4f4f4"  stroke="#f4f4f4" stroke-width="0.3">Purple</text>
<text transform="translate(1407.0 843.6) scale(0.577 1)" font-size="18.5" fill="#f4f4f4"  stroke="#f4f4f4" stroke-width="0.3">Yellow Green</text>
<text transform="translate(1475.6 843.6) scale(0.574 1)" font-size="18.5" fill="#f4f4f4"  stroke="#f4f4f4" stroke-width="0.3">Orange Yellow</text>
<text transform="translate(1549.9 843.6) scale(0.570 1)" font-size="18.5" fill="#f4f4f4"  stroke="#f4f4f4" stroke-width="0.3">Blue</text>
<text transform="translate(1584.6 843.6) scale(0.574 1)" font-size="18.5" fill="#f4f4f4"  stroke="#f4f4f4" stroke-width="0.3">Green</text>
<text transform="translate(1625.8 843.6) scale(0.536 1)" font-size="18.5" fill="#f4f4f4"  stroke="#f4f4f4" stroke-width="0.3">Red</text>
<text transform="translate(1660.4 843.6) scale(0.595 1)" font-size="18.5" fill="#f4f4f4"  stroke="#f4f4f4" stroke-width="0.3">Yellow</text>
<text transform="translate(1702.0 843.6) scale(0.588 1)" font-size="18.5" fill="#f4f4f4"  stroke="#f4f4f4" stroke-width="0.3">Magenta</text>
<text transform="translate(1750.4 843.6) scale(0.533 1)" font-size="18.5" fill="#f4f4f4"  stroke="#f4f4f4" stroke-width="0.3">Cyan</text>
<text transform="translate(1785.1 843.6) scale(0.544 1)" font-size="18.5" fill="#f4f4f4"  stroke="#f4f4f4" stroke-width="0.3">100% Red</text>
<text transform="translate(1838.3 843.6) scale(0.561 1)" font-size="18.5" fill="#f4f4f4"  stroke="#f4f4f4" stroke-width="0.3">100% Green</text>
<text transform="translate(1902.5 843.6) scale(0.570 1)" font-size="18.5" fill="#f4f4f4"  stroke="#f4f4f4" stroke-width="0.3">100% Blue</text>
<rect x="540.8" y="851.2" width="1380.0" height="29.5" fill="#414141" />
<rect x="532.0" y="851.2" width="8.8" height="29.5" fill="#2b2b2b" />
<text transform="translate(544.0 873.8) scale(0.565 1)" font-size="18.5" fill="#f4f4f4"  stroke="#f4f4f4" stroke-width="0.3">x: CIE31</text>
<text transform="translate(623.5 873.8) scale(0.605 1)" font-size="18.5" fill="#f4f4f4"  stroke="#f4f4f4" stroke-width="0.3">0.31</text>
<text transform="translate(664.7 873.8) scale(0.605 1)" font-size="18.5" fill="#f4f4f4"  stroke="#f4f4f4" stroke-width="0.3">0.31</text>
<text transform="translate(707.4 873.8) scale(0.605 1)" font-size="18.5" fill="#f4f4f4"  stroke="#f4f4f4" stroke-width="0.3">0.31</text>
<text transform="translate(749.7 873.8) scale(0.605 1)" font-size="18.5" fill="#f4f4f4"  stroke="#f4f4f4" stroke-width="0.3">0.31</text>
<text transform="translate(792.3 873.8) scale(0.605 1)" font-size="18.5" fill="#f4f4f4"  stroke="#f4f4f4" stroke-width="0.3">0.31</text>
<text transform="translate(835.0 873.8) scale(0.605 1)" font-size="18.5" fill="#f4f4f4"  stroke="#f4f4f4" stroke-width="0.3">0.28</text>
<text transform="translate(870.0 873.8) scale(0.605 1)" font-size="18.5" fill="#f4f4f4"  stroke="#f4f4f4" stroke-width="0.3">0.41</text>
<text transform="translate(920.3 873.8) scale(0.605 1)" font-size="18.5" fill="#f4f4f4"  stroke="#f4f4f4" stroke-width="0.3">0.38</text>
<text transform="translate(972.1 873.8) scale(0.605 1)" font-size="18.5" fill="#f4f4f4"  stroke="#f4f4f4" stroke-width="0.3">0.24</text>
<text transform="translate(1017.6 873.8) scale(0.605 1)" font-size="18.5" fill="#f4f4f4"  stroke="#f4f4f4" stroke-width="0.3">0.34</text>
<text transform="translate(1057.4 873.8) scale(0.605 1)" font-size="18.5" fill="#f4f4f4"  stroke="#f4f4f4" stroke-width="0.3">0.27</text>
<text transform="translate(1119.7 873.8) scale(0.605 1)" font-size="18.5" fill="#f4f4f4"  stroke="#f4f4f4" stroke-width="0.3">0.26</text>
<text transform="translate(1186.4 873.8) scale(0.605 1)" font-size="18.5" fill="#f4f4f4"  stroke="#f4f4f4" stroke-width="0.3">0.52</text>
<text transform="translate(1227.3 873.8) scale(0.605 1)" font-size="18.5" fill="#f4f4f4"  stroke="#f4f4f4" stroke-width="0.3">0.21</text>
<text transform="translate(1295.8 873.8) scale(0.605 1)" font-size="18.5" fill="#f4f4f4"  stroke="#f4f4f4" stroke-width="0.3">0.47</text>
<text transform="translate(1370.2 873.8) scale(0.605 1)" font-size="18.5" fill="#f4f4f4"  stroke="#f4f4f4" stroke-width="0.3">0.27</text>
<text transform="translate(1407.0 873.8) scale(0.605 1)" font-size="18.5" fill="#f4f4f4"  stroke="#f4f4f4" stroke-width="0.3">0.38</text>
<text transform="translate(1475.6 873.8) scale(0.605 1)" font-size="18.5" fill="#f4f4f4"  stroke="#f4f4f4" stroke-width="0.3">0.48</text>
<text transform="translate(1549.9 873.8) scale(0.605 1)" font-size="18.5" fill="#f4f4f4"  stroke="#f4f4f4" stroke-width="0.3">0.19</text>
<text transform="translate(1584.6 873.8) scale(0.605 1)" font-size="18.5" fill="#f4f4f4"  stroke="#f4f4f4" stroke-width="0.3">0.30</text>
<text transform="translate(1625.8 873.8) scale(0.605 1)" font-size="18.5" fill="#f4f4f4"  stroke="#f4f4f4" stroke-width="0.3">0.55</text>
<text transform="translate(1660.4 873.8) scale(0.605 1)" font-size="18.5" fill="#f4f4f4"  stroke="#f4f4f4" stroke-width="0.3">0.46</text>
<text transform="translate(1702.0 873.8) scale(0.605 1)" font-size="18.5" fill="#f4f4f4"  stroke="#f4f4f4" stroke-width="0.3">0.37</text>
<text transform="translate(1750.4 873.8) scale(0.605 1)" font-size="18.5" fill="#f4f4f4"  stroke="#f4f4f4" stroke-width="0.3">0.21</text>
<text transform="translate(1785.1 873.8) scale(0.605 1)" font-size="18.5" fill="#f4f4f4"  stroke="#f4f4f4" stroke-width="0.3">0.64</text>
<text transform="translate(1838.3 873.8) scale(0.605 1)" font-size="18.5" fill="#f4f4f4"  stroke="#f4f4f4" stroke-width="0.3">0.30</text>
<text transform="translate(1902.5 873.8) scale(0.605 1)" font-size="18.5" fill="#f4f4f4"  stroke="#f4f4f4" stroke-width="0.3">0.15</text>
<rect x="540.8" y="880.4" width="1380.0" height="29.5" fill="#6f6f6f" />
<rect x="532.0" y="880.4" width="8.8" height="29.5" fill="#474747" />
<text transform="translate(544.0 903.0) scale(0.565 1)" font-size="18.5" fill="#f4f4f4"  stroke="#f4f4f4" stroke-width="0.3">y: CIE31</text>
<text transform="translate(623.5 903.0) scale(0.605 1)" font-size="18.5" fill="#f4f4f4"  stroke="#f4f4f4" stroke-width="0.3">0.32</text>
<text transform="translate(664.7 903.0) scale(0.605 1)" font-size="18.5" fill="#f4f4f4"  stroke="#f4f4f4" stroke-width="0.3">0.32</text>
<text transform="translate(707.4 903.0) scale(0.605 1)" font-size="18.5" fill="#f4f4f4"  stroke="#f4f4f4" stroke-width="0.3">0.32</text>
<text transform="translate(749.7 903.0) scale(0.605 1)" font-size="18.5" fill="#f4f4f4"  stroke="#f4f4f4" stroke-width="0.3">0.32</text>
<text transform="translate(792.3 903.0) scale(0.605 1)" font-size="18.5" fill="#f4f4f4"  stroke="#f4f4f4" stroke-width="0.3">0.32</text>
<text transform="translate(835.0 903.0) scale(0.605 1)" font-size="18.5" fill="#f4f4f4"  stroke="#f4f4f4" stroke-width="0.3">0.27</text>
<text transform="translate(870.0 903.0) scale(0.605 1)" font-size="18.5" fill="#f4f4f4"  stroke="#f4f4f4" stroke-width="0.3">0.36</text>
<text transform="translate(920.3 903.0) scale(0.605 1)" font-size="18.5" fill="#f4f4f4"  stroke="#f4f4f4" stroke-width="0.3">0.35</text>
<text transform="translate(972.1 903.0) scale(0.605 1)" font-size="18.5" fill="#f4f4f4"  stroke="#f4f4f4" stroke-width="0.3">0.25</text>
<text transform="translate(1017.6 903.0) scale(0.605 1)" font-size="18.5" fill="#f4f4f4"  stroke="#f4f4f4" stroke-width="0.3">0.43</text>
<text transform="translate(1057.4 903.0) scale(0.605 1)" font-size="18.5" fill="#f4f4f4"  stroke="#f4f4f4" stroke-width="0.3">0.24</text>
<text transform="translate(1119.7 903.0) scale(0.605 1)" font-size="18.5" fill="#f4f4f4"  stroke="#f4f4f4" stroke-width="0.3">0.35</text>
<text transform="translate(1186.4 903.0) scale(0.605 1)" font-size="18.5" fill="#f4f4f4"  stroke="#f4f4f4" stroke-width="0.3">0.41</text>
<text transform="translate(1227.3 903.0) scale(0.605 1)" font-size="18.5" fill="#f4f4f4"  stroke="#f4f4f4" stroke-width="0.3">0.17</text>
<text transform="translate(1295.8 903.0) scale(0.605 1)" font-size="18.5" fill="#f4f4f4"  stroke="#f4f4f4" stroke-width="0.3">0.31</text>
<text transform="translate(1370.2 903.0) scale(0.605 1)" font-size="18.5" fill="#f4f4f4"  stroke="#f4f4f4" stroke-width="0.3">0.20</text>
<text transform="translate(1407.0 903.0) scale(0.605 1)" font-size="18.5" fill="#f4f4f4"  stroke="#f4f4f4" stroke-width="0.3">0.50</text>
<text transform="translate(1475.6 903.0) scale(0.605 1)" font-size="18.5" fill="#f4f4f4"  stroke="#f4f4f4" stroke-width="0.3">0.44</text>
<text transform="translate(1549.9 903.0) scale(0.605 1)" font-size="18.5" fill="#f4f4f4"  stroke="#f4f4f4" stroke-width="0.3">0.12</text>
<text transform="translate(1584.6 903.0) scale(0.605 1)" font-size="18.5" fill="#f4f4f4"  stroke="#f4f4f4" stroke-width="0.3">0.50</text>
<text transform="translate(1625.8 903.0) scale(0.605 1)" font-size="18.5" fill="#f4f4f4"  stroke="#f4f4f4" stroke-width="0.3">0.31</text>
<text transform="translate(1660.4 903.0) scale(0.605 1)" font-size="18.5" fill="#f4f4f4"  stroke="#f4f4f4" stroke-width="0.3">0.48</text>
<text transform="translate(1702.0 903.0) scale(0.605 1)" font-size="18.5" fill="#f4f4f4"  stroke="#f4f4f4" stroke-width="0.3">0.23</text>
<text transform="translate(1750.4 903.0) scale(0.605 1)" font-size="18.5" fill="#f4f4f4"  stroke="#f4f4f4" stroke-width="0.3">0.26</text>
<text transform="translate(1785.1 903.0) scale(0.605 1)" font-size="18.5" fill="#f4f4f4"  stroke="#f4f4f4" stroke-width="0.3">0.33</text>
<text transform="translate(1838.3 903.0) scale(0.605 1)" font-size="18.5" fill="#f4f4f4"  stroke="#f4f4f4" stroke-width="0.3">0.61</text>
<text transform="translate(1902.5 903.0) scale(0.605 1)" font-size="18.5" fill="#f4f4f4"  stroke="#f4f4f4" stroke-width="0.3">0.06</text>
<rect x="540.8" y="909.5" width="1380.0" height="29.5" fill="#414141" />
<rect x="532.0" y="909.5" width="8.8" height="29.5" fill="#2b2b2b" />
<text transform="translate(544.0 932.1) scale(0.605 1)" font-size="18.5" fill="#f4f4f4"  stroke="#f4f4f4" stroke-width="0.3">Y</text>
<text transform="translate(623.5 932.1) scale(0.605 1)" font-size="18.5" fill="#f4f4f4"  stroke="#f4f4f4" stroke-width="0.3">458.30</text>
<text transform="translate(664.7 932.1) scale(0.605 1)" font-size="18.5" fill="#f4f4f4"  stroke="#f4f4f4" stroke-width="0.3">357.07</text>
<text transform="translate(707.4 932.1) scale(0.605 1)" font-size="18.5" fill="#f4f4f4"  stroke="#f4f4f4" stroke-width="0.3">286.57</text>
<text transform="translate(749.7 932.1) scale(0.605 1)" font-size="18.5" fill="#f4f4f4"  stroke="#f4f4f4" stroke-width="0.3">218.29</text>
<text transform="translate(792.3 932.1) scale(0.605 1)" font-size="18.5" fill="#f4f4f4"  stroke="#f4f4f4" stroke-width="0.3">151.27</text>
<text transform="translate(835.0 932.1) scale(0.605 1)" font-size="18.5" fill="#f4f4f4"  stroke="#f4f4f4" stroke-width="0.3">0.33</text>
<text transform="translate(870.0 932.1) scale(0.605 1)" font-size="18.5" fill="#f4f4f4"  stroke="#f4f4f4" stroke-width="0.3">42.31</text>
<text transform="translate(920.3 932.1) scale(0.605 1)" font-size="18.5" fill="#f4f4f4"  stroke="#f4f4f4" stroke-width="0.3">156.12</text>
<text transform="translate(972.1 932.1) scale(0.605 1)" font-size="18.5" fill="#f4f4f4"  stroke="#f4f4f4" stroke-width="0.3">81.91</text>
<rect x="1014.9" y="910.4" width="39" height="26.8" fill="#f6f6f6" stroke="#ccc" stroke-width="0.8"/>
<text transform="translate(1017.6 932.1) scale(0.605 1)" font-size="18.5" fill="#222"  stroke="#222" stroke-width="0.3">55.01</text>
<text transform="translate(1057.4 932.1) scale(0.605 1)" font-size="18.5" fill="#f4f4f4"  stroke="#f4f4f4" stroke-width="0.3">104.69</text>
<text transform="translate(1119.7 932.1) scale(0.605 1)" font-size="18.5" fill="#f4f4f4"  stroke="#f4f4f4" stroke-width="0.3">183.98</text>
<text transform="translate(1186.4 932.1) scale(0.605 1)" font-size="18.5" fill="#f4f4f4"  stroke="#f4f4f4" stroke-width="0.3">127.41</text>
<text transform="translate(1227.3 932.1) scale(0.605 1)" font-size="18.5" fill="#f4f4f4"  stroke="#f4f4f4" stroke-width="0.3">49.30</text>
<text transform="translate(1295.8 932.1) scale(0.605 1)" font-size="18.5" fill="#f4f4f4"  stroke="#f4f4f4" stroke-width="0.3">81.81</text>
<text transform="translate(1370.2 932.1) scale(0.605 1)" font-size="18.5" fill="#f4f4f4"  stroke="#f4f4f4" stroke-width="0.3">24.96</text>
<text transform="translate(1407.0 932.1) scale(0.605 1)" font-size="18.5" fill="#f4f4f4"  stroke="#f4f4f4" stroke-width="0.3">189.09</text>
<text transform="translate(1475.6 932.1) scale(0.605 1)" font-size="18.5" fill="#f4f4f4"  stroke="#f4f4f4" stroke-width="0.3">190.51</text>
<text transform="translate(1549.9 932.1) scale(0.605 1)" font-size="18.5" fill="#f4f4f4"  stroke="#f4f4f4" stroke-width="0.3">25.29</text>
<text transform="translate(1584.6 932.1) scale(0.605 1)" font-size="18.5" fill="#f4f4f4"  stroke="#f4f4f4" stroke-width="0.3">101.24</text>
<text transform="translate(1625.8 932.1) scale(0.605 1)" font-size="18.5" fill="#f4f4f4"  stroke="#f4f4f4" stroke-width="0.3">50.48</text>
<text transform="translate(1660.4 932.1) scale(0.605 1)" font-size="18.5" fill="#f4f4f4"  stroke="#f4f4f4" stroke-width="0.3">265.21</text>
<text transform="translate(1702.0 932.1) scale(0.605 1)" font-size="18.5" fill="#f4f4f4"  stroke="#f4f4f4" stroke-width="0.3">82.58</text>
<text transform="translate(1750.4 932.1) scale(0.605 1)" font-size="18.5" fill="#f4f4f4"  stroke="#f4f4f4" stroke-width="0.3">86.34</text>
<text transform="translate(1785.1 932.1) scale(0.605 1)" font-size="18.5" fill="#f4f4f4"  stroke="#f4f4f4" stroke-width="0.3">101.03</text>
<text transform="translate(1838.3 932.1) scale(0.605 1)" font-size="18.5" fill="#f4f4f4"  stroke="#f4f4f4" stroke-width="0.3">322.96</text>
<text transform="translate(1902.5 932.1) scale(0.605 1)" font-size="18.5" fill="#f4f4f4"  stroke="#f4f4f4" stroke-width="0.3">33.21</text>
<rect x="540.8" y="938.7" width="1380.0" height="29.5" fill="#6f6f6f" />
<rect x="532.0" y="938.7" width="8.8" height="29.5" fill="#474747" />
<text transform="translate(544.0 961.3) scale(0.587 1)" font-size="18.5" fill="#f4f4f4"  stroke="#f4f4f4" stroke-width="0.3">Target x:CIE31</text>
<text transform="translate(623.5 961.3) scale(0.605 1)" font-size="18.5" fill="#f4f4f4"  stroke="#f4f4f4" stroke-width="0.3">0.31</text>
<text transform="translate(664.7 961.3) scale(0.605 1)" font-size="18.5" fill="#f4f4f4"  stroke="#f4f4f4" stroke-width="0.3">0.31</text>
<text transform="translate(707.4 961.3) scale(0.605 1)" font-size="18.5" fill="#f4f4f4"  stroke="#f4f4f4" stroke-width="0.3">0.31</text>
<text transform="translate(749.7 961.3) scale(0.605 1)" font-size="18.5" fill="#f4f4f4"  stroke="#f4f4f4" stroke-width="0.3">0.31</text>
<text transform="translate(792.3 961.3) scale(0.605 1)" font-size="18.5" fill="#f4f4f4"  stroke="#f4f4f4" stroke-width="0.3">0.31</text>
<text transform="translate(835.0 961.3) scale(0.605 1)" font-size="18.5" fill="#f4f4f4"  stroke="#f4f4f4" stroke-width="0.3">0.31</text>
<text transform="translate(870.0 961.3) scale(0.605 1)" font-size="18.5" fill="#f4f4f4"  stroke="#f4f4f4" stroke-width="0.3">0.40</text>
<text transform="translate(920.3 961.3) scale(0.605 1)" font-size="18.5" fill="#f4f4f4"  stroke="#f4f4f4" stroke-width="0.3">0.38</text>
<text transform="translate(972.1 961.3) scale(0.605 1)" font-size="18.5" fill="#f4f4f4"  stroke="#f4f4f4" stroke-width="0.3">0.25</text>
<text transform="translate(1017.6 961.3) scale(0.605 1)" font-size="18.5" fill="#f4f4f4"  stroke="#f4f4f4" stroke-width="0.3">0.34</text>
<text transform="translate(1057.4 961.3) scale(0.605 1)" font-size="18.5" fill="#f4f4f4"  stroke="#f4f4f4" stroke-width="0.3">0.27</text>
<text transform="translate(1119.7 961.3) scale(0.605 1)" font-size="18.5" fill="#f4f4f4"  stroke="#f4f4f4" stroke-width="0.3">0.26</text>
<text transform="translate(1186.4 961.3) scale(0.605 1)" font-size="18.5" fill="#f4f4f4"  stroke="#f4f4f4" stroke-width="0.3">0.51</text>
<text transform="translate(1227.3 961.3) scale(0.605 1)" font-size="18.5" fill="#f4f4f4"  stroke="#f4f4f4" stroke-width="0.3">0.22</text>
<text transform="translate(1295.8 961.3) scale(0.605 1)" font-size="18.5" fill="#f4f4f4"  stroke="#f4f4f4" stroke-width="0.3">0.46</text>
<text transform="translate(1370.2 961.3) scale(0.605 1)" font-size="18.5" fill="#f4f4f4"  stroke="#f4f4f4" stroke-width="0.3">0.29</text>
<text transform="translate(1407.0 961.3) scale(0.605 1)" font-size="18.5" fill="#f4f4f4"  stroke="#f4f4f4" stroke-width="0.3">0.38</text>
<text transform="translate(1475.6 961.3) scale(0.605 1)" font-size="18.5" fill="#f4f4f4"  stroke="#f4f4f4" stroke-width="0.3">0.47</text>
<text transform="translate(1549.9 961.3) scale(0.605 1)" font-size="18.5" fill="#f4f4f4"  stroke="#f4f4f4" stroke-width="0.3">0.19</text>
<text transform="translate(1584.6 961.3) scale(0.605 1)" font-size="18.5" fill="#f4f4f4"  stroke="#f4f4f4" stroke-width="0.3">0.31</text>
<text transform="translate(1625.8 961.3) scale(0.605 1)" font-size="18.5" fill="#f4f4f4"  stroke="#f4f4f4" stroke-width="0.3">0.54</text>
<text transform="translate(1660.4 961.3) scale(0.605 1)" font-size="18.5" fill="#f4f4f4"  stroke="#f4f4f4" stroke-width="0.3">0.45</text>
<text transform="translate(1702.0 961.3) scale(0.605 1)" font-size="18.5" fill="#f4f4f4"  stroke="#f4f4f4" stroke-width="0.3">0.37</text>
<text transform="translate(1750.4 961.3) scale(0.605 1)" font-size="18.5" fill="#f4f4f4"  stroke="#f4f4f4" stroke-width="0.3">0.21</text>
<text transform="translate(1785.1 961.3) scale(0.605 1)" font-size="18.5" fill="#f4f4f4"  stroke="#f4f4f4" stroke-width="0.3">0.64</text>
<text transform="translate(1838.3 961.3) scale(0.605 1)" font-size="18.5" fill="#f4f4f4"  stroke="#f4f4f4" stroke-width="0.3">0.30</text>
<text transform="translate(1902.5 961.3) scale(0.605 1)" font-size="18.5" fill="#f4f4f4"  stroke="#f4f4f4" stroke-width="0.3">0.15</text>
<rect x="540.8" y="967.9" width="1380.0" height="29.5" fill="#414141" />
<rect x="532.0" y="967.9" width="8.8" height="29.5" fill="#2b2b2b" />
<text transform="translate(544.0 990.5) scale(0.587 1)" font-size="18.5" fill="#f4f4f4"  stroke="#f4f4f4" stroke-width="0.3">Target y:CIE31</text>
<text transform="translate(623.5 990.5) scale(0.605 1)" font-size="18.5" fill="#f4f4f4"  stroke="#f4f4f4" stroke-width="0.3">0.33</text>
<text transform="translate(664.7 990.5) scale(0.605 1)" font-size="18.5" fill="#f4f4f4"  stroke="#f4f4f4" stroke-width="0.3">0.33</text>
<text transform="translate(707.4 990.5) scale(0.605 1)" font-size="18.5" fill="#f4f4f4"  stroke="#f4f4f4" stroke-width="0.3">0.33</text>
<text transform="translate(749.7 990.5) scale(0.605 1)" font-size="18.5" fill="#f4f4f4"  stroke="#f4f4f4" stroke-width="0.3">0.33</text>
<text transform="translate(792.3 990.5) scale(0.605 1)" font-size="18.5" fill="#f4f4f4"  stroke="#f4f4f4" stroke-width="0.3">0.33</text>
<text transform="translate(835.0 990.5) scale(0.605 1)" font-size="18.5" fill="#f4f4f4"  stroke="#f4f4f4" stroke-width="0.3">0.33</text>
<text transform="translate(870.0 990.5) scale(0.605 1)" font-size="18.5" fill="#f4f4f4"  stroke="#f4f4f4" stroke-width="0.3">0.36</text>
<text transform="translate(920.3 990.5) scale(0.605 1)" font-size="18.5" fill="#f4f4f4"  stroke="#f4f4f4" stroke-width="0.3">0.36</text>
<text transform="translate(972.1 990.5) scale(0.605 1)" font-size="18.5" fill="#f4f4f4"  stroke="#f4f4f4" stroke-width="0.3">0.27</text>
<text transform="translate(1017.6 990.5) scale(0.605 1)" font-size="18.5" fill="#f4f4f4"  stroke="#f4f4f4" stroke-width="0.3">0.43</text>
<text transform="translate(1057.4 990.5) scale(0.605 1)" font-size="18.5" fill="#f4f4f4"  stroke="#f4f4f4" stroke-width="0.3">0.25</text>
<text transform="translate(1119.7 990.5) scale(0.605 1)" font-size="18.5" fill="#f4f4f4"  stroke="#f4f4f4" stroke-width="0.3">0.36</text>
<text transform="translate(1186.4 990.5) scale(0.605 1)" font-size="18.5" fill="#f4f4f4"  stroke="#f4f4f4" stroke-width="0.3">0.41</text>
<text transform="translate(1227.3 990.5) scale(0.605 1)" font-size="18.5" fill="#f4f4f4"  stroke="#f4f4f4" stroke-width="0.3">0.19</text>
<text transform="translate(1295.8 990.5) scale(0.605 1)" font-size="18.5" fill="#f4f4f4"  stroke="#f4f4f4" stroke-width="0.3">0.31</text>
<text transform="translate(1370.2 990.5) scale(0.605 1)" font-size="18.5" fill="#f4f4f4"  stroke="#f4f4f4" stroke-width="0.3">0.22</text>
<text transform="translate(1407.0 990.5) scale(0.605 1)" font-size="18.5" fill="#f4f4f4"  stroke="#f4f4f4" stroke-width="0.3">0.49</text>
<text transform="translate(1475.6 990.5) scale(0.605 1)" font-size="18.5" fill="#f4f4f4"  stroke="#f4f4f4" stroke-width="0.3">0.44</text>
<text transform="translate(1549.9 990.5) scale(0.605 1)" font-size="18.5" fill="#f4f4f4"  stroke="#f4f4f4" stroke-width="0.3">0.14</text>
<text transform="translate(1584.6 990.5) scale(0.605 1)" font-size="18.5" fill="#f4f4f4"  stroke="#f4f4f4" stroke-width="0.3">0.49</text>
<text transform="translate(1625.8 990.5) scale(0.605 1)" font-size="18.5" fill="#f4f4f4"  stroke="#f4f4f4" stroke-width="0.3">0.32</text>
<text transform="translate(1660.4 990.5) scale(0.605 1)" font-size="18.5" fill="#f4f4f4"  stroke="#f4f4f4" stroke-width="0.3">0.47</text>
<text transform="translate(1702.0 990.5) scale(0.605 1)" font-size="18.5" fill="#f4f4f4"  stroke="#f4f4f4" stroke-width="0.3">0.25</text>
<text transform="translate(1750.4 990.5) scale(0.605 1)" font-size="18.5" fill="#f4f4f4"  stroke="#f4f4f4" stroke-width="0.3">0.27</text>
<text transform="translate(1785.1 990.5) scale(0.605 1)" font-size="18.5" fill="#f4f4f4"  stroke="#f4f4f4" stroke-width="0.3">0.33</text>
<text transform="translate(1838.3 990.5) scale(0.605 1)" font-size="18.5" fill="#f4f4f4"  stroke="#f4f4f4" stroke-width="0.3">0.60</text>
<text transform="translate(1902.5 990.5) scale(0.605 1)" font-size="18.5" fill="#f4f4f4"  stroke="#f4f4f4" stroke-width="0.3">0.06</text>
<rect x="540.8" y="997.1" width="1380.0" height="29.5" fill="#6f6f6f" />
<rect x="532.0" y="997.1" width="8.8" height="29.5" fill="#474747" />
<text transform="translate(544.0 1019.7) scale(0.607 1)" font-size="18.5" fill="#f4f4f4"  stroke="#f4f4f4" stroke-width="0.3">Target Y</text>
<text transform="translate(623.5 1019.7) scale(0.605 1)" font-size="18.5" fill="#f4f4f4"  stroke="#f4f4f4" stroke-width="0.3">458.30</text>
<text transform="translate(664.7 1019.7) scale(0.605 1)" font-size="18.5" fill="#f4f4f4"  stroke="#f4f4f4" stroke-width="0.3">362.65</text>
<text transform="translate(707.4 1019.7) scale(0.605 1)" font-size="18.5" fill="#f4f4f4"  stroke="#f4f4f4" stroke-width="0.3">292.21</text>
<text transform="translate(749.7 1019.7) scale(0.605 1)" font-size="18.5" fill="#f4f4f4"  stroke="#f4f4f4" stroke-width="0.3">225.03</text>
<text transform="translate(792.3 1019.7) scale(0.605 1)" font-size="18.5" fill="#f4f4f4"  stroke="#f4f4f4" stroke-width="0.3">156.70</text>
<text transform="translate(835.0 1019.7) scale(0.605 1)" font-size="18.5" fill="#f4f4f4"  stroke="#f4f4f4" stroke-width="0.3">0.00</text>
<text transform="translate(870.0 1019.7) scale(0.605 1)" font-size="18.5" fill="#f4f4f4"  stroke="#f4f4f4" stroke-width="0.3">46.17</text>
<text transform="translate(920.3 1019.7) scale(0.605 1)" font-size="18.5" fill="#f4f4f4"  stroke="#f4f4f4" stroke-width="0.3">159.92</text>
<text transform="translate(972.1 1019.7) scale(0.605 1)" font-size="18.5" fill="#f4f4f4"  stroke="#f4f4f4" stroke-width="0.3">85.69</text>
<text transform="translate(1017.6 1019.7) scale(0.605 1)" font-size="18.5" fill="#f4f4f4"  stroke="#f4f4f4" stroke-width="0.3">59.73</text>
<text transform="translate(1057.4 1019.7) scale(0.605 1)" font-size="18.5" fill="#f4f4f4"  stroke="#f4f4f4" stroke-width="0.3">106.87</text>
<text transform="translate(1119.7 1019.7) scale(0.605 1)" font-size="18.5" fill="#f4f4f4"  stroke="#f4f4f4" stroke-width="0.3">191.90</text>
<text transform="translate(1186.4 1019.7) scale(0.605 1)" font-size="18.5" fill="#f4f4f4"  stroke="#f4f4f4" stroke-width="0.3">129.92</text>
<text transform="translate(1227.3 1019.7) scale(0.605 1)" font-size="18.5" fill="#f4f4f4"  stroke="#f4f4f4" stroke-width="0.3">53.87</text>
<text transform="translate(1295.8 1019.7) scale(0.605 1)" font-size="18.5" fill="#f4f4f4"  stroke="#f4f4f4" stroke-width="0.3">85.59</text>
<text transform="translate(1370.2 1019.7) scale(0.605 1)" font-size="18.5" fill="#f4f4f4"  stroke="#f4f4f4" stroke-width="0.3">30.59</text>
<text transform="translate(1407.0 1019.7) scale(0.605 1)" font-size="18.5" fill="#f4f4f4"  stroke="#f4f4f4" stroke-width="0.3">195.95</text>
<text transform="translate(1475.6 1019.7) scale(0.605 1)" font-size="18.5" fill="#f4f4f4"  stroke="#f4f4f4" stroke-width="0.3">194.84</text>
<text transform="translate(1549.9 1019.7) scale(0.605 1)" font-size="18.5" fill="#f4f4f4"  stroke="#f4f4f4" stroke-width="0.3">28.61</text>
<text transform="translate(1584.6 1019.7) scale(0.605 1)" font-size="18.5" fill="#f4f4f4"  stroke="#f4f4f4" stroke-width="0.3">105.29</text>
<text transform="translate(1625.8 1019.7) scale(0.605 1)" font-size="18.5" fill="#f4f4f4"  stroke="#f4f4f4" stroke-width="0.3">53.45</text>
<text transform="translate(1660.4 1019.7) scale(0.605 1)" font-size="18.5" fill="#f4f4f4"  stroke="#f4f4f4" stroke-width="0.3">270.23</text>
<text transform="translate(1702.0 1019.7) scale(0.605 1)" font-size="18.5" fill="#f4f4f4"  stroke="#f4f4f4" stroke-width="0.3">86.28</text>
<text transform="translate(1750.4 1019.7) scale(0.605 1)" font-size="18.5" fill="#f4f4f4"  stroke="#f4f4f4" stroke-width="0.3">88.99</text>
<text transform="translate(1785.1 1019.7) scale(0.605 1)" font-size="18.5" fill="#f4f4f4"  stroke="#f4f4f4" stroke-width="0.3">97.46</text>
<text transform="translate(1838.3 1019.7) scale(0.605 1)" font-size="18.5" fill="#f4f4f4"  stroke="#f4f4f4" stroke-width="0.3">327.76</text>
<text transform="translate(1902.5 1019.7) scale(0.605 1)" font-size="18.5" fill="#f4f4f4"  stroke="#f4f4f4" stroke-width="0.3">33.09</text>
<rect x="540.8" y="1026.2" width="1380.0" height="29.5" fill="#414141" />
<rect x="532.0" y="1026.2" width="8.8" height="29.5" fill="#2b2b2b" />
<text transform="translate(544.0 1048.8) scale(0.596 1)" font-size="18.5" fill="#f4f4f4"  stroke="#f4f4f4" stroke-width="0.3">ΔE 2000</text>
<text transform="translate(623.5 1048.8) scale(0.605 1)" font-size="18.5" fill="#f4f4f4"  stroke="#f4f4f4" stroke-width="0.3">7.07</text>
<text transform="translate(664.7 1048.8) scale(0.605 1)" font-size="18.5" fill="#f4f4f4"  stroke="#f4f4f4" stroke-width="0.3">6.69</text>
<text transform="translate(707.4 1048.8) scale(0.605 1)" font-size="18.5" fill="#f4f4f4"  stroke="#f4f4f4" stroke-width="0.3">6.23</text>
<text transform="translate(749.7 1048.8) scale(0.605 1)" font-size="18.5" fill="#f4f4f4"  stroke="#f4f4f4" stroke-width="0.3">5.64</text>
<text transform="translate(792.3 1048.8) scale(0.605 1)" font-size="18.5" fill="#f4f4f4"  stroke="#f4f4f4" stroke-width="0.3">4.88</text>
<text transform="translate(835.0 1048.8) scale(0.605 1)" font-size="18.5" fill="#f4f4f4"  stroke="#f4f4f4" stroke-width="0.3">0.74</text>
<text transform="translate(870.0 1048.8) scale(0.605 1)" font-size="18.5" fill="#f4f4f4"  stroke="#f4f4f4" stroke-width="0.3">2.65</text>
<text transform="translate(920.3 1048.8) scale(0.605 1)" font-size="18.5" fill="#f4f4f4"  stroke="#f4f4f4" stroke-width="0.3">3.11</text>
<text transform="translate(972.1 1048.8) scale(0.605 1)" font-size="18.5" fill="#f4f4f4"  stroke="#f4f4f4" stroke-width="0.3">2.46</text>
<text transform="translate(1017.6 1048.8) scale(0.605 1)" font-size="18.5" fill="#f4f4f4"  stroke="#f4f4f4" stroke-width="0.3">1.48</text>
<text transform="translate(1057.4 1048.8) scale(0.605 1)" font-size="18.5" fill="#f4f4f4"  stroke="#f4f4f4" stroke-width="0.3">2.07</text>
<text transform="translate(1119.7 1048.8) scale(0.605 1)" font-size="18.5" fill="#f4f4f4"  stroke="#f4f4f4" stroke-width="0.3">2.64</text>
<text transform="translate(1186.4 1048.8) scale(0.605 1)" font-size="18.5" fill="#f4f4f4"  stroke="#f4f4f4" stroke-width="0.3">0.99</text>
<text transform="translate(1227.3 1048.8) scale(0.605 1)" font-size="18.5" fill="#f4f4f4"  stroke="#f4f4f4" stroke-width="0.3">2.62</text>
<text transform="translate(1295.8 1048.8) scale(0.605 1)" font-size="18.5" fill="#f4f4f4"  stroke="#f4f4f4" stroke-width="0.3">1.69</text>
<text transform="translate(1370.2 1048.8) scale(0.605 1)" font-size="18.5" fill="#f4f4f4"  stroke="#f4f4f4" stroke-width="0.3">3.87</text>
<text transform="translate(1407.0 1048.8) scale(0.605 1)" font-size="18.5" fill="#f4f4f4"  stroke="#f4f4f4" stroke-width="0.3">1.12</text>
<text transform="translate(1475.6 1048.8) scale(0.605 1)" font-size="18.5" fill="#f4f4f4"  stroke="#f4f4f4" stroke-width="0.3">1.34</text>
<text transform="translate(1549.9 1048.8) scale(0.605 1)" font-size="18.5" fill="#f4f4f4"  stroke="#f4f4f4" stroke-width="0.3">2.83</text>
<text transform="translate(1584.6 1048.8) scale(0.605 1)" font-size="18.5" fill="#f4f4f4"  stroke="#f4f4f4" stroke-width="0.3">0.98</text>
<text transform="translate(1625.8 1048.8) scale(0.605 1)" font-size="18.5" fill="#f4f4f4"  stroke="#f4f4f4" stroke-width="0.3">1.32</text>
<text transform="translate(1660.4 1048.8) scale(0.605 1)" font-size="18.5" fill="#f4f4f4"  stroke="#f4f4f4" stroke-width="0.3">1.65</text>
<text transform="translate(1702.0 1048.8) scale(0.605 1)" font-size="18.5" fill="#f4f4f4"  stroke="#f4f4f4" stroke-width="0.3">2.25</text>
<text transform="translate(1750.4 1048.8) scale(0.605 1)" font-size="18.5" fill="#f4f4f4"  stroke="#f4f4f4" stroke-width="0.3">2.76</text>
<text transform="translate(1785.1 1048.8) scale(0.605 1)" font-size="18.5" fill="#f4f4f4"  stroke="#f4f4f4" stroke-width="0.3">1.08</text>
<text transform="translate(1838.3 1048.8) scale(0.605 1)" font-size="18.5" fill="#f4f4f4"  stroke="#f4f4f4" stroke-width="0.3">1.15</text>
<text transform="translate(1902.5 1048.8) scale(0.605 1)" font-size="18.5" fill="#f4f4f4"  stroke="#f4f4f4" stroke-width="0.3">1.82</text>
<rect x="540.8" y="1055.4" width="1380.0" height="29.5" fill="#6f6f6f" />
<rect x="532.0" y="1055.4" width="8.8" height="29.5" fill="#474747" />
<text transform="translate(544.0 1078.0) scale(0.568 1)" font-size="18.5" fill="#f4f4f4"  stroke="#f4f4f4" stroke-width="0.3">dEITP</text>
<text transform="translate(623.5 1078.0) scale(0.605 1)" font-size="18.5" fill="#f4f4f4"  stroke="#f4f4f4" stroke-width="0.3">4.75</text>
<text transform="translate(664.7 1078.0) scale(0.605 1)" font-size="18.5" fill="#f4f4f4"  stroke="#f4f4f4" stroke-width="0.3">4.94</text>
<text transform="translate(707.4 1078.0) scale(0.605 1)" font-size="18.5" fill="#f4f4f4"  stroke="#f4f4f4" stroke-width="0.3">4.94</text>
<text transform="translate(749.7 1078.0) scale(0.605 1)" font-size="18.5" fill="#f4f4f4"  stroke="#f4f4f4" stroke-width="0.3">5.05</text>
<text transform="translate(792.3 1078.0) scale(0.605 1)" font-size="18.5" fill="#f4f4f4"  stroke="#f4f4f4" stroke-width="0.3">4.93</text>
<text transform="translate(835.0 1078.0) scale(0.605 1)" font-size="18.5" fill="#f4f4f4"  stroke="#f4f4f4" stroke-width="0.3">73.48</text>
<text transform="translate(870.0 1078.0) scale(0.605 1)" font-size="18.5" fill="#f4f4f4"  stroke="#f4f4f4" stroke-width="0.3">7.77</text>
<text transform="translate(920.3 1078.0) scale(0.605 1)" font-size="18.5" fill="#f4f4f4"  stroke="#f4f4f4" stroke-width="0.3">4.36</text>
<text transform="translate(972.1 1078.0) scale(0.605 1)" font-size="18.5" fill="#f4f4f4"  stroke="#f4f4f4" stroke-width="0.3">5.80</text>
<text transform="translate(1017.6 1078.0) scale(0.605 1)" font-size="18.5" fill="#f4f4f4"  stroke="#f4f4f4" stroke-width="0.3">5.69</text>
<text transform="translate(1057.4 1078.0) scale(0.605 1)" font-size="18.5" fill="#f4f4f4"  stroke="#f4f4f4" stroke-width="0.3">4.74</text>
<text transform="translate(1119.7 1078.0) scale(0.605 1)" font-size="18.5" fill="#f4f4f4"  stroke="#f4f4f4" stroke-width="0.3">4.96</text>
<text transform="translate(1186.4 1078.0) scale(0.605 1)" font-size="18.5" fill="#f4f4f4"  stroke="#f4f4f4" stroke-width="0.3">6.67</text>
<text transform="translate(1227.3 1078.0) scale(0.605 1)" font-size="18.5" fill="#f4f4f4"  stroke="#f4f4f4" stroke-width="0.3">8.92</text>
<text transform="translate(1295.8 1078.0) scale(0.605 1)" font-size="18.5" fill="#f4f4f4"  stroke="#f4f4f4" stroke-width="0.3">8.12</text>
<text transform="translate(1370.2 1078.0) scale(0.605 1)" font-size="18.5" fill="#f4f4f4"  stroke="#f4f4f4" stroke-width="0.3">18.70</text>
<text transform="translate(1407.0 1078.0) scale(0.605 1)" font-size="18.5" fill="#f4f4f4"  stroke="#f4f4f4" stroke-width="0.3">4.46</text>
<text transform="translate(1475.6 1078.0) scale(0.605 1)" font-size="18.5" fill="#f4f4f4"  stroke="#f4f4f4" stroke-width="0.3">6.69</text>
<text transform="translate(1549.9 1078.0) scale(0.605 1)" font-size="18.5" fill="#f4f4f4"  stroke="#f4f4f4" stroke-width="0.3">11.19</text>
<text transform="translate(1584.6 1078.0) scale(0.605 1)" font-size="18.5" fill="#f4f4f4"  stroke="#f4f4f4" stroke-width="0.3">3.90</text>
<text transform="translate(1625.8 1078.0) scale(0.605 1)" font-size="18.5" fill="#f4f4f4"  stroke="#f4f4f4" stroke-width="0.3">11.01</text>
<text transform="translate(1660.4 1078.0) scale(0.605 1)" font-size="18.5" fill="#f4f4f4"  stroke="#f4f4f4" stroke-width="0.3">6.94</text>
<text transform="translate(1702.0 1078.0) scale(0.605 1)" font-size="18.5" fill="#f4f4f4"  stroke="#f4f4f4" stroke-width="0.3">8.60</text>
<text transform="translate(1750.4 1078.0) scale(0.605 1)" font-size="18.5" fill="#f4f4f4"  stroke="#f4f4f4" stroke-width="0.3">4.50</text>
<text transform="translate(1785.1 1078.0) scale(0.605 1)" font-size="18.5" fill="#f4f4f4"  stroke="#f4f4f4" stroke-width="0.3">3.85</text>
<text transform="translate(1838.3 1078.0) scale(0.605 1)" font-size="18.5" fill="#f4f4f4"  stroke="#f4f4f4" stroke-width="0.3">7.14</text>
<text transform="translate(1902.5 1078.0) scale(0.605 1)" font-size="18.5" fill="#f4f4f4"  stroke="#f4f4f4" stroke-width="0.3">6.31</text>
</g>
<rect x="540.8" y="1084.6" width="1380.0" height="18.6" fill="#686868" />
<rect x="541.6" y="1085.6" width="10.4" height="16.4" rx="2" fill="#7e7e7e"/><path d="M549.6 1088.4 v10.8 l-5.6 -5.4z" fill="#444"/>
<rect x="1906" y="1085.6" width="12.5" height="16.4" rx="2" fill="#7e7e7e"/><path d="M1909.5 1088.4 v10.8 l5.6 -5.4z" fill="#444"/>
<rect x="554.5" y="1086" width="808" height="15.6" rx="7.8" fill="#464646"/>
</g>
<g id="cie-panel">
<rect x="1207.6" y="110.1" width="707.2" height="687.6" fill="#333" stroke="#a05a24" stroke-width="7.8"/>
<rect x="1249.0" y="143.5" width="660.0" height="615.0" fill="#232323" />
<g clip-path="url(#plotclip)"><g clip-path="url(#locus)" shape-rendering="crispEdges"><rect x="1283" y="156" width="56" height="2" fill="url(#d0)"/><rect x="1273" y="158" width="87" height="2" fill="url(#d1)"/><rect x="1269" y="160" width="109" height="2" fill="url(#d2)"/><rect x="1265" y="162" width="129" height="2" fill="url(#d3)"/><rect x="1262" y="164" width="148" height="2" fill="url(#d4)"/><rect x="1261" y="166" width="164" height="2" fill="url(#d5)"/><rect x="1259" y="168" width="181" height="2" fill="url(#d6)"/><rect x="1257" y="170" width="197" height="2" fill="url(#d7)"/><rect x="1256" y="172" width="213" height="2" fill="url(#d8)"/><rect x="1255" y="174" width="228" height="2" fill="url(#d9)"/><rect x="1254" y="176" width="244" height="2" fill="url(#d10)"/><rect x="1253" y="178" width="259" height="2" fill="url(#d11)"/><rect x="1253" y="180" width="273" height="2" fill="url(#d12)"/><rect x="1252" y="182" width="289" height="2" fill="url(#d13)"/><rect x="1251" y="184" width="304" height="2" fill="url(#d14)"/><rect x="1251" y="186" width="318" height="2" fill="url(#d15)"/><rect x="1251" y="188" width="333" height="2" fill="url(#d16)"/><rect x="1250" y="190" width="348" height="2" fill="url(#d17)"/><rect x="1250" y="192" width="362" height="2" fill="url(#d18)"/><rect x="1250" y="194" width="377" height="2" fill="url(#d19)"/><rect x="1250" y="196" width="391" height="2" fill="url(#d20)"/><rect x="1250" y="198" width="405" height="2" fill="url(#d21)"/><rect x="1250" y="200" width="420" height="2" fill="url(#d22)"/><rect x="1250" y="202" width="434" height="2" fill="url(#d23)"/><rect x="1250" y="204" width="448" height="2" fill="url(#d24)"/><rect x="1250" y="206" width="463" height="2" fill="url(#d25)"/><rect x="1250" y="208" width="477" height="2" fill="url(#d26)"/><rect x="1250" y="210" width="491" height="2" fill="url(#d27)"/><rect x="1250" y="212" width="506" height="2" fill="url(#d28)"/><rect x="1250" y="214" width="520" height="2" fill="url(#d29)"/><rect x="1250" y="216" width="534" height="2" fill="url(#d30)"/><rect x="1250" y="218" width="549" height="2" fill="url(#d31)"/><rect x="1250" y="220" width="563" height="2" fill="url(#d32)"/><rect x="1250" y="222" width="577" height="2" fill="url(#d33)"/><rect x="1251" y="224" width="591" height="2" fill="url(#d34)"/><rect x="1251" y="226" width="605" height="2" fill="url(#d35)"/><rect x="1251" y="228" width="619" height="2" fill="url(#d36)"/><rect x="1251" y="230" width="634" height="2" fill="url(#d37)"/><rect x="1252" y="232" width="647" height="2" fill="url(#d38)"/><rect x="1252" y="234" width="656" height="2" fill="url(#d39)"/><rect x="1252" y="236" width="656" height="2" fill="url(#d40)"/><rect x="1253" y="238" width="655" height="2" fill="url(#d41)"/><rect x="1253" y="240" width="655" height="2" fill="url(#d42)"/><rect x="1253" y="242" width="655" height="2" fill="url(#d43)"/><rect x="1254" y="244" width="654" height="2" fill="url(#d44)"/><rect x="1254" y="246" width="654" height="2" fill="url(#d45)"/><rect x="1255" y="248" width="653" height="2" fill="url(#d46)"/><rect x="1255" y="250" width="653" height="2" fill="url(#d47)"/><rect x="1255" y="252" width="653" height="2" fill="url(#d48)"/><rect x="1256" y="254" width="652" height="2" fill="url(#d49)"/><rect x="1256" y="256" width="652" height="2" fill="url(#d50)"/><rect x="1257" y="258" width="651" height="2" fill="url(#d51)"/><rect x="1257" y="260" width="651" height="2" fill="url(#d52)"/><rect x="1258" y="262" width="650" height="2" fill="url(#d53)"/><rect x="1258" y="264" width="650" height="2" fill="url(#d54)"/><rect x="1258" y="266" width="650" height="2" fill="url(#d55)"/><rect x="1259" y="268" width="649" height="2" fill="url(#d56)"/><rect x="1259" y="270" width="649" height="2" fill="url(#d57)"/><rect x="1260" y="272" width="648" height="2" fill="url(#d58)"/><rect x="1260" y="274" width="647" height="2" fill="url(#d59)"/><rect x="1261" y="276" width="644" height="2" fill="url(#d60)"/><rect x="1261" y="278" width="643" height="2" fill="url(#d61)"/><rect x="1262" y="280" width="640" height="2" fill="url(#d62)"/><rect x="1262" y="282" width="638" height="2" fill="url(#d63)"/><rect x="1263" y="284" width="636" height="2" fill="url(#d64)"/><rect x="1264" y="286" width="633" height="2" fill="url(#d65)"/><rect x="1264" y="288" width="632" height="2" fill="url(#d66)"/><rect x="1265" y="290" width="629" height="2" fill="url(#d67)"/><rect x="1265" y="292" width="627" height="2" fill="url(#d68)"/><rect x="1266" y="294" width="625" height="2" fill="url(#d69)"/><rect x="1266" y="296" width="623" height="2" fill="url(#d70)"/><rect x="1267" y="298" width="621" height="2" fill="url(#d71)"/><rect x="1268" y="300" width="618" height="2" fill="url(#d72)"/><rect x="1268" y="302" width="616" height="2" fill="url(#d73)"/><rect x="1269" y="304" width="614" height="2" fill="url(#d74)"/><rect x="1269" y="306" width="612" height="2" fill="url(#d75)"/><rect x="1270" y="308" width="610" height="2" fill="url(#d76)"/><rect x="1271" y="310" width="607" height="2" fill="url(#d77)"/><rect x="1271" y="312" width="605" height="2" fill="url(#d78)"/><rect x="1272" y="314" width="603" height="2" fill="url(#d79)"/><rect x="1272" y="316" width="601" height="2" fill="url(#d80)"/><rect x="1273" y="318" width="599" height="2" fill="url(#d81)"/><rect x="1274" y="320" width="596" height="2" fill="url(#d82)"/><rect x="1274" y="322" width="594" height="2" fill="url(#d83)"/><rect x="1275" y="324" width="592" height="2" fill="url(#d84)"/><rect x="1276" y="326" width="589" height="2" fill="url(#d85)"/><rect x="1276" y="328" width="588" height="2" fill="url(#d86)"/><rect x="1277" y="330" width="585" height="2" fill="url(#d87)"/><rect x="1278" y="332" width="582" height="2" fill="url(#d88)"/><rect x="1278" y="334" width="581" height="2" fill="url(#d89)"/><rect x="1279" y="336" width="578" height="2" fill="url(#d90)"/><rect x="1280" y="338" width="576" height="2" fill="url(#d91)"/><rect x="1280" y="340" width="574" height="2" fill="url(#d92)"/><rect x="1281" y="342" width="571" height="2" fill="url(#d93)"/><rect x="1282" y="344" width="569" height="2" fill="url(#d94)"/><rect x="1282" y="346" width="567" height="2" fill="url(#d95)"/><rect x="1283" y="348" width="565" height="2" fill="url(#d96)"/><rect x="1284" y="350" width="562" height="2" fill="url(#d97)"/><rect x="1284" y="352" width="560" height="2" fill="url(#d98)"/><rect x="1285" y="354" width="558" height="2" fill="url(#d99)"/><rect x="1286" y="356" width="555" height="2" fill="url(#d100)"/><rect x="1286" y="358" width="554" height="2" fill="url(#d101)"/><rect x="1287" y="360" width="551" height="2" fill="url(#d102)"/><rect x="1288" y="362" width="548" height="2" fill="url(#d103)"/><rect x="1289" y="364" width="546" height="2" fill="url(#d104)"/><rect x="1289" y="366" width="544" height="2" fill="url(#d105)"/><rect x="1290" y="368" width="541" height="2" fill="url(#d106)"/><rect x="1291" y="370" width="539" height="2" fill="url(#d107)"/><rect x="1292" y="372" width="536" height="2" fill="url(#d108)"/><rect x="1292" y="374" width="535" height="2" fill="url(#d109)"/><rect x="1293" y="376" width="532" height="2" fill="url(#d110)"/><rect x="1294" y="378" width="529" height="2" fill="url(#d111)"/><rect x="1295" y="380" width="527" height="2" fill="url(#d112)"/><rect x="1295" y="382" width="525" height="2" fill="url(#d113)"/><rect x="1296" y="384" width="523" height="2" fill="url(#d114)"/><rect x="1297" y="386" width="520" height="2" fill="url(#d115)"/><rect x="1298" y="388" width="517" height="2" fill="url(#d116)"/><rect x="1298" y="390" width="516" height="2" fill="url(#d117)"/><rect x="1299" y="392" width="513" height="2" fill="url(#d118)"/><rect x="1300" y="394" width="511" height="2" fill="url(#d119)"/><rect x="1301" y="396" width="508" height="2" fill="url(#d120)"/><rect x="1302" y="398" width="505" height="2" fill="url(#d121)"/><rect x="1302" y="400" width="504" height="2" fill="url(#d122)"/><rect x="1303" y="402" width="501" height="2" fill="url(#d123)"/><rect x="1304" y="404" width="499" height="2" fill="url(#d124)"/><rect x="1305" y="406" width="496" height="2" fill="url(#d125)"/><rect x="1306" y="408" width="493" height="2" fill="url(#d126)"/><rect x="1307" y="410" width="491" height="2" fill="url(#d127)"/><rect x="1307" y="412" width="489" height="2" fill="url(#d128)"/><rect x="1308" y="414" width="487" height="2" fill="url(#d129)"/><rect x="1309" y="416" width="484" height="2" fill="url(#d130)"/><rect x="1310" y="418" width="481" height="2" fill="url(#d131)"/><rect x="1311" y="420" width="479" height="2" fill="url(#d132)"/><rect x="1312" y="422" width="476" height="2" fill="url(#d133)"/><rect x="1313" y="424" width="474" height="2" fill="url(#d134)"/><rect x="1313" y="426" width="472" height="2" fill="url(#d135)"/><rect x="1314" y="428" width="469" height="2" fill="url(#d136)"/><rect x="1315" y="430" width="467" height="2" fill="url(#d137)"/><rect x="1316" y="432" width="464" height="2" fill="url(#d138)"/><rect x="1317" y="434" width="462" height="2" fill="url(#d139)"/><rect x="1318" y="436" width="459" height="2" fill="url(#d140)"/><rect x="1319" y="438" width="456" height="2" fill="url(#d141)"/><rect x="1320" y="440" width="454" height="2" fill="url(#d142)"/><rect x="1321" y="442" width="451" height="2" fill="url(#d143)"/><rect x="1322" y="444" width="449" height="2" fill="url(#d144)"/><rect x="1322" y="446" width="447" height="2" fill="url(#d145)"/><rect x="1323" y="448" width="444" height="2" fill="url(#d146)"/><rect x="1324" y="450" width="442" height="2" fill="url(#d147)"/><rect x="1325" y="452" width="439" height="2" fill="url(#d148)"/><rect x="1326" y="454" width="437" height="2" fill="url(#d149)"/><rect x="1327" y="456" width="434" height="2" fill="url(#d150)"/><rect x="1328" y="458" width="431" height="2" fill="url(#d151)"/><rect x="1329" y="460" width="429" height="2" fill="url(#d152)"/><rect x="1330" y="462" width="426" height="2" fill="url(#d153)"/><rect x="1331" y="464" width="424" height="2" fill="url(#d154)"/><rect x="1332" y="466" width="421" height="2" fill="url(#d155)"/><rect x="1333" y="468" width="418" height="2" fill="url(#d156)"/><rect x="1334" y="470" width="416" height="2" fill="url(#d157)"/><rect x="1335" y="472" width="413" height="2" fill="url(#d158)"/><rect x="1336" y="474" width="411" height="2" fill="url(#d159)"/><rect x="1337" y="476" width="408" height="2" fill="url(#d160)"/><rect x="1338" y="478" width="405" height="2" fill="url(#d161)"/><rect x="1339" y="480" width="403" height="2" fill="url(#d162)"/><rect x="1340" y="482" width="400" height="2" fill="url(#d163)"/><rect x="1341" y="484" width="398" height="2" fill="url(#d164)"/><rect x="1342" y="486" width="395" height="2" fill="url(#d165)"/><rect x="1343" y="488" width="392" height="2" fill="url(#d166)"/><rect x="1344" y="490" width="390" height="2" fill="url(#d167)"/><rect x="1345" y="492" width="387" height="2" fill="url(#d168)"/><rect x="1346" y="494" width="385" height="2" fill="url(#d169)"/><rect x="1347" y="496" width="382" height="2" fill="url(#d170)"/><rect x="1348" y="498" width="379" height="2" fill="url(#d171)"/><rect x="1349" y="500" width="377" height="2" fill="url(#d172)"/><rect x="1350" y="502" width="374" height="2" fill="url(#d173)"/><rect x="1351" y="504" width="372" height="2" fill="url(#d174)"/><rect x="1352" y="506" width="369" height="2" fill="url(#d175)"/><rect x="1353" y="508" width="366" height="2" fill="url(#d176)"/><rect x="1354" y="510" width="364" height="2" fill="url(#d177)"/><rect x="1355" y="512" width="361" height="2" fill="url(#d178)"/><rect x="1356" y="514" width="359" height="2" fill="url(#d179)"/><rect x="1357" y="516" width="356" height="2" fill="url(#d180)"/><rect x="1358" y="518" width="353" height="2" fill="url(#d181)"/><rect x="1359" y="520" width="351" height="2" fill="url(#d182)"/><rect x="1360" y="522" width="348" height="2" fill="url(#d183)"/><rect x="1361" y="524" width="345" height="2" fill="url(#d184)"/><rect x="1362" y="526" width="343" height="2" fill="url(#d185)"/><rect x="1363" y="528" width="340" height="2" fill="url(#d186)"/><rect x="1364" y="530" width="338" height="2" fill="url(#d187)"/><rect x="1365" y="532" width="335" height="2" fill="url(#d188)"/><rect x="1366" y="534" width="332" height="2" fill="url(#d189)"/><rect x="1367" y="536" width="330" height="2" fill="url(#d190)"/><rect x="1368" y="538" width="327" height="2" fill="url(#d191)"/><rect x="1369" y="540" width="325" height="2" fill="url(#d192)"/><rect x="1370" y="542" width="322" height="2" fill="url(#d193)"/><rect x="1371" y="544" width="319" height="2" fill="url(#d194)"/><rect x="1372" y="546" width="317" height="2" fill="url(#d195)"/><rect x="1374" y="548" width="313" height="2" fill="url(#d196)"/><rect x="1375" y="550" width="311" height="2" fill="url(#d197)"/><rect x="1376" y="552" width="308" height="2" fill="url(#d198)"/><rect x="1377" y="554" width="305" height="2" fill="url(#d199)"/><rect x="1378" y="556" width="303" height="2" fill="url(#d200)"/><rect x="1379" y="558" width="300" height="2" fill="url(#d201)"/><rect x="1380" y="560" width="298" height="2" fill="url(#d202)"/><rect x="1381" y="562" width="295" height="2" fill="url(#d203)"/><rect x="1382" y="564" width="292" height="2" fill="url(#d204)"/><rect x="1384" y="566" width="289" height="2" fill="url(#d205)"/><rect x="1385" y="568" width="286" height="2" fill="url(#d206)"/><rect x="1386" y="570" width="284" height="2" fill="url(#d207)"/><rect x="1387" y="572" width="281" height="2" fill="url(#d208)"/><rect x="1388" y="574" width="278" height="2" fill="url(#d209)"/><rect x="1389" y="576" width="276" height="2" fill="url(#d210)"/><rect x="1391" y="578" width="272" height="2" fill="url(#d211)"/><rect x="1392" y="580" width="270" height="2" fill="url(#d212)"/><rect x="1393" y="582" width="267" height="2" fill="url(#d213)"/><rect x="1394" y="584" width="264" height="2" fill="url(#d214)"/><rect x="1395" y="586" width="262" height="2" fill="url(#d215)"/><rect x="1397" y="588" width="258" height="2" fill="url(#d216)"/><rect x="1398" y="590" width="256" height="2" fill="url(#d217)"/><rect x="1399" y="592" width="253" height="2" fill="url(#d218)"/><rect x="1400" y="594" width="250" height="2" fill="url(#d219)"/><rect x="1402" y="596" width="247" height="2" fill="url(#d220)"/><rect x="1403" y="598" width="244" height="2" fill="url(#d221)"/><rect x="1404" y="600" width="242" height="2" fill="url(#d222)"/><rect x="1405" y="602" width="239" height="2" fill="url(#d223)"/><rect x="1407" y="604" width="235" height="2" fill="url(#d224)"/><rect x="1408" y="606" width="233" height="2" fill="url(#d225)"/><rect x="1409" y="608" width="230" height="2" fill="url(#d226)"/><rect x="1410" y="610" width="228" height="2" fill="url(#d227)"/><rect x="1412" y="612" width="224" height="2" fill="url(#d228)"/><rect x="1413" y="614" width="221" height="2" fill="url(#d229)"/><rect x="1414" y="616" width="219" height="2" fill="url(#d230)"/><rect x="1416" y="618" width="215" height="2" fill="url(#d231)"/><rect x="1417" y="620" width="213" height="2" fill="url(#d232)"/><rect x="1418" y="622" width="210" height="2" fill="url(#d233)"/><rect x="1420" y="624" width="206" height="2" fill="url(#d234)"/><rect x="1421" y="626" width="204" height="2" fill="url(#d235)"/><rect x="1422" y="628" width="201" height="2" fill="url(#d236)"/><rect x="1424" y="630" width="198" height="2" fill="url(#d237)"/><rect x="1425" y="632" width="195" height="2" fill="url(#d238)"/><rect x="1427" y="634" width="191" height="2" fill="url(#d239)"/><rect x="1428" y="636" width="189" height="2" fill="url(#d240)"/><rect x="1430" y="638" width="185" height="2" fill="url(#d241)"/><rect x="1431" y="640" width="183" height="2" fill="url(#d242)"/><rect x="1432" y="642" width="180" height="2" fill="url(#d243)"/><rect x="1434" y="644" width="176" height="2" fill="url(#d244)"/><rect x="1435" y="646" width="174" height="2" fill="url(#d245)"/><rect x="1437" y="648" width="170" height="2" fill="url(#d246)"/><rect x="1439" y="650" width="167" height="2" fill="url(#d247)"/><rect x="1440" y="652" width="164" height="2" fill="url(#d248)"/><rect x="1442" y="654" width="160" height="2" fill="url(#d249)"/><rect x="1443" y="656" width="158" height="2" fill="url(#d250)"/><rect x="1445" y="658" width="154" height="2" fill="url(#d251)"/><rect x="1447" y="660" width="151" height="2" fill="url(#d252)"/><rect x="1448" y="662" width="148" height="2" fill="url(#d253)"/><rect x="1450" y="664" width="144" height="2" fill="url(#d254)"/><rect x="1452" y="666" width="141" height="2" fill="url(#d255)"/><rect x="1453" y="668" width="138" height="2" fill="url(#d256)"/><rect x="1455" y="670" width="135" height="2" fill="url(#d257)"/><rect x="1457" y="672" width="131" height="2" fill="url(#d258)"/><rect x="1459" y="674" width="127" height="2" fill="url(#d259)"/><rect x="1460" y="676" width="125" height="2" fill="url(#d260)"/><rect x="1462" y="678" width="121" height="2" fill="url(#d261)"/><rect x="1464" y="680" width="118" height="2" fill="url(#d262)"/><rect x="1466" y="682" width="114" height="2" fill="url(#d263)"/><rect x="1468" y="684" width="110" height="2" fill="url(#d264)"/><rect x="1470" y="686" width="107" height="2" fill="url(#d265)"/><rect x="1472" y="688" width="103" height="2" fill="url(#d266)"/><rect x="1474" y="690" width="99" height="2" fill="url(#d267)"/><rect x="1476" y="692" width="96" height="2" fill="url(#d268)"/><rect x="1477" y="694" width="93" height="2" fill="url(#d269)"/><rect x="1479" y="696" width="90" height="2" fill="url(#d270)"/><rect x="1481" y="698" width="86" height="2" fill="url(#d271)"/><rect x="1483" y="700" width="82" height="2" fill="url(#d272)"/><rect x="1485" y="702" width="79" height="2" fill="url(#d273)"/><rect x="1487" y="704" width="75" height="2" fill="url(#d274)"/><rect x="1489" y="706" width="72" height="2" fill="url(#d275)"/><rect x="1491" y="708" width="68" height="2" fill="url(#d276)"/><rect x="1493" y="710" width="64" height="2" fill="url(#d277)"/><rect x="1495" y="712" width="61" height="2" fill="url(#d278)"/><rect x="1497" y="714" width="57" height="2" fill="url(#d279)"/><rect x="1499" y="716" width="54" height="2" fill="url(#d280)"/><rect x="1501" y="718" width="50" height="2" fill="url(#d281)"/><rect x="1503" y="720" width="46" height="2" fill="url(#d282)"/><rect x="1505" y="722" width="43" height="2" fill="url(#d283)"/><rect x="1507" y="724" width="39" height="2" fill="url(#d284)"/><rect x="1509" y="726" width="36" height="2" fill="url(#d285)"/><rect x="1511" y="728" width="32" height="2" fill="url(#d286)"/><rect x="1513" y="730" width="28" height="2" fill="url(#d287)"/><rect x="1515" y="732" width="25" height="2" fill="url(#d288)"/><rect x="1517" y="734" width="21" height="2" fill="url(#d289)"/><rect x="1519" y="736" width="18" height="2" fill="url(#d290)"/><rect x="1521" y="738" width="14" height="2" fill="url(#d291)"/><rect x="1524" y="740" width="9" height="2" fill="url(#d292)"/></g><g clip-path="url(#tri)" shape-rendering="crispEdges"><rect x="1385" y="181" width="15" height="2" fill="url(#t0)"/><rect x="1385" y="183" width="33" height="2" fill="url(#t1)"/><rect x="1386" y="185" width="49" height="2" fill="url(#t2)"/><rect x="1386" y="187" width="67" height="2" fill="url(#t3)"/><rect x="1386" y="189" width="85" height="2" fill="url(#t4)"/><rect x="1386" y="191" width="102" height="2" fill="url(#t5)"/><rect x="1387" y="193" width="119" height="2" fill="url(#t6)"/><rect x="1387" y="195" width="136" height="2" fill="url(#t7)"/><rect x="1387" y="197" width="154" height="2" fill="url(#t8)"/><rect x="1387" y="199" width="172" height="2" fill="url(#t9)"/><rect x="1388" y="201" width="188" height="2" fill="url(#t10)"/><rect x="1388" y="203" width="206" height="2" fill="url(#t11)"/><rect x="1388" y="205" width="224" height="2" fill="url(#t12)"/><rect x="1389" y="207" width="240" height="2" fill="url(#t13)"/><rect x="1389" y="209" width="258" height="2" fill="url(#t14)"/><rect x="1389" y="211" width="275" height="2" fill="url(#t15)"/><rect x="1389" y="213" width="293" height="2" fill="url(#t16)"/><rect x="1390" y="215" width="310" height="2" fill="url(#t17)"/><rect x="1390" y="217" width="327" height="2" fill="url(#t18)"/><rect x="1390" y="219" width="345" height="2" fill="url(#t19)"/><rect x="1390" y="221" width="355" height="2" fill="url(#t20)"/><rect x="1391" y="223" width="354" height="2" fill="url(#t21)"/><rect x="1391" y="225" width="352" height="2" fill="url(#t22)"/><rect x="1391" y="227" width="351" height="2" fill="url(#t23)"/><rect x="1391" y="229" width="349" height="2" fill="url(#t24)"/><rect x="1392" y="231" width="346" height="2" fill="url(#t25)"/><rect x="1392" y="233" width="345" height="2" fill="url(#t26)"/><rect x="1392" y="235" width="343" height="2" fill="url(#t27)"/><rect x="1393" y="237" width="340" height="2" fill="url(#t28)"/><rect x="1393" y="239" width="339" height="2" fill="url(#t29)"/><rect x="1393" y="241" width="337" height="2" fill="url(#t30)"/><rect x="1393" y="243" width="336" height="2" fill="url(#t31)"/><rect x="1394" y="245" width="333" height="2" fill="url(#t32)"/><rect x="1394" y="247" width="331" height="2" fill="url(#t33)"/><rect x="1394" y="249" width="330" height="2" fill="url(#t34)"/><rect x="1394" y="251" width="328" height="2" fill="url(#t35)"/><rect x="1395" y="253" width="326" height="2" fill="url(#t36)"/><rect x="1395" y="255" width="324" height="2" fill="url(#t37)"/><rect x="1395" y="257" width="322" height="2" fill="url(#t38)"/><rect x="1395" y="259" width="321" height="2" fill="url(#t39)"/><rect x="1396" y="261" width="318" height="2" fill="url(#t40)"/><rect x="1396" y="263" width="316" height="2" fill="url(#t41)"/><rect x="1396" y="265" width="315" height="2" fill="url(#t42)"/><rect x="1397" y="267" width="312" height="2" fill="url(#t43)"/><rect x="1397" y="269" width="311" height="2" fill="url(#t44)"/><rect x="1397" y="271" width="309" height="2" fill="url(#t45)"/><rect x="1397" y="273" width="307" height="2" fill="url(#t46)"/><rect x="1398" y="275" width="305" height="2" fill="url(#t47)"/><rect x="1398" y="277" width="303" height="2" fill="url(#t48)"/><rect x="1398" y="279" width="302" height="2" fill="url(#t49)"/><rect x="1398" y="281" width="300" height="2" fill="url(#t50)"/><rect x="1399" y="283" width="297" height="2" fill="url(#t51)"/><rect x="1399" y="285" width="296" height="2" fill="url(#t52)"/><rect x="1399" y="287" width="294" height="2" fill="url(#t53)"/><rect x="1399" y="289" width="292" height="2" fill="url(#t54)"/><rect x="1400" y="291" width="290" height="2" fill="url(#t55)"/><rect x="1400" y="293" width="288" height="2" fill="url(#t56)"/><rect x="1400" y="295" width="287" height="2" fill="url(#t57)"/><rect x="1401" y="297" width="284" height="2" fill="url(#t58)"/><rect x="1401" y="299" width="282" height="2" fill="url(#t59)"/><rect x="1401" y="301" width="281" height="2" fill="url(#t60)"/><rect x="1401" y="303" width="279" height="2" fill="url(#t61)"/><rect x="1402" y="305" width="277" height="2" fill="url(#t62)"/><rect x="1402" y="307" width="275" height="2" fill="url(#t63)"/><rect x="1402" y="309" width="273" height="2" fill="url(#t64)"/><rect x="1402" y="311" width="272" height="2" fill="url(#t65)"/><rect x="1403" y="313" width="269" height="2" fill="url(#t66)"/><rect x="1403" y="315" width="267" height="2" fill="url(#t67)"/><rect x="1403" y="317" width="266" height="2" fill="url(#t68)"/><rect x="1403" y="319" width="264" height="2" fill="url(#t69)"/><rect x="1404" y="321" width="262" height="2" fill="url(#t70)"/><rect x="1404" y="323" width="260" height="2" fill="url(#t71)"/><rect x="1404" y="325" width="258" height="2" fill="url(#t72)"/><rect x="1405" y="327" width="256" height="2" fill="url(#t73)"/><rect x="1405" y="329" width="254" height="2" fill="url(#t74)"/><rect x="1405" y="331" width="253" height="2" fill="url(#t75)"/><rect x="1405" y="333" width="251" height="2" fill="url(#t76)"/><rect x="1406" y="335" width="248" height="2" fill="url(#t77)"/><rect x="1406" y="337" width="247" height="2" fill="url(#t78)"/><rect x="1406" y="339" width="245" height="2" fill="url(#t79)"/><rect x="1406" y="341" width="243" height="2" fill="url(#t80)"/><rect x="1407" y="343" width="241" height="2" fill="url(#t81)"/><rect x="1407" y="345" width="239" height="2" fill="url(#t82)"/><rect x="1407" y="347" width="238" height="2" fill="url(#t83)"/><rect x="1407" y="349" width="236" height="2" fill="url(#t84)"/><rect x="1408" y="351" width="233" height="2" fill="url(#t85)"/><rect x="1408" y="353" width="232" height="2" fill="url(#t86)"/><rect x="1408" y="355" width="230" height="2" fill="url(#t87)"/><rect x="1409" y="357" width="228" height="2" fill="url(#t88)"/><rect x="1409" y="359" width="226" height="2" fill="url(#t89)"/><rect x="1409" y="361" width="224" height="2" fill="url(#t90)"/><rect x="1409" y="363" width="223" height="2" fill="url(#t91)"/><rect x="1410" y="365" width="220" height="2" fill="url(#t92)"/><rect x="1410" y="367" width="218" height="2" fill="url(#t93)"/><rect x="1410" y="369" width="217" height="2" fill="url(#t94)"/><rect x="1410" y="371" width="215" height="2" fill="url(#t95)"/><rect x="1411" y="373" width="213" height="2" fill="url(#t96)"/><rect x="1411" y="375" width="211" height="2" fill="url(#t97)"/><rect x="1411" y="377" width="209" height="2" fill="url(#t98)"/><rect x="1411" y="379" width="208" height="2" fill="url(#t99)"/><rect x="1412" y="381" width="205" height="2" fill="url(#t100)"/><rect x="1412" y="383" width="204" height="2" fill="url(#t101)"/><rect x="1412" y="385" width="202" height="2" fill="url(#t102)"/><rect x="1413" y="387" width="199" height="2" fill="url(#t103)"/><rect x="1413" y="389" width="198" height="2" fill="url(#t104)"/><rect x="1413" y="391" width="196" height="2" fill="url(#t105)"/><rect x="1413" y="393" width="194" height="2" fill="url(#t106)"/><rect x="1414" y="395" width="192" height="2" fill="url(#t107)"/><rect x="1414" y="397" width="190" height="2" fill="url(#t108)"/><rect x="1414" y="399" width="189" height="2" fill="url(#t109)"/><rect x="1414" y="401" width="187" height="2" fill="url(#t110)"/><rect x="1415" y="403" width="184" height="2" fill="url(#t111)"/><rect x="1415" y="405" width="183" height="2" fill="url(#t112)"/><rect x="1415" y="407" width="181" height="2" fill="url(#t113)"/><rect x="1415" y="409" width="180" height="2" fill="url(#t114)"/><rect x="1416" y="411" width="177" height="2" fill="url(#t115)"/><rect x="1416" y="413" width="175" height="2" fill="url(#t116)"/><rect x="1416" y="415" width="174" height="2" fill="url(#t117)"/><rect x="1417" y="417" width="171" height="2" fill="url(#t118)"/><rect x="1417" y="419" width="169" height="2" fill="url(#t119)"/><rect x="1417" y="421" width="168" height="2" fill="url(#t120)"/><rect x="1417" y="423" width="166" height="2" fill="url(#t121)"/><rect x="1418" y="425" width="164" height="2" fill="url(#t122)"/><rect x="1418" y="427" width="162" height="2" fill="url(#t123)"/><rect x="1418" y="429" width="160" height="2" fill="url(#t124)"/><rect x="1418" y="431" width="159" height="2" fill="url(#t125)"/><rect x="1419" y="433" width="156" height="2" fill="url(#t126)"/><rect x="1419" y="435" width="155" height="2" fill="url(#t127)"/><rect x="1419" y="437" width="153" height="2" fill="url(#t128)"/><rect x="1419" y="439" width="151" height="2" fill="url(#t129)"/><rect x="1420" y="441" width="149" height="2" fill="url(#t130)"/><rect x="1420" y="443" width="147" height="2" fill="url(#t131)"/><rect x="1420" y="445" width="145" height="2" fill="url(#t132)"/><rect x="1421" y="447" width="143" height="2" fill="url(#t133)"/><rect x="1421" y="449" width="141" height="2" fill="url(#t134)"/><rect x="1421" y="451" width="140" height="2" fill="url(#t135)"/><rect x="1421" y="453" width="138" height="2" fill="url(#t136)"/><rect x="1422" y="455" width="135" height="2" fill="url(#t137)"/><rect x="1422" y="457" width="134" height="2" fill="url(#t138)"/><rect x="1422" y="459" width="132" height="2" fill="url(#t139)"/><rect x="1422" y="461" width="131" height="2" fill="url(#t140)"/><rect x="1423" y="463" width="128" height="2" fill="url(#t141)"/><rect x="1423" y="465" width="126" height="2" fill="url(#t142)"/><rect x="1423" y="467" width="125" height="2" fill="url(#t143)"/><rect x="1423" y="469" width="123" height="2" fill="url(#t144)"/><rect x="1424" y="471" width="120" height="2" fill="url(#t145)"/><rect x="1424" y="473" width="119" height="2" fill="url(#t146)"/><rect x="1424" y="475" width="117" height="2" fill="url(#t147)"/><rect x="1425" y="477" width="115" height="2" fill="url(#t148)"/><rect x="1425" y="479" width="113" height="2" fill="url(#t149)"/><rect x="1425" y="481" width="111" height="2" fill="url(#t150)"/><rect x="1425" y="483" width="110" height="2" fill="url(#t151)"/><rect x="1426" y="485" width="107" height="2" fill="url(#t152)"/><rect x="1426" y="487" width="106" height="2" fill="url(#t153)"/><rect x="1426" y="489" width="104" height="2" fill="url(#t154)"/><rect x="1426" y="491" width="102" height="2" fill="url(#t155)"/><rect x="1427" y="493" width="100" height="2" fill="url(#t156)"/><rect x="1427" y="495" width="98" height="2" fill="url(#t157)"/><rect x="1427" y="497" width="96" height="2" fill="url(#t158)"/><rect x="1427" y="499" width="95" height="2" fill="url(#t159)"/><rect x="1428" y="501" width="92" height="2" fill="url(#t160)"/><rect x="1428" y="503" width="91" height="2" fill="url(#t161)"/><rect x="1428" y="505" width="89" height="2" fill="url(#t162)"/><rect x="1429" y="507" width="86" height="2" fill="url(#t163)"/><rect x="1429" y="509" width="85" height="2" fill="url(#t164)"/><rect x="1429" y="511" width="83" height="2" fill="url(#t165)"/><rect x="1429" y="513" width="82" height="2" fill="url(#t166)"/><rect x="1430" y="515" width="79" height="2" fill="url(#t167)"/><rect x="1430" y="517" width="77" height="2" fill="url(#t168)"/><rect x="1430" y="519" width="76" height="2" fill="url(#t169)"/><rect x="1430" y="521" width="74" height="2" fill="url(#t170)"/><rect x="1431" y="523" width="71" height="2" fill="url(#t171)"/><rect x="1431" y="525" width="70" height="2" fill="url(#t172)"/><rect x="1431" y="527" width="68" height="2" fill="url(#t173)"/><rect x="1431" y="529" width="67" height="2" fill="url(#t174)"/><rect x="1432" y="531" width="64" height="2" fill="url(#t175)"/><rect x="1432" y="533" width="62" height="2" fill="url(#t176)"/><rect x="1432" y="535" width="61" height="2" fill="url(#t177)"/><rect x="1433" y="537" width="58" height="2" fill="url(#t178)"/><rect x="1433" y="539" width="57" height="2" fill="url(#t179)"/><rect x="1433" y="541" width="55" height="2" fill="url(#t180)"/><rect x="1433" y="543" width="53" height="2" fill="url(#t181)"/><rect x="1434" y="545" width="51" height="2" fill="url(#t182)"/><rect x="1434" y="547" width="49" height="2" fill="url(#t183)"/><rect x="1434" y="549" width="47" height="2" fill="url(#t184)"/><rect x="1434" y="551" width="46" height="2" fill="url(#t185)"/><rect x="1435" y="553" width="43" height="2" fill="url(#t186)"/><rect x="1435" y="555" width="42" height="2" fill="url(#t187)"/><rect x="1435" y="557" width="40" height="2" fill="url(#t188)"/><rect x="1435" y="559" width="38" height="2" fill="url(#t189)"/><rect x="1436" y="561" width="36" height="2" fill="url(#t190)"/><rect x="1436" y="563" width="34" height="2" fill="url(#t191)"/><rect x="1436" y="565" width="33" height="2" fill="url(#t192)"/><rect x="1437" y="567" width="30" height="2" fill="url(#t193)"/><rect x="1437" y="569" width="28" height="2" fill="url(#t194)"/><rect x="1437" y="571" width="27" height="2" fill="url(#t195)"/><rect x="1437" y="573" width="25" height="2" fill="url(#t196)"/><rect x="1438" y="575" width="22" height="2" fill="url(#t197)"/><rect x="1438" y="577" width="21" height="2" fill="url(#t198)"/><rect x="1438" y="579" width="19" height="2" fill="url(#t199)"/><rect x="1438" y="581" width="18" height="2" fill="url(#t200)"/><rect x="1439" y="583" width="15" height="2" fill="url(#t201)"/><rect x="1439" y="585" width="13" height="2" fill="url(#t202)"/><rect x="1439" y="587" width="12" height="2" fill="url(#t203)"/><rect x="1439" y="589" width="10" height="2" fill="url(#t204)"/><rect x="1440" y="591" width="8" height="2" fill="url(#t205)"/><rect x="1440" y="593" width="6" height="2" fill="url(#t206)"/><rect x="1440" y="595" width="4" height="2" fill="url(#t207)"/></g></g>
<path d="M1250 758 V144.2 H1908.6 V758" fill="none" stroke="#999" stroke-width="1.6"/>
<line x1="1249.0" y1="757.9" x2="1909.4" y2="757.9" stroke="#aaa" stroke-width="1.6" />
<text transform="translate(1561.5 137.3) scale(0.804 1)" font-size="18.5" fill="#ccc" text-anchor="middle"  stroke="#ccc" stroke-width="0.25">CIE 1976 u&#x27;v&#x27;</text>
<line x1="1243.2" y1="757.9" x2="1249.3" y2="757.9" stroke="#ddd" stroke-width="1.6" />
<text transform="translate(1242.6 764.8) scale(0.867 1)" font-size="17" fill="#ccc" text-anchor="end"  stroke="#ccc" stroke-width="0.25">0</text>
<line x1="1249.5" y1="758.0" x2="1249.5" y2="765.6" stroke="#ddd" stroke-width="1.5" />
<text transform="translate(1249.5 784.6) scale(0.867 1)" font-size="17" fill="#ccc" text-anchor="middle"  stroke="#ccc" stroke-width="0.25">0</text>
<line x1="1243.2" y1="707.4" x2="1249.3" y2="707.4" stroke="#ddd" stroke-width="1.6" />
<text transform="translate(1242.6 714.3) scale(0.867 1)" font-size="17" fill="#ccc" text-anchor="end"  stroke="#ccc" stroke-width="0.25">0.05</text>
<line x1="1304.3" y1="758.0" x2="1304.3" y2="765.6" stroke="#ddd" stroke-width="1.5" />
<text transform="translate(1304.3 784.6) scale(0.867 1)" font-size="17" fill="#ccc" text-anchor="middle"  stroke="#ccc" stroke-width="0.25">0.05</text>
<line x1="1243.2" y1="656.3" x2="1249.3" y2="656.3" stroke="#ddd" stroke-width="1.6" />
<text transform="translate(1242.6 663.2) scale(0.867 1)" font-size="17" fill="#ccc" text-anchor="end"  stroke="#ccc" stroke-width="0.25">0.1</text>
<line x1="1359.2" y1="758.0" x2="1359.2" y2="765.6" stroke="#ddd" stroke-width="1.5" />
<text transform="translate(1359.2 784.6) scale(0.867 1)" font-size="17" fill="#ccc" text-anchor="middle"  stroke="#ccc" stroke-width="0.25">0.1</text>
<line x1="1243.2" y1="605.2" x2="1249.3" y2="605.2" stroke="#ddd" stroke-width="1.6" />
<text transform="translate(1242.6 612.1) scale(0.867 1)" font-size="17" fill="#ccc" text-anchor="end"  stroke="#ccc" stroke-width="0.25">0.15</text>
<line x1="1414.0" y1="758.0" x2="1414.0" y2="765.6" stroke="#ddd" stroke-width="1.5" />
<text transform="translate(1414.0 784.6) scale(0.867 1)" font-size="17" fill="#ccc" text-anchor="middle"  stroke="#ccc" stroke-width="0.25">0.15</text>
<line x1="1243.2" y1="554.2" x2="1249.3" y2="554.2" stroke="#ddd" stroke-width="1.6" />
<text transform="translate(1242.6 561.1) scale(0.867 1)" font-size="17" fill="#ccc" text-anchor="end"  stroke="#ccc" stroke-width="0.25">0.2</text>
<line x1="1468.9" y1="758.0" x2="1468.9" y2="765.6" stroke="#ddd" stroke-width="1.5" />
<text transform="translate(1468.9 784.6) scale(0.867 1)" font-size="17" fill="#ccc" text-anchor="middle"  stroke="#ccc" stroke-width="0.25">0.2</text>
<line x1="1243.2" y1="503.4" x2="1249.3" y2="503.4" stroke="#ddd" stroke-width="1.6" />
<text transform="translate(1242.6 510.3) scale(0.867 1)" font-size="17" fill="#ccc" text-anchor="end"  stroke="#ccc" stroke-width="0.25">0.25</text>
<line x1="1523.8" y1="758.0" x2="1523.8" y2="765.6" stroke="#ddd" stroke-width="1.5" />
<text transform="translate(1523.8 784.6) scale(0.867 1)" font-size="17" fill="#ccc" text-anchor="middle"  stroke="#ccc" stroke-width="0.25">0.25</text>
<line x1="1243.2" y1="452.6" x2="1249.3" y2="452.6" stroke="#ddd" stroke-width="1.6" />
<text transform="translate(1242.6 459.5) scale(0.867 1)" font-size="17" fill="#ccc" text-anchor="end"  stroke="#ccc" stroke-width="0.25">0.3</text>
<line x1="1578.6" y1="758.0" x2="1578.6" y2="765.6" stroke="#ddd" stroke-width="1.5" />
<text transform="translate(1578.6 784.6) scale(0.867 1)" font-size="17" fill="#ccc" text-anchor="middle"  stroke="#ccc" stroke-width="0.25">0.3</text>
<line x1="1243.2" y1="401.9" x2="1249.3" y2="401.9" stroke="#ddd" stroke-width="1.6" />
<text transform="translate(1242.6 408.8) scale(0.867 1)" font-size="17" fill="#ccc" text-anchor="end"  stroke="#ccc" stroke-width="0.25">0.35</text>
<line x1="1633.5" y1="758.0" x2="1633.5" y2="765.6" stroke="#ddd" stroke-width="1.5" />
<text transform="translate(1633.5 784.6) scale(0.867 1)" font-size="17" fill="#ccc" text-anchor="middle"  stroke="#ccc" stroke-width="0.25">0.35</text>
<line x1="1243.2" y1="348.9" x2="1249.3" y2="348.9" stroke="#ddd" stroke-width="1.6" />
<text transform="translate(1242.6 355.8) scale(0.867 1)" font-size="17" fill="#ccc" text-anchor="end"  stroke="#ccc" stroke-width="0.25">0.4</text>
<line x1="1688.3" y1="758.0" x2="1688.3" y2="765.6" stroke="#ddd" stroke-width="1.5" />
<text transform="translate(1688.3 784.6) scale(0.867 1)" font-size="17" fill="#ccc" text-anchor="middle"  stroke="#ccc" stroke-width="0.25">0.4</text>
<line x1="1243.2" y1="297.4" x2="1249.3" y2="297.4" stroke="#ddd" stroke-width="1.6" />
<text transform="translate(1242.6 304.3) scale(0.867 1)" font-size="17" fill="#ccc" text-anchor="end"  stroke="#ccc" stroke-width="0.25">0.45</text>
<line x1="1743.2" y1="758.0" x2="1743.2" y2="765.6" stroke="#ddd" stroke-width="1.5" />
<text transform="translate(1743.2 784.6) scale(0.867 1)" font-size="17" fill="#ccc" text-anchor="middle"  stroke="#ccc" stroke-width="0.25">0.45</text>
<line x1="1243.2" y1="246.7" x2="1249.3" y2="246.7" stroke="#ddd" stroke-width="1.6" />
<text transform="translate(1242.6 253.6) scale(0.867 1)" font-size="17" fill="#ccc" text-anchor="end"  stroke="#ccc" stroke-width="0.25">0.5</text>
<line x1="1798.0" y1="758.0" x2="1798.0" y2="765.6" stroke="#ddd" stroke-width="1.5" />
<text transform="translate(1798.0 784.6) scale(0.867 1)" font-size="17" fill="#ccc" text-anchor="middle"  stroke="#ccc" stroke-width="0.25">0.5</text>
<line x1="1243.2" y1="195.9" x2="1249.3" y2="195.9" stroke="#ddd" stroke-width="1.6" />
<text transform="translate(1242.6 202.8) scale(0.867 1)" font-size="17" fill="#ccc" text-anchor="end"  stroke="#ccc" stroke-width="0.25">0.55</text>
<line x1="1852.8" y1="758.0" x2="1852.8" y2="765.6" stroke="#ddd" stroke-width="1.5" />
<text transform="translate(1852.8 784.6) scale(0.867 1)" font-size="17" fill="#ccc" text-anchor="middle"  stroke="#ccc" stroke-width="0.25">0.55</text>
<g id="cie-targets">
<rect x="1378.9" y="172.9" width="13.3" height="16.2" fill="none" stroke="#fff" stroke-width="2"/>
<rect x="1404.5" y="203.3" width="13.3" height="16.2" fill="none" stroke="#fff" stroke-width="2"/>
<rect x="1444.8" y="193.1" width="13.3" height="16.2" fill="none" stroke="#fff" stroke-width="2"/>
<rect x="1465.8" y="182.5" width="13.3" height="16.2" fill="none" stroke="#fff" stroke-width="2"/>
<rect x="1493.8" y="188.3" width="13.3" height="16.2" fill="none" stroke="#fff" stroke-width="2"/>
<rect x="1442.3" y="220.6" width="13.3" height="16.2" fill="none" stroke="#fff" stroke-width="2"/>
<rect x="1526.3" y="196.3" width="13.3" height="16.2" fill="none" stroke="#fff" stroke-width="2"/>
<rect x="1411.2" y="259.1" width="13.3" height="16.2" fill="none" stroke="#fff" stroke-width="2"/>
<rect x="1394.4" y="283.5" width="13.3" height="16.2" fill="none" stroke="#fff" stroke-width="2"/>
<rect x="1400.4" y="322.3" width="13.3" height="16.2" fill="none" stroke="#fff" stroke-width="2"/>
<rect x="1435.1" y="318.7" width="13.3" height="16.2" fill="none" stroke="#fff" stroke-width="2"/>
<rect x="1456.1" y="325.1" width="13.3" height="16.2" fill="none" stroke="#fff" stroke-width="2"/>
<rect x="1492.8" y="347.9" width="13.3" height="16.2" fill="none" stroke="#fff" stroke-width="2"/>
<rect x="1437.8" y="385.2" width="13.3" height="16.2" fill="none" stroke="#fff" stroke-width="2"/>
<rect x="1590.8" y="254.3" width="13.3" height="16.2" fill="none" stroke="#fff" stroke-width="2"/>
<rect x="1557.1" y="312.2" width="13.3" height="16.2" fill="none" stroke="#fff" stroke-width="2"/>
<rect x="1576.8" y="410.3" width="13.3" height="16.2" fill="none" stroke="#fff" stroke-width="2"/>
<rect x="1736.8" y="213.3" width="13.3" height="16.2" fill="none" stroke="#fff" stroke-width="2"/>
<rect x="1653.8" y="238.4" width="13.3" height="16.2" fill="none" stroke="#fff" stroke-width="2"/>
<rect x="1437.8" y="447.8" width="13.3" height="16.2" fill="none" stroke="#fff" stroke-width="2"/>
<rect x="1435.2" y="587.5" width="13.3" height="16.2" fill="none" stroke="#fff" stroke-width="2"/>
<rect x="1571.4" y="200.9" width="13.3" height="16.2" fill="none" stroke="#fff" stroke-width="2"/>
<rect x="1571.4" y="204.8" width="13.3" height="16.2" fill="none" stroke="#fff" stroke-width="2"/>
<rect x="1532.3" y="211.6" width="13.3" height="16.2" fill="none" stroke="#fff" stroke-width="2"/>
<rect x="1544.8" y="212.1" width="13.3" height="16.2" fill="none" stroke="#fff" stroke-width="2"/>
<rect x="1550.2" y="219.8" width="13.3" height="16.2" fill="none" stroke="#fff" stroke-width="2"/>
<rect x="1544.8" y="228.3" width="13.3" height="16.2" fill="none" stroke="#fff" stroke-width="2"/>
<rect x="1519.5" y="221.5" width="13.3" height="16.2" fill="none" stroke="#fff" stroke-width="2"/>
<rect x="1513.5" y="230.0" width="13.3" height="16.2" fill="none" stroke="#fff" stroke-width="2"/>
<rect x="1498.9" y="231.7" width="13.3" height="16.2" fill="none" stroke="#fff" stroke-width="2"/>
<rect x="1498.1" y="245.0" width="13.3" height="16.2" fill="none" stroke="#fff" stroke-width="2"/>
<rect x="1507.5" y="236.9" width="13.3" height="16.2" fill="none" stroke="#fff" stroke-width="2"/>
<rect x="1521.2" y="230.0" width="13.3" height="16.2" fill="none" stroke="#fff" stroke-width="2"/>
<rect x="1528.0" y="230.9" width="13.3" height="16.2" fill="none" stroke="#fff" stroke-width="2"/>
<rect x="1458.8" y="269.2" width="13.3" height="16.2" fill="none" stroke="#000" stroke-width="2.4"/>
</g><g id="cie-actuals">
<ellipse cx="1383.9" cy="178.0" rx="4.3" ry="5.3" fill="#00f000" stroke="#000" stroke-width="1.3"/>
<ellipse cx="1410.0" cy="207.9" rx="4.3" ry="5.3" fill="#4a8c50" stroke="#000" stroke-width="1.3"/>
<ellipse cx="1451.8" cy="197.8" rx="4.3" ry="5.3" fill="#a0b848" stroke="#000" stroke-width="1.3"/>
<ellipse cx="1476.7" cy="189.7" rx="4.3" ry="5.3" fill="#ffff00" stroke="#000" stroke-width="1.3"/>
<ellipse cx="1505.9" cy="194.6" rx="4.3" ry="5.3" fill="#eec825" stroke="#000" stroke-width="1.3"/>
<ellipse cx="1449.0" cy="228.7" rx="4.3" ry="5.3" fill="#566b3c" stroke="#000" stroke-width="1.3"/>
<ellipse cx="1539.8" cy="203.0" rx="4.3" ry="5.3" fill="#e0a030" stroke="#000" stroke-width="1.3"/>
<ellipse cx="1417.9" cy="273.7" rx="4.3" ry="5.3" fill="#66b8a8" stroke="#000" stroke-width="1.3"/>
<ellipse cx="1402.5" cy="298.1" rx="4.3" ry="5.3" fill="#00ffff" stroke="#000" stroke-width="1.3"/>
<ellipse cx="1407.8" cy="338.8" rx="4.3" ry="5.3" fill="#0088a8" stroke="#000" stroke-width="1.3"/>
<ellipse cx="1442.0" cy="337.1" rx="4.3" ry="5.3" fill="#5c7a9c" stroke="#000" stroke-width="1.3"/>
<ellipse cx="1465.7" cy="341.9" rx="4.3" ry="5.3" fill="#8482b0" stroke="#000" stroke-width="1.3"/>
<ellipse cx="1489.4" cy="379.7" rx="4.3" ry="5.3" fill="#5c3c6c" stroke="#000" stroke-width="1.3"/>
<ellipse cx="1447.3" cy="413.7" rx="4.3" ry="5.3" fill="#4a5c9c" stroke="#000" stroke-width="1.3"/>
<ellipse cx="1606.0" cy="265.8" rx="4.3" ry="5.3" fill="#c05064" stroke="#000" stroke-width="1.3"/>
<ellipse cx="1569.3" cy="331.8" rx="4.3" ry="5.3" fill="#bb5595" stroke="#000" stroke-width="1.3"/>
<ellipse cx="1584.9" cy="428.7" rx="4.3" ry="5.3" fill="#ff00ff" stroke="#000" stroke-width="1.3"/>
<ellipse cx="1745.5" cy="222.3" rx="4.3" ry="5.3" fill="#ff0000" stroke="#000" stroke-width="1.3"/>
<ellipse cx="1676.5" cy="246.8" rx="4.3" ry="5.3" fill="#b0303a" stroke="#000" stroke-width="1.3"/>
<ellipse cx="1447.4" cy="483.1" rx="4.3" ry="5.3" fill="#3a4a9a" stroke="#000" stroke-width="1.3"/>
<ellipse cx="1447.4" cy="604.1" rx="4.3" ry="5.3" fill="#0000ff" stroke="#000" stroke-width="1.3"/>
<ellipse cx="1583.4" cy="207.8" rx="4.3" ry="5.3" fill="#d8802c" stroke="#000" stroke-width="1.3"/>
<ellipse cx="1589.2" cy="211.4" rx="4.3" ry="5.3" fill="#a85c24" stroke="#000" stroke-width="1.3"/>
<ellipse cx="1562.5" cy="216.8" rx="4.3" ry="5.3" fill="#7b4a2a" stroke="#000" stroke-width="1.3"/>
<ellipse cx="1568.0" cy="221.9" rx="4.3" ry="5.3" fill="#6e4530" stroke="#000" stroke-width="1.3"/>
<ellipse cx="1553.1" cy="219.7" rx="4.3" ry="5.3" fill="#8a5a33" stroke="#000" stroke-width="1.3"/>
<ellipse cx="1534.7" cy="234.7" rx="4.3" ry="5.3" fill="#c89070" stroke="#000" stroke-width="1.3"/>
<ellipse cx="1528.9" cy="228.5" rx="4.3" ry="5.3" fill="#c08860" stroke="#000" stroke-width="1.3"/>
<ellipse cx="1545.8" cy="229.6" rx="4.3" ry="5.3" fill="#d6885a" stroke="#000" stroke-width="1.3"/>
<ellipse cx="1553.5" cy="232.1" rx="4.3" ry="5.3" fill="#d98560" stroke="#000" stroke-width="1.3"/>
<ellipse cx="1558.0" cy="237.1" rx="4.3" ry="5.3" fill="#f49572" stroke="#000" stroke-width="1.3"/>
<ellipse cx="1525.1" cy="249.2" rx="4.3" ry="5.3" fill="#6f4b3e" stroke="#000" stroke-width="1.3"/>
<ellipse cx="1523.2" cy="239.0" rx="4.3" ry="5.3" fill="#c48a66" stroke="#000" stroke-width="1.3"/>
<ellipse cx="1539.0" cy="239.0" rx="4.3" ry="5.3" fill="#c98264" stroke="#000" stroke-width="1.3"/>
<ellipse cx="1529.1" cy="236.8" rx="4.3" ry="5.3" fill="#c08462" stroke="#000" stroke-width="1.3"/>
<ellipse cx="1511.8" cy="243.7" rx="4.3" ry="5.3" fill="#f9c3a0" stroke="#000" stroke-width="1.3"/>
<ellipse cx="1507.4" cy="256.9" rx="4.3" ry="5.3" fill="#e0a888" stroke="#000" stroke-width="1.3"/>
<ellipse cx="1510.8" cy="256.1" rx="4.3" ry="5.3" fill="#f7c0a0" stroke="#000" stroke-width="1.3"/>
<ellipse cx="1470.0" cy="282.8" rx="4.3" ry="5.3" fill="#e4e0e8" stroke="#000" stroke-width="1.3"/>
<ellipse cx="1469.6" cy="283.3" rx="4.3" ry="5.3" fill="#d0ccd4" stroke="#000" stroke-width="1.3"/>
<ellipse cx="1469.2" cy="283.8" rx="4.3" ry="5.3" fill="#b8b4bc" stroke="#000" stroke-width="1.3"/>
<ellipse cx="1468.5" cy="284.4" rx="4.3" ry="5.3" fill="#9a989c" stroke="#000" stroke-width="1.3"/>
<ellipse cx="1461.4" cy="318.4" rx="4.6" ry="5.6" fill="#000"/>
</g>
<g id="cie-inset">
<rect x="1695.0" y="540.5" width="209.0" height="166.0" fill="#333" />
<rect x="1697" y="542.5" width="205" height="162" fill="url(#insg)" stroke="#777" stroke-width="1.6"/>
<path d="M1845 543.3 H1901.2 V578Z" fill="#962a00"/>
<rect x="1792.4" y="615.3" width="13.3" height="16.2" fill="none" stroke="#fff" stroke-width="2"/>
<rect x="1807.8" y="598.1" width="13.3" height="16.2" fill="none" stroke="#fff" stroke-width="2"/>
<ellipse cx="1854.8" cy="604.6" rx="4.3" ry="5.3" fill="#d8802c" stroke="#000" stroke-width="1.3"/>
<ellipse cx="1857.8" cy="623.1" rx="4.3" ry="5.3" fill="#a85c24" stroke="#000" stroke-width="1.3"/>
<ellipse cx="1713.5" cy="626.2" rx="4.3" ry="5.3" fill="#8a5a33" stroke="#000" stroke-width="1.3"/>
<ellipse cx="1708.0" cy="665.8" rx="4.3" ry="5.3" fill="#6e4028" stroke="#000" stroke-width="1.3"/>
<rect x="1645.0" y="717.0" width="259.5" height="34.5" fill="#333" />
<text transform="translate(1646.8 743.0) scale(0.850 1)" font-size="23.7" fill="#eee"  stroke="#eee" stroke-width="0.35">RGB Triplet: 161, 87, 33</text>
</g></g>
<g id="color-strip">
<rect x="200.0" y="1106.0" width="1720.0" height="64.0" fill="#383838" />
<g clip-path="url(#stripclip)">
<path d="M192.3 1157 V1112.5 Q192.3 1108.3 196.5 1108.3 H238.1 Q242.3 1108.3 242.3 1112.5 V1157Z" fill="url(#tileg)"/>
<rect x="197.6" y="1113" width="39.6" height="24" rx="3" fill="#b0303a" stroke="#555" stroke-opacity=".5" stroke-width=".8"/>
<text transform="translate(217.3 1152.0) scale(1.000 1)" font-size="10.8" fill="#252525" text-anchor="middle" stroke="#252525" stroke-width=".45">Red</text>
<path d="M244.3 1157 V1112.5 Q244.3 1108.3 248.5 1108.3 H290.1 Q294.3 1108.3 294.3 1112.5 V1157Z" fill="url(#tileg)"/>
<rect x="249.6" y="1113" width="39.6" height="24" rx="3" fill="#eec825" stroke="#555" stroke-opacity=".5" stroke-width=".8"/>
<text transform="translate(269.3 1152.0) scale(1.000 1)" font-size="10.8" fill="#252525" text-anchor="middle" stroke="#252525" stroke-width=".45">Yellow</text>
<path d="M296.3 1157 V1112.5 Q296.3 1108.3 300.5 1108.3 H342.1 Q346.3 1108.3 346.3 1112.5 V1157Z" fill="url(#tileg)"/>
<rect x="301.6" y="1113" width="39.6" height="24" rx="3" fill="#bb5595" stroke="#555" stroke-opacity=".5" stroke-width=".8"/>
<text transform="translate(321.3 1152.0) scale(1.000 1)" font-size="10.8" fill="#252525" text-anchor="middle" stroke="#252525" stroke-width=".45">Magenta</text>
<path d="M348.3 1157 V1112.5 Q348.3 1108.3 352.5 1108.3 H394.1 Q398.3 1108.3 398.3 1112.5 V1157Z" fill="url(#tileg)"/>
<rect x="353.6" y="1113" width="39.6" height="24" rx="3" fill="#0088a8" stroke="#555" stroke-opacity=".5" stroke-width=".8"/>
<text transform="translate(373.3 1152.0) scale(1.000 1)" font-size="10.8" fill="#252525" text-anchor="middle" stroke="#252525" stroke-width=".45">Cyan</text>
<path d="M400.3 1157 V1112.5 Q400.3 1108.3 404.5 1108.3 H446.1 Q450.3 1108.3 450.3 1112.5 V1157Z" fill="url(#tileg)"/>
<rect x="405.6" y="1113" width="39.6" height="24" rx="3" fill="#ff0000" stroke="#555" stroke-opacity=".5" stroke-width=".8"/>
<text transform="translate(425.3 1152.0) scale(0.900 1)" font-size="10.8" fill="#252525" text-anchor="middle" stroke="#252525" stroke-width=".45">100% Red</text>
<path d="M452.3 1157 V1112.5 Q452.3 1108.3 456.5 1108.3 H498.1 Q502.3 1108.3 502.3 1112.5 V1157Z" fill="url(#tileg)"/>
<rect x="457.6" y="1112.8" width="39.6" height="12.4" rx="3" fill="#00ff00" stroke="#555" stroke-opacity=".5" stroke-width=".8"/>
<text transform="translate(477.3 1139.6) scale(1.000 1)" font-size="10.8" fill="#252525" text-anchor="middle" stroke="#252525" stroke-width=".45">100%</text>
<text transform="translate(477.3 1152.0) scale(1.000 1)" font-size="10.8" fill="#252525" text-anchor="middle" stroke="#252525" stroke-width=".45">Green</text>
<path d="M504.3 1157 V1112.5 Q504.3 1108.3 508.5 1108.3 H550.1 Q554.3 1108.3 554.3 1112.5 V1157Z" fill="url(#tileg)"/>
<rect x="509.6" y="1112.8" width="39.6" height="12.4" rx="3" fill="#0000ff" stroke="#555" stroke-opacity=".5" stroke-width=".8"/>
<text transform="translate(529.3 1139.6) scale(1.000 1)" font-size="10.8" fill="#252525" text-anchor="middle" stroke="#252525" stroke-width=".45">100%</text>
<text transform="translate(529.3 1152.0) scale(1.000 1)" font-size="10.8" fill="#252525" text-anchor="middle" stroke="#252525" stroke-width=".45">Blue</text>
<path d="M556.3 1157 V1112.5 Q556.3 1108.3 560.5 1108.3 H602.1 Q606.3 1108.3 606.3 1112.5 V1157Z" fill="url(#tileg)"/>
<rect x="561.6" y="1112.8" width="39.6" height="12.4" rx="3" fill="#00ffff" stroke="#555" stroke-opacity=".5" stroke-width=".8"/>
<text transform="translate(581.3 1139.6) scale(1.000 1)" font-size="10.8" fill="#252525" text-anchor="middle" stroke="#252525" stroke-width=".45">100%</text>
<text transform="translate(581.3 1152.0) scale(1.000 1)" font-size="10.8" fill="#252525" text-anchor="middle" stroke="#252525" stroke-width=".45">Cyan</text>
<path d="M608.3 1157 V1112.5 Q608.3 1108.3 612.5 1108.3 H654.1 Q658.3 1108.3 658.3 1112.5 V1157Z" fill="url(#tileg)"/>
<rect x="613.6" y="1112.8" width="39.6" height="12.4" rx="3" fill="#ff00ff" stroke="#555" stroke-opacity=".5" stroke-width=".8"/>
<text transform="translate(633.3 1139.6) scale(1.000 1)" font-size="10.8" fill="#252525" text-anchor="middle" stroke="#252525" stroke-width=".45">100%</text>
<text transform="translate(633.3 1152.0) scale(0.970 1)" font-size="10.8" fill="#252525" text-anchor="middle" stroke="#252525" stroke-width=".45">Magenta</text>
<path d="M660.3 1157 V1112.5 Q660.3 1108.3 664.5 1108.3 H706.1 Q710.3 1108.3 710.3 1112.5 V1157Z" fill="url(#tileg)"/>
<rect x="665.6" y="1112.8" width="39.6" height="12.4" rx="3" fill="#ffff00" stroke="#555" stroke-opacity=".5" stroke-width=".8"/>
<text transform="translate(685.3 1139.6) scale(1.000 1)" font-size="10.8" fill="#252525" text-anchor="middle" stroke="#252525" stroke-width=".45">100%</text>
<text transform="translate(685.3 1152.0) scale(1.000 1)" font-size="10.8" fill="#252525" text-anchor="middle" stroke="#252525" stroke-width=".45">Yellow</text>
<path d="M712.3 1157 V1112.5 Q712.3 1108.3 716.5 1108.3 H758.1 Q762.3 1108.3 762.3 1112.5 V1157Z" fill="url(#tileg)"/>
<rect x="717.6" y="1113" width="39.6" height="24" rx="3" fill="#6e4028" stroke="#555" stroke-opacity=".5" stroke-width=".8"/>
<text transform="translate(737.3 1152.0) scale(1.000 1)" font-size="10.8" fill="#252525" text-anchor="middle" stroke="#252525" stroke-width=".45">2E</text>
<path d="M764.3 1157 V1112.5 Q764.3 1108.3 768.5 1108.3 H810.1 Q814.3 1108.3 814.3 1112.5 V1157Z" fill="url(#tileg)"/>
<rect x="769.6" y="1113" width="39.6" height="24" rx="3" fill="#cc8a66" stroke="#555" stroke-opacity=".5" stroke-width=".8"/>
<text transform="translate(789.3 1152.0) scale(1.000 1)" font-size="10.8" fill="#252525" text-anchor="middle" stroke="#252525" stroke-width=".45">2F</text>
<path d="M816.3 1157 V1112.5 Q816.3 1108.3 820.5 1108.3 H862.1 Q866.3 1108.3 866.3 1112.5 V1157Z" fill="url(#tileg)"/>
<rect x="821.6" y="1113" width="39.6" height="24" rx="3" fill="#fdc090" stroke="#555" stroke-opacity=".5" stroke-width=".8"/>
<text transform="translate(841.3 1152.0) scale(1.000 1)" font-size="10.8" fill="#252525" text-anchor="middle" stroke="#252525" stroke-width=".45">2K</text>
<path d="M868.3 1157 V1112.5 Q868.3 1108.3 872.5 1108.3 H914.1 Q918.3 1108.3 918.3 1112.5 V1157Z" fill="url(#tileg)"/>
<rect x="873.6" y="1113" width="39.6" height="24" rx="3" fill="#fdc4a8" stroke="#555" stroke-opacity=".5" stroke-width=".8"/>
<text transform="translate(893.3 1152.0) scale(1.000 1)" font-size="10.8" fill="#252525" text-anchor="middle" stroke="#252525" stroke-width=".45">5D</text>
<path d="M920.3 1157 V1112.5 Q920.3 1108.3 924.5 1108.3 H966.1 Q970.3 1108.3 970.3 1112.5 V1157Z" fill="url(#tileg)"/>
<rect x="925.6" y="1113" width="39.6" height="24" rx="3" fill="#f5a87c" stroke="#555" stroke-opacity=".5" stroke-width=".8"/>
<text transform="translate(945.3 1152.0) scale(1.000 1)" font-size="10.8" fill="#252525" text-anchor="middle" stroke="#252525" stroke-width=".45">7E</text>
<path d="M972.3 1157 V1112.5 Q972.3 1108.3 976.5 1108.3 H1018.1 Q1022.3 1108.3 1022.3 1112.5 V1157Z" fill="url(#tileg)"/>
<rect x="977.6" y="1113" width="39.6" height="24" rx="3" fill="#c88c60" stroke="#555" stroke-opacity=".5" stroke-width=".8"/>
<text transform="translate(997.3 1152.0) scale(1.000 1)" font-size="10.8" fill="#252525" text-anchor="middle" stroke="#252525" stroke-width=".45">7F</text>
<path d="M1024.3 1157 V1112.5 Q1024.3 1108.3 1028.5 1108.3 H1070.1 Q1074.3 1108.3 1074.3 1112.5 V1157Z" fill="url(#tileg)"/>
<rect x="1029.6" y="1113" width="39.6" height="24" rx="3" fill="#8f5c34" stroke="#555" stroke-opacity=".5" stroke-width=".8"/>
<text transform="translate(1049.3 1152.0) scale(1.000 1)" font-size="10.8" fill="#252525" text-anchor="middle" stroke="#252525" stroke-width=".45">7G</text>
<path d="M1076.3 1157 V1112.5 Q1076.3 1108.3 1080.5 1108.3 H1122.1 Q1126.3 1108.3 1126.3 1112.5 V1157Z" fill="url(#tileg)"/>
<rect x="1081.6" y="1113" width="39.6" height="24" rx="3" fill="#d09470" stroke="#555" stroke-opacity=".5" stroke-width=".8"/>
<text transform="translate(1101.3 1152.0) scale(1.000 1)" font-size="10.8" fill="#252525" text-anchor="middle" stroke="#252525" stroke-width=".45">7H</text>
<path d="M1128.3 1157 V1112.5 Q1128.3 1108.3 1132.5 1108.3 H1174.1 Q1178.3 1108.3 1178.3 1112.5 V1157Z" fill="url(#tilesel)"/>
<rect x="1133.6" y="1113" width="39.6" height="24" rx="3" fill="#a05824" stroke="#555" stroke-opacity=".5" stroke-width=".8"/>
<text transform="translate(1153.3 1152.0) scale(1.000 1)" font-size="10.8" fill="#fff" text-anchor="middle" stroke="#fff" stroke-width=".45">7I</text>
<path d="M1180.3 1157 V1112.5 Q1180.3 1108.3 1184.5 1108.3 H1226.1 Q1230.3 1108.3 1230.3 1112.5 V1157Z" fill="url(#tileg)"/>
<rect x="1185.6" y="1113" width="39.6" height="24" rx="3" fill="#d8845c" stroke="#555" stroke-opacity=".5" stroke-width=".8"/>
<text transform="translate(1205.3 1152.0) scale(1.000 1)" font-size="10.8" fill="#252525" text-anchor="middle" stroke="#252525" stroke-width=".45">7J</text>
<path d="M1232.3 1157 V1112.5 Q1232.3 1108.3 1236.5 1108.3 H1278.1 Q1282.3 1108.3 1282.3 1112.5 V1157Z" fill="url(#tileg)"/>
<rect x="1237.6" y="1113" width="39.6" height="24" rx="3" fill="#cf8668" stroke="#555" stroke-opacity=".5" stroke-width=".8"/>
<text transform="translate(1257.3 1152.0) scale(1.000 1)" font-size="10.8" fill="#252525" text-anchor="middle" stroke="#252525" stroke-width=".45">8D</text>
<path d="M1284.3 1157 V1112.5 Q1284.3 1108.3 1288.5 1108.3 H1330.1 Q1334.3 1108.3 1334.3 1112.5 V1157Z" fill="url(#tileg)"/>
<rect x="1289.6" y="1113" width="39.6" height="24" rx="3" fill="#f99670" stroke="#555" stroke-opacity=".5" stroke-width=".8"/>
<text transform="translate(1309.3 1152.0) scale(1.000 1)" font-size="10.8" fill="#252525" text-anchor="middle" stroke="#252525" stroke-width=".45">8E</text>
<path d="M1336.3 1157 V1112.5 Q1336.3 1108.3 1340.5 1108.3 H1382.1 Q1386.3 1108.3 1386.3 1112.5 V1157Z" fill="url(#tileg)"/>
<rect x="1341.6" y="1113" width="39.6" height="24" rx="3" fill="#c88c6c" stroke="#555" stroke-opacity=".5" stroke-width=".8"/>
<text transform="translate(1361.3 1152.0) scale(1.000 1)" font-size="10.8" fill="#252525" text-anchor="middle" stroke="#252525" stroke-width=".45">8F</text>
<path d="M1388.3 1157 V1112.5 Q1388.3 1108.3 1392.5 1108.3 H1434.1 Q1438.3 1108.3 1438.3 1112.5 V1157Z" fill="url(#tileg)"/>
<rect x="1393.6" y="1113" width="39.6" height="24" rx="3" fill="#c48a68" stroke="#555" stroke-opacity=".5" stroke-width=".8"/>
<text transform="translate(1413.3 1152.0) scale(1.000 1)" font-size="10.8" fill="#252525" text-anchor="middle" stroke="#252525" stroke-width=".45">8G</text>
<path d="M1440.3 1157 V1112.5 Q1440.3 1108.3 1444.5 1108.3 H1486.1 Q1490.3 1108.3 1490.3 1112.5 V1157Z" fill="url(#tileg)"/>
<rect x="1445.6" y="1113" width="39.6" height="24" rx="3" fill="#d4906c" stroke="#555" stroke-opacity=".5" stroke-width=".8"/>
<text transform="translate(1465.3 1152.0) scale(1.000 1)" font-size="10.8" fill="#252525" text-anchor="middle" stroke="#252525" stroke-width=".45">8H</text>
<path d="M1492.3 1157 V1112.5 Q1492.3 1108.3 1496.5 1108.3 H1538.1 Q1542.3 1108.3 1542.3 1112.5 V1157Z" fill="url(#tileg)"/>
<rect x="1497.6" y="1113" width="39.6" height="24" rx="3" fill="#7a4822" stroke="#555" stroke-opacity=".5" stroke-width=".8"/>
<text transform="translate(1517.3 1152.0) scale(1.000 1)" font-size="10.8" fill="#252525" text-anchor="middle" stroke="#252525" stroke-width=".45">8I</text>
<path d="M1544.3 1157 V1112.5 Q1544.3 1108.3 1548.5 1108.3 H1590.1 Q1594.3 1108.3 1594.3 1112.5 V1157Z" fill="url(#tileg)"/>
<rect x="1549.6" y="1113" width="39.6" height="24" rx="3" fill="#e89860" stroke="#555" stroke-opacity=".5" stroke-width=".8"/>
<text transform="translate(1569.3 1152.0) scale(1.000 1)" font-size="10.8" fill="#252525" text-anchor="middle" stroke="#252525" stroke-width=".45">8J</text>
</g>
<rect x="200.0" y="1157.3" width="1396.0" height="12.7" fill="#5c5c5c" />
<rect x="201.5" y="1158.2" width="10.6" height="11" rx="2" fill="#8a8a8a"/><path d="M209.6 1159.6 v8.2 l-5.4 -4.1z" fill="#444"/>
<rect x="1584" y="1158.2" width="10.6" height="11" rx="2" fill="#8a8a8a"/><path d="M1586.6 1159.6 v8.2 l5.4 -4.1z" fill="#444"/>
<rect x="802" y="1158.4" width="778" height="10.8" rx="5.4" fill="#454545"/>
</g>
<g id="controls">
<rect x="1597.5" y="1127" width="47" height="42" rx="5" fill="url(#smg)"/>
<rect x="1606.6" y="1133" width="28.4" height="28.6" rx="4.5" fill="#909090" stroke="#242424" stroke-width="2.2"/>
<rect x="1614.4" y="1141.0" width="13.6" height="13.2" fill="#000" />
<path d="M1645.6 1138 V1113 Q1645.6 1109 1649.6 1109 H1686.6 Q1690.6 1109 1690.6 1113 V1138Z" fill="url(#smg)" stroke="#444" stroke-width=".8"/>
<circle cx="1668.2" cy="1122" r="9" fill="#6a6a6a"/>
<path d="M1690.9 1138 V1113 Q1690.9 1109 1694.9 1109 H1731.9 Q1735.9 1109 1735.9 1113 V1138Z" fill="url(#smg)" stroke="#444" stroke-width=".8"/>
<circle cx="1713.5" cy="1122" r="9" fill="#6a6a6a"/>
<path d="M1736.3 1138 V1113 Q1736.3 1109 1740.3 1109 H1777.3 Q1781.3 1109 1781.3 1113 V1138Z" fill="url(#smg)" stroke="#444" stroke-width=".8"/>
<circle cx="1758.9" cy="1122" r="9" fill="#6a6a6a"/>
<path d="M1781.6 1138 V1113 Q1781.6 1109 1785.6 1109 H1822.6 Q1826.6 1109 1826.6 1113 V1138Z" fill="url(#smg)" stroke="#444" stroke-width=".8"/>
<circle cx="1804.2" cy="1122" r="9" fill="#6a6a6a"/>
<path d="M1827.0 1138 V1113 Q1827.0 1109 1831.0 1109 H1868.0 Q1872.0 1109 1872.0 1113 V1138Z" fill="url(#smd)" stroke="#444" stroke-width=".8"/>
<circle cx="1849.6" cy="1122" r="9" fill="#333"/>
<path d="M1872.3 1138 V1113 Q1872.3 1109 1876.3 1109 H1913.3 Q1917.3 1109 1917.3 1113 V1138Z" fill="url(#smd)" stroke="#444" stroke-width=".8"/>
<circle cx="1894.9" cy="1122" r="9" fill="#333"/>
<rect x="1645.6" y="1139.5" width="136.6" height="29" rx="4" fill="url(#navg)" stroke="#555" stroke-width=".8"/>
<rect x="1782.6" y="1139.5" width="136" height="29" rx="4" fill="url(#navg)" stroke="#555" stroke-width=".8"/>
<circle cx="1677" cy="1154" r="10" fill="#a2a2a2"/><circle cx="1890" cy="1154" r="10" fill="#a2a2a2"/>
<text transform="translate(1677.0 1160.0) scale(1.000 1)" font-size="20" fill="#2a2a2a" text-anchor="middle" >«</text>
<text transform="translate(1890.0 1160.0) scale(1.000 1)" font-size="20" fill="#2a2a2a" text-anchor="middle" >»</text>
<text transform="translate(1704.0 1162.3) scale(0.957 1)" font-size="23.5" fill="#2a2a2a" stroke="#2a2a2a" stroke-width=".5">Back</text>
<text transform="translate(1810.2 1162.3) scale(1.064 1)" font-size="23.5" fill="#2a2a2a" stroke="#2a2a2a" stroke-width=".5">Next</text>
</g>
<g id="watermark" opacity=".8">
<path d="M1592.3 1130 L1623.1 1135.4 L1569.2 1153.8 L1537.7 1136.9 L1535.4 1088.5 L1586.2 1099.2 L1588.1 1126.2 L1547.7 1131.2" fill="none" stroke="#f0f0f0" stroke-opacity=".7" stroke-width="7.4" stroke-linejoin="round" stroke-linecap="round"/>
<path d="M1592.3 1130 L1623.1 1135.4 L1569.2 1153.8 L1537.7 1136.9 L1535.4 1088.5 L1586.2 1099.2 L1588.1 1126.2 L1547.7 1131.2" fill="none" stroke="#a8343a" stroke-width="4.4" stroke-linejoin="round" stroke-linecap="round"/>
<path d="M1541.5 1095 L1583 1103.5 L1585 1124.5 M1541.5 1095 L1543.5 1133" fill="none" stroke="#f0f0f0" stroke-opacity=".6" stroke-width="1.2"/>
<path d="M1549.6 1105 Q1558 1106 1565.6 1123.6 Q1575 1102 1592.6 1086.6 Q1572 1100 1565.4 1112.5 Q1560 1103 1549.6 1105Z" fill="#3a3a3a" stroke="#f0f0f0" stroke-opacity=".8" stroke-width="2" stroke-linejoin="round"/>
<text transform="translate(1594.0 1126.3) scale(0.877 1)" font-size="39" fill="#98282e" font-weight="bold" stroke="#f4f4f4" stroke-opacity=".8" stroke-width="1.8" paint-order="stroke">NOTEBOOK</text>
<text transform="translate(1792.6 1126.3) scale(0.853 1)" font-size="39" fill="#2a2a2a" stroke="#f4f4f4" stroke-opacity=".8" stroke-width="2" paint-order="stroke">CHECK</text>
</g>
</svg>
</body></html>
